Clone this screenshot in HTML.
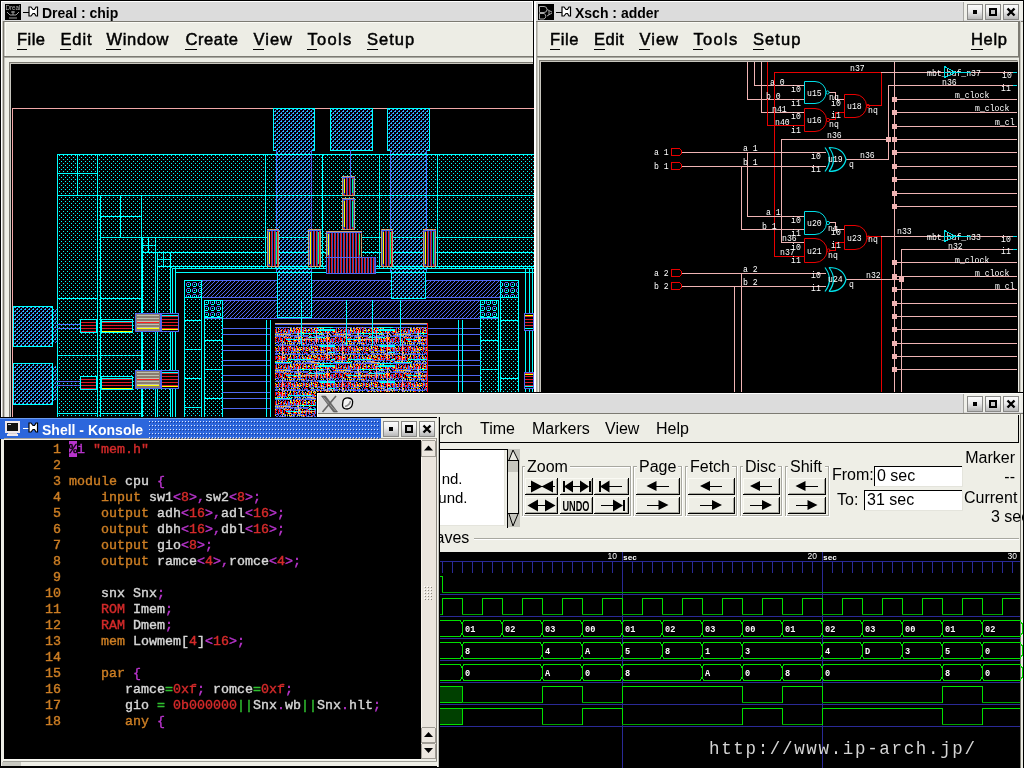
<!DOCTYPE html>
<html><head><meta charset="utf-8"><style>
html,body{margin:0;padding:0;background:#000;overflow:hidden;width:1024px;height:768px}
svg{display:block;will-change:transform}
text{white-space:pre}
</style></head><body>
<svg width="1024" height="768" viewBox="0 0 1024 768" shape-rendering="crispEdges">
<rect x="0" y="0" width="1024" height="768" fill="#000" />
<rect x="1" y="1" width="532" height="767" fill="#fff" />
<rect x="2" y="2" width="530" height="19" fill="#dcdcdc" />
<rect x="2" y="21" width="530" height="747" fill="#eeeee6" />
<rect x="2" y="21" width="1" height="747" fill="#c8c6be" />
<rect x="3" y="21" width="1" height="747" fill="#7c7a72" />
<rect x="4" y="22" width="1" height="746" fill="#c8c6be" />
<rect x="3" y="21" width="530" height="1" fill="#7c7a72" />
<rect x="5" y="22" width="528" height="34" fill="#edede5" />
<rect x="5" y="22" width="528" height="1" fill="#fbfbf5" />
<rect x="5" y="22" width="1" height="34" fill="#fbfbf5" />
<rect x="4" y="56" width="529" height="1" fill="#7c7a72" />
<rect x="4" y="57" width="529" height="1" fill="#a8a8a0" />
<rect x="9" y="62" width="524" height="1" fill="#7c7a72" />
<rect x="10" y="63" width="523" height="1" fill="#c8c6be" />
<rect x="9" y="62" width="1" height="706" fill="#7c7a72" />
<rect x="10" y="63" width="1" height="705" fill="#c8c6be" />
<rect x="11" y="64" width="522" height="704" fill="#000" />
<text x="42" y="18" font-family="Liberation Sans" font-size="14" font-weight="bold" fill="#000" >Dreal : chip</text>
<text x="17" y="45" font-family="Liberation Sans" font-size="16.5" font-weight="normal" fill="#000" stroke="#000" stroke-width="0.5" textLength="28.0" lengthAdjust="spacing">File</text>
<rect x="17" y="49" width="10" height="1" fill="#000" />
<text x="60.5" y="45" font-family="Liberation Sans" font-size="16.5" font-weight="normal" fill="#000" stroke="#000" stroke-width="0.5" textLength="31.0" lengthAdjust="spacing">Edit</text>
<rect x="60" y="49" width="11" height="1" fill="#000" />
<text x="106.5" y="45" font-family="Liberation Sans" font-size="16.5" font-weight="normal" fill="#000" stroke="#000" stroke-width="0.5" textLength="62.0" lengthAdjust="spacing">Window</text>
<rect x="106" y="49" width="15" height="1" fill="#000" />
<text x="185.5" y="45" font-family="Liberation Sans" font-size="16.5" font-weight="normal" fill="#000" stroke="#000" stroke-width="0.5" textLength="52.5" lengthAdjust="spacing">Create</text>
<rect x="185" y="49" width="12" height="1" fill="#000" />
<text x="253.5" y="45" font-family="Liberation Sans" font-size="16.5" font-weight="normal" fill="#000" stroke="#000" stroke-width="0.5" textLength="38.5" lengthAdjust="spacing">View</text>
<rect x="253" y="49" width="11" height="1" fill="#000" />
<text x="307.5" y="45" font-family="Liberation Sans" font-size="16.5" font-weight="normal" fill="#000" stroke="#000" stroke-width="0.5" textLength="43.7" lengthAdjust="spacing">Tools</text>
<rect x="307" y="49" width="10" height="1" fill="#000" />
<text x="367" y="45" font-family="Liberation Sans" font-size="16.5" font-weight="normal" fill="#000" stroke="#000" stroke-width="0.5" textLength="47.2" lengthAdjust="spacing">Setup</text>
<rect x="367" y="49" width="11" height="1" fill="#000" />
<rect x="534" y="1" width="490" height="767" fill="#fff" />
<rect x="536" y="2" width="488" height="19" fill="#dcdcdc" />
<rect x="536" y="21" width="488" height="747" fill="#eeeee6" />
<rect x="536" y="21" width="1" height="747" fill="#a8a8a0" />
<rect x="537" y="22" width="1" height="746" fill="#c8c6be" />
<rect x="536" y="21" width="488" height="1" fill="#7c7a72" />
<rect x="538" y="22" width="480" height="34" fill="#edede5" />
<rect x="538" y="22" width="481" height="1" fill="#fbfbf5" />
<rect x="1018" y="22" width="1" height="36" fill="#7c7a72" />
<rect x="1019" y="22" width="1" height="36" fill="#a8a8a0" />
<rect x="537" y="56" width="483" height="1" fill="#7c7a72" />
<rect x="537" y="57" width="483" height="1" fill="#a8a8a0" />
<rect x="539" y="60" width="480" height="1" fill="#7c7a72" />
<rect x="540" y="61" width="479" height="1" fill="#c8c6be" />
<rect x="539" y="60" width="1" height="708" fill="#7c7a72" />
<rect x="540" y="61" width="1" height="707" fill="#c8c6be" />
<rect x="541" y="62" width="476" height="706" fill="#000" />
<rect x="1017" y="60" width="1" height="708" fill="#a8a8a0" />
<rect x="1018" y="60" width="1" height="708" fill="#eeeee6" />
<rect x="1019" y="21" width="1" height="747" fill="#7c7a72" />
<rect x="1020" y="21" width="1" height="747" fill="#c8c6be" />
<rect x="1023" y="0" width="1" height="768" fill="#000" />
<text x="575" y="18" font-family="Liberation Sans" font-size="14" font-weight="bold" fill="#000" >Xsch : adder</text>
<text x="550" y="45" font-family="Liberation Sans" font-size="16.5" font-weight="normal" fill="#000" stroke="#000" stroke-width="0.5" textLength="28.5" lengthAdjust="spacing">File</text>
<rect x="550" y="49" width="10" height="1" fill="#000" />
<text x="594" y="45" font-family="Liberation Sans" font-size="16.5" font-weight="normal" fill="#000" stroke="#000" stroke-width="0.5" textLength="29.9" lengthAdjust="spacing">Edit</text>
<rect x="594" y="49" width="11" height="1" fill="#000" />
<text x="639.5" y="45" font-family="Liberation Sans" font-size="16.5" font-weight="normal" fill="#000" stroke="#000" stroke-width="0.5" textLength="38.5" lengthAdjust="spacing">View</text>
<rect x="639" y="49" width="11" height="1" fill="#000" />
<text x="693.5" y="45" font-family="Liberation Sans" font-size="16.5" font-weight="normal" fill="#000" stroke="#000" stroke-width="0.5" textLength="43.7" lengthAdjust="spacing">Tools</text>
<rect x="693" y="49" width="10" height="1" fill="#000" />
<text x="753" y="45" font-family="Liberation Sans" font-size="16.5" font-weight="normal" fill="#000" stroke="#000" stroke-width="0.5" textLength="47.5" lengthAdjust="spacing">Setup</text>
<rect x="753" y="49" width="11" height="1" fill="#000" />
<text x="971" y="45" font-family="Liberation Sans" font-size="16.5" font-weight="normal" fill="#000" stroke="#000" stroke-width="0.5" textLength="36.0" lengthAdjust="spacing">Help</text>
<rect x="971" y="49" width="12" height="1" fill="#000" />
<defs><pattern id="pDot" patternUnits="userSpaceOnUse" x="0" y="0" width="4" height="4"><rect x="1" y="1" width="1" height="1" fill="#00ffff"/><rect x="3" y="3" width="1" height="1" fill="#00ffff"/></pattern><pattern id="pHat" patternUnits="userSpaceOnUse" x="0" y="0" width="4" height="4"><rect x="0" y="0" width="4" height="4" fill="#000"/><rect x="1" y="0" width="1" height="1" fill="#5068f0"/><rect x="0" y="1" width="1" height="1" fill="#5068f0"/><rect x="3" y="2" width="1" height="1" fill="#5068f0"/><rect x="2" y="3" width="1" height="1" fill="#5068f0"/><rect x="1" y="1" width="1" height="1" fill="#00ffff"/><rect x="3" y="3" width="1" height="1" fill="#00ffff"/></pattern><pattern id="pBand" patternUnits="userSpaceOnUse" x="0" y="0" width="4" height="4"><rect x="3" y="0" width="1" height="1" fill="#5068f0"/><rect x="2" y="1" width="1" height="1" fill="#5068f0"/><rect x="1" y="2" width="1" height="1" fill="#5068f0"/><rect x="0" y="3" width="1" height="1" fill="#5068f0"/></pattern><pattern id="pRing" patternUnits="userSpaceOnUse" x="0" y="0" width="6" height="6"><rect x="0" y="0" width="6" height="6" fill="#000"/><rect x="1" y="0" width="3" height="1" fill="#5068f0"/><rect x="0" y="1" width="1" height="3" fill="#5068f0"/><rect x="4" y="1" width="1" height="3" fill="#00ffff"/><rect x="1" y="4" width="3" height="1" fill="#00ffff"/><rect x="2" y="2" width="1" height="1" fill="#00ffff"/></pattern><pattern id="pCore" patternUnits="userSpaceOnUse" x="275" y="327" width="60" height="36"><rect x="0" y="0" width="13" height="1" fill="#5068f0"/><rect x="13" y="0" width="1" height="1" fill="#d8b080"/><rect x="14" y="0" width="3" height="1" fill="#5068f0"/><rect x="18" y="0" width="2" height="1" fill="#5068f0"/><rect x="21" y="0" width="1" height="1" fill="#5068f0"/><rect x="22" y="0" width="1" height="1" fill="#d8b080"/><rect x="23" y="0" width="4" height="1" fill="#5068f0"/><rect x="27" y="0" width="1" height="1" fill="#d8b080"/><rect x="28" y="0" width="14" height="1" fill="#5068f0"/><rect x="42" y="0" width="16" height="1" fill="#00ffff"/><rect x="58" y="0" width="2" height="1" fill="#5068f0"/><rect x="1" y="1" width="1" height="1" fill="#5068f0"/><rect x="3" y="1" width="1" height="1" fill="#ffff00"/><rect x="5" y="1" width="1" height="1" fill="#5068f0"/><rect x="8" y="1" width="1" height="1" fill="#5068f0"/><rect x="10" y="1" width="1" height="1" fill="#ff0000"/><rect x="15" y="1" width="1" height="1" fill="#ffff00"/><rect x="16" y="1" width="1" height="1" fill="#5068f0"/><rect x="18" y="1" width="1" height="1" fill="#ffff00"/><rect x="19" y="1" width="1" height="1" fill="#5068f0"/><rect x="20" y="1" width="1" height="1" fill="#ff0000"/><rect x="21" y="1" width="1" height="1" fill="#ffff00"/><rect x="22" y="1" width="1" height="1" fill="#ff0000"/><rect x="24" y="1" width="1" height="1" fill="#ffff00"/><rect x="25" y="1" width="1" height="1" fill="#ff0000"/><rect x="26" y="1" width="1" height="1" fill="#5068f0"/><rect x="28" y="1" width="1" height="1" fill="#ff0000"/><rect x="29" y="1" width="1" height="1" fill="#5068f0"/><rect x="30" y="1" width="1" height="1" fill="#ffff00"/><rect x="34" y="1" width="1" height="1" fill="#ff0000"/><rect x="35" y="1" width="1" height="1" fill="#5068f0"/><rect x="36" y="1" width="1" height="1" fill="#ffff00"/><rect x="39" y="1" width="1" height="1" fill="#ffff00"/><rect x="40" y="1" width="2" height="1" fill="#ff0000"/><rect x="42" y="1" width="1" height="1" fill="#ffff00"/><rect x="43" y="1" width="1" height="1" fill="#5068f0"/><rect x="45" y="1" width="1" height="1" fill="#ffff00"/><rect x="46" y="1" width="1" height="1" fill="#ff0000"/><rect x="47" y="1" width="1" height="1" fill="#5068f0"/><rect x="48" y="1" width="1" height="1" fill="#ffff00"/><rect x="55" y="1" width="1" height="1" fill="#ff0000"/><rect x="0" y="2" width="1" height="1" fill="#ff0000"/><rect x="1" y="2" width="1" height="1" fill="#5068f0"/><rect x="3" y="2" width="1" height="1" fill="#ff0000"/><rect x="4" y="2" width="1" height="1" fill="#5068f0"/><rect x="6" y="2" width="1" height="1" fill="#ff0000"/><rect x="7" y="2" width="1" height="1" fill="#5068f0"/><rect x="9" y="2" width="1" height="1" fill="#ff0000"/><rect x="10" y="2" width="1" height="1" fill="#5068f0"/><rect x="12" y="2" width="1" height="1" fill="#ff0000"/><rect x="13" y="2" width="1" height="1" fill="#5068f0"/><rect x="15" y="2" width="1" height="1" fill="#ffff00"/><rect x="16" y="2" width="1" height="1" fill="#5068f0"/><rect x="18" y="2" width="1" height="1" fill="#ff0000"/><rect x="19" y="2" width="2" height="1" fill="#5068f0"/><rect x="21" y="2" width="1" height="1" fill="#ff0000"/><rect x="22" y="2" width="1" height="1" fill="#ffff00"/><rect x="23" y="2" width="2" height="1" fill="#ff0000"/><rect x="25" y="2" width="1" height="1" fill="#5068f0"/><rect x="27" y="2" width="1" height="1" fill="#ff0000"/><rect x="28" y="2" width="1" height="1" fill="#5068f0"/><rect x="30" y="2" width="1" height="1" fill="#ff0000"/><rect x="31" y="2" width="1" height="1" fill="#5068f0"/><rect x="33" y="2" width="1" height="1" fill="#ffff00"/><rect x="34" y="2" width="1" height="1" fill="#5068f0"/><rect x="36" y="2" width="1" height="1" fill="#ff0000"/><rect x="37" y="2" width="2" height="1" fill="#5068f0"/><rect x="39" y="2" width="1" height="1" fill="#ffff00"/><rect x="41" y="2" width="1" height="1" fill="#5068f0"/><rect x="42" y="2" width="1" height="1" fill="#ff0000"/><rect x="43" y="2" width="1" height="1" fill="#5068f0"/><rect x="44" y="2" width="16" height="1" fill="#00ffff"/><rect x="0" y="3" width="1" height="1" fill="#ff0000"/><rect x="1" y="3" width="1" height="1" fill="#5068f0"/><rect x="3" y="3" width="1" height="1" fill="#ff0000"/><rect x="5" y="3" width="1" height="1" fill="#5068f0"/><rect x="6" y="3" width="1" height="1" fill="#ffff00"/><rect x="8" y="3" width="2" height="1" fill="#ff0000"/><rect x="10" y="3" width="1" height="1" fill="#5068f0"/><rect x="12" y="3" width="1" height="1" fill="#ff0000"/><rect x="13" y="3" width="2" height="1" fill="#5068f0"/><rect x="15" y="3" width="2" height="1" fill="#ffff00"/><rect x="17" y="3" width="1" height="1" fill="#5068f0"/><rect x="18" y="3" width="1" height="1" fill="#ff0000"/><rect x="19" y="3" width="1" height="1" fill="#ffff00"/><rect x="21" y="3" width="1" height="1" fill="#ff0000"/><rect x="23" y="3" width="1" height="1" fill="#f0a0a0"/><rect x="24" y="3" width="1" height="1" fill="#ff0000"/><rect x="25" y="3" width="1" height="1" fill="#5068f0"/><rect x="27" y="3" width="1" height="1" fill="#ff0000"/><rect x="28" y="3" width="1" height="1" fill="#5068f0"/><rect x="29" y="3" width="2" height="1" fill="#ffff00"/><rect x="31" y="3" width="2" height="1" fill="#5068f0"/><rect x="33" y="3" width="2" height="1" fill="#ffff00"/><rect x="36" y="3" width="1" height="1" fill="#ff0000"/><rect x="37" y="3" width="1" height="1" fill="#5068f0"/><rect x="38" y="3" width="2" height="1" fill="#ff0000"/><rect x="40" y="3" width="1" height="1" fill="#00ffff"/><rect x="41" y="3" width="1" height="1" fill="#f0a0a0"/><rect x="42" y="3" width="18" height="1" fill="#00ffff"/><rect x="0" y="4" width="1" height="1" fill="#ff0000"/><rect x="1" y="4" width="1" height="1" fill="#5068f0"/><rect x="3" y="4" width="1" height="1" fill="#ffff00"/><rect x="4" y="4" width="2" height="1" fill="#5068f0"/><rect x="6" y="4" width="1" height="1" fill="#ff0000"/><rect x="8" y="4" width="1" height="1" fill="#5068f0"/><rect x="9" y="4" width="1" height="1" fill="#ffff00"/><rect x="10" y="4" width="2" height="1" fill="#5068f0"/><rect x="12" y="4" width="1" height="1" fill="#ff0000"/><rect x="13" y="4" width="2" height="1" fill="#5068f0"/><rect x="15" y="4" width="1" height="1" fill="#ff0000"/><rect x="16" y="4" width="1" height="1" fill="#5068f0"/><rect x="17" y="4" width="1" height="1" fill="#ffff00"/><rect x="18" y="4" width="1" height="1" fill="#ff0000"/><rect x="19" y="4" width="2" height="1" fill="#5068f0"/><rect x="21" y="4" width="1" height="1" fill="#ff0000"/><rect x="22" y="4" width="1" height="1" fill="#5068f0"/><rect x="23" y="4" width="1" height="1" fill="#f0a0a0"/><rect x="24" y="4" width="1" height="1" fill="#ff0000"/><rect x="25" y="4" width="1" height="1" fill="#ffff00"/><rect x="27" y="4" width="1" height="1" fill="#ff0000"/><rect x="28" y="4" width="1" height="1" fill="#5068f0"/><rect x="30" y="4" width="1" height="1" fill="#ff0000"/><rect x="31" y="4" width="2" height="1" fill="#5068f0"/><rect x="33" y="4" width="1" height="1" fill="#ff0000"/><rect x="35" y="4" width="1" height="1" fill="#5068f0"/><rect x="36" y="4" width="1" height="1" fill="#ff0000"/><rect x="37" y="4" width="2" height="1" fill="#5068f0"/><rect x="39" y="4" width="1" height="1" fill="#ff0000"/><rect x="40" y="4" width="1" height="1" fill="#5068f0"/><rect x="41" y="4" width="1" height="1" fill="#f0a0a0"/><rect x="42" y="4" width="1" height="1" fill="#ff0000"/><rect x="44" y="4" width="1" height="1" fill="#5068f0"/><rect x="45" y="4" width="1" height="1" fill="#ffff00"/><rect x="48" y="4" width="1" height="1" fill="#ff0000"/><rect x="50" y="4" width="1" height="1" fill="#ffff00"/><rect x="51" y="4" width="1" height="1" fill="#ff0000"/><rect x="52" y="4" width="2" height="1" fill="#5068f0"/><rect x="54" y="4" width="1" height="1" fill="#ff0000"/><rect x="55" y="4" width="1" height="1" fill="#5068f0"/><rect x="57" y="4" width="1" height="1" fill="#ff0000"/><rect x="58" y="4" width="2" height="1" fill="#ffff00"/><rect x="0" y="5" width="1" height="1" fill="#ff0000"/><rect x="1" y="5" width="1" height="1" fill="#ffff00"/><rect x="2" y="5" width="1" height="1" fill="#5068f0"/><rect x="3" y="5" width="1" height="1" fill="#ff0000"/><rect x="5" y="5" width="2" height="1" fill="#ff0000"/><rect x="8" y="5" width="1" height="1" fill="#5068f0"/><rect x="9" y="5" width="1" height="1" fill="#ff0000"/><rect x="11" y="5" width="1" height="1" fill="#ffff00"/><rect x="12" y="5" width="1" height="1" fill="#ff0000"/><rect x="13" y="5" width="2" height="1" fill="#5068f0"/><rect x="15" y="5" width="1" height="1" fill="#ff0000"/><rect x="16" y="5" width="1" height="1" fill="#5068f0"/><rect x="18" y="5" width="1" height="1" fill="#ff0000"/><rect x="19" y="5" width="2" height="1" fill="#5068f0"/><rect x="21" y="5" width="1" height="1" fill="#ff0000"/><rect x="22" y="5" width="1" height="1" fill="#5068f0"/><rect x="23" y="5" width="1" height="1" fill="#f0a0a0"/><rect x="24" y="5" width="1" height="1" fill="#ff0000"/><rect x="25" y="5" width="1" height="1" fill="#5068f0"/><rect x="27" y="5" width="2" height="1" fill="#ffff00"/><rect x="29" y="5" width="2" height="1" fill="#ff0000"/><rect x="31" y="5" width="1" height="1" fill="#5068f0"/><rect x="33" y="5" width="1" height="1" fill="#ff0000"/><rect x="34" y="5" width="1" height="1" fill="#5068f0"/><rect x="36" y="5" width="1" height="1" fill="#ff0000"/><rect x="38" y="5" width="1" height="1" fill="#ffff00"/><rect x="39" y="5" width="1" height="1" fill="#ff0000"/><rect x="40" y="5" width="1" height="1" fill="#5068f0"/><rect x="41" y="5" width="1" height="1" fill="#f0a0a0"/><rect x="42" y="5" width="1" height="1" fill="#ff0000"/><rect x="43" y="5" width="1" height="1" fill="#ffff00"/><rect x="45" y="5" width="1" height="1" fill="#ff0000"/><rect x="46" y="5" width="1" height="1" fill="#ffff00"/><rect x="47" y="5" width="1" height="1" fill="#5068f0"/><rect x="48" y="5" width="1" height="1" fill="#ff0000"/><rect x="50" y="5" width="1" height="1" fill="#5068f0"/><rect x="51" y="5" width="1" height="1" fill="#ff0000"/><rect x="52" y="5" width="1" height="1" fill="#f0a0a0"/><rect x="53" y="5" width="1" height="1" fill="#ffff00"/><rect x="54" y="5" width="1" height="1" fill="#ff0000"/><rect x="56" y="5" width="1" height="1" fill="#5068f0"/><rect x="57" y="5" width="1" height="1" fill="#ff0000"/><rect x="58" y="5" width="1" height="1" fill="#5068f0"/><rect x="59" y="5" width="1" height="1" fill="#ff0000"/><rect x="0" y="6" width="10" height="1" fill="#5068f0"/><rect x="10" y="6" width="1" height="1" fill="#80ff40"/><rect x="11" y="6" width="7" height="1" fill="#5068f0"/><rect x="18" y="6" width="1" height="1" fill="#80ff40"/><rect x="19" y="6" width="3" height="1" fill="#5068f0"/><rect x="22" y="6" width="1" height="1" fill="#00ffff"/><rect x="23" y="6" width="1" height="1" fill="#f0a0a0"/><rect x="24" y="6" width="17" height="1" fill="#00ffff"/><rect x="41" y="6" width="1" height="1" fill="#f0a0a0"/><rect x="42" y="6" width="6" height="1" fill="#00ffff"/><rect x="48" y="6" width="4" height="1" fill="#5068f0"/><rect x="52" y="6" width="1" height="1" fill="#f0a0a0"/><rect x="53" y="6" width="2" height="1" fill="#5068f0"/><rect x="57" y="6" width="2" height="1" fill="#5068f0"/><rect x="0" y="7" width="1" height="1" fill="#ffff00"/><rect x="1" y="7" width="1" height="1" fill="#5068f0"/><rect x="2" y="7" width="1" height="1" fill="#ffff00"/><rect x="3" y="7" width="1" height="1" fill="#5068f0"/><rect x="4" y="7" width="1" height="1" fill="#ffff00"/><rect x="5" y="7" width="1" height="1" fill="#ff0000"/><rect x="6" y="7" width="1" height="1" fill="#ffff00"/><rect x="7" y="7" width="1" height="1" fill="#ff0000"/><rect x="8" y="7" width="1" height="1" fill="#ffff00"/><rect x="9" y="7" width="7" height="1" fill="#d8b080"/><rect x="17" y="7" width="1" height="1" fill="#ff0000"/><rect x="22" y="7" width="1" height="1" fill="#ffff00"/><rect x="23" y="7" width="1" height="1" fill="#f0a0a0"/><rect x="25" y="7" width="1" height="1" fill="#5068f0"/><rect x="28" y="7" width="1" height="1" fill="#ffff00"/><rect x="34" y="7" width="1" height="1" fill="#ffff00"/><rect x="35" y="7" width="2" height="1" fill="#ff0000"/><rect x="41" y="7" width="1" height="1" fill="#f0a0a0"/><rect x="44" y="7" width="1" height="1" fill="#ffff00"/><rect x="45" y="7" width="1" height="1" fill="#5068f0"/><rect x="46" y="7" width="1" height="1" fill="#ffff00"/><rect x="47" y="7" width="1" height="1" fill="#5068f0"/><rect x="48" y="7" width="1" height="1" fill="#ffff00"/><rect x="52" y="7" width="1" height="1" fill="#f0a0a0"/><rect x="54" y="7" width="1" height="1" fill="#ffff00"/><rect x="55" y="7" width="1" height="1" fill="#5068f0"/><rect x="58" y="7" width="2" height="1" fill="#ff0000"/><rect x="0" y="8" width="2" height="1" fill="#5068f0"/><rect x="2" y="8" width="1" height="1" fill="#d8b080"/><rect x="3" y="8" width="3" height="1" fill="#5068f0"/><rect x="6" y="8" width="1" height="1" fill="#d8b080"/><rect x="7" y="8" width="1" height="1" fill="#5068f0"/><rect x="8" y="8" width="1" height="1" fill="#d8b080"/><rect x="10" y="8" width="4" height="1" fill="#5068f0"/><rect x="14" y="8" width="1" height="1" fill="#d8b080"/><rect x="15" y="8" width="5" height="1" fill="#5068f0"/><rect x="20" y="8" width="1" height="1" fill="#d8b080"/><rect x="21" y="8" width="2" height="1" fill="#5068f0"/><rect x="23" y="8" width="1" height="1" fill="#f0a0a0"/><rect x="24" y="8" width="10" height="1" fill="#5068f0"/><rect x="35" y="8" width="1" height="1" fill="#5068f0"/><rect x="38" y="8" width="2" height="1" fill="#5068f0"/><rect x="41" y="8" width="1" height="1" fill="#f0a0a0"/><rect x="42" y="8" width="3" height="1" fill="#5068f0"/><rect x="46" y="8" width="4" height="1" fill="#5068f0"/><rect x="51" y="8" width="1" height="1" fill="#5068f0"/><rect x="52" y="8" width="1" height="1" fill="#f0a0a0"/><rect x="53" y="8" width="1" height="1" fill="#5068f0"/><rect x="55" y="8" width="1" height="1" fill="#d8b080"/><rect x="56" y="8" width="1" height="1" fill="#5068f0"/><rect x="58" y="8" width="2" height="1" fill="#5068f0"/><rect x="0" y="9" width="7" height="1" fill="#5068f0"/><rect x="7" y="9" width="1" height="1" fill="#d8b080"/><rect x="8" y="9" width="2" height="1" fill="#5068f0"/><rect x="10" y="9" width="1" height="1" fill="#d8b080"/><rect x="11" y="9" width="1" height="1" fill="#5068f0"/><rect x="13" y="9" width="1" height="1" fill="#5068f0"/><rect x="15" y="9" width="3" height="1" fill="#5068f0"/><rect x="19" y="9" width="4" height="1" fill="#5068f0"/><rect x="23" y="9" width="1" height="1" fill="#f0a0a0"/><rect x="24" y="9" width="1" height="1" fill="#5068f0"/><rect x="25" y="9" width="1" height="1" fill="#d8b080"/><rect x="26" y="9" width="1" height="1" fill="#5068f0"/><rect x="28" y="9" width="5" height="1" fill="#5068f0"/><rect x="34" y="9" width="2" height="1" fill="#d8b080"/><rect x="36" y="9" width="1" height="1" fill="#5068f0"/><rect x="39" y="9" width="2" height="1" fill="#5068f0"/><rect x="41" y="9" width="1" height="1" fill="#f0a0a0"/><rect x="42" y="9" width="6" height="1" fill="#5068f0"/><rect x="49" y="9" width="3" height="1" fill="#5068f0"/><rect x="52" y="9" width="1" height="1" fill="#f0a0a0"/><rect x="53" y="9" width="1" height="1" fill="#5068f0"/><rect x="55" y="9" width="5" height="1" fill="#5068f0"/><rect x="0" y="10" width="1" height="1" fill="#ffff00"/><rect x="1" y="10" width="2" height="1" fill="#ff0000"/><rect x="4" y="10" width="1" height="1" fill="#5068f0"/><rect x="5" y="10" width="1" height="1" fill="#ff0000"/><rect x="8" y="10" width="1" height="1" fill="#5068f0"/><rect x="9" y="10" width="1" height="1" fill="#ffff00"/><rect x="10" y="10" width="2" height="1" fill="#ff0000"/><rect x="12" y="10" width="1" height="1" fill="#ffff00"/><rect x="13" y="10" width="2" height="1" fill="#ff0000"/><rect x="15" y="10" width="1" height="1" fill="#ffff00"/><rect x="19" y="10" width="2" height="1" fill="#5068f0"/><rect x="21" y="10" width="1" height="1" fill="#ffff00"/><rect x="22" y="10" width="1" height="1" fill="#5068f0"/><rect x="23" y="10" width="1" height="1" fill="#f0a0a0"/><rect x="24" y="10" width="1" height="1" fill="#ffff00"/><rect x="25" y="10" width="1" height="1" fill="#ff0000"/><rect x="27" y="10" width="1" height="1" fill="#ffff00"/><rect x="31" y="10" width="2" height="1" fill="#ff0000"/><rect x="33" y="10" width="8" height="1" fill="#00ffff"/><rect x="41" y="10" width="1" height="1" fill="#f0a0a0"/><rect x="42" y="10" width="8" height="1" fill="#00ffff"/><rect x="51" y="10" width="1" height="1" fill="#ffff00"/><rect x="52" y="10" width="1" height="1" fill="#f0a0a0"/><rect x="53" y="10" width="1" height="1" fill="#ff0000"/><rect x="54" y="10" width="1" height="1" fill="#ffff00"/><rect x="0" y="11" width="1" height="1" fill="#ff0000"/><rect x="1" y="11" width="1" height="1" fill="#5068f0"/><rect x="3" y="11" width="1" height="1" fill="#ff0000"/><rect x="4" y="11" width="1" height="1" fill="#5068f0"/><rect x="5" y="11" width="2" height="1" fill="#ff0000"/><rect x="7" y="11" width="1" height="1" fill="#5068f0"/><rect x="9" y="11" width="1" height="1" fill="#ff0000"/><rect x="10" y="11" width="2" height="1" fill="#5068f0"/><rect x="12" y="11" width="1" height="1" fill="#ff0000"/><rect x="13" y="11" width="2" height="1" fill="#5068f0"/><rect x="15" y="11" width="1" height="1" fill="#ff0000"/><rect x="16" y="11" width="1" height="1" fill="#5068f0"/><rect x="18" y="11" width="1" height="1" fill="#ff0000"/><rect x="19" y="11" width="1" height="1" fill="#5068f0"/><rect x="21" y="11" width="1" height="1" fill="#ff0000"/><rect x="23" y="11" width="1" height="1" fill="#f0a0a0"/><rect x="24" y="11" width="1" height="1" fill="#ffff00"/><rect x="25" y="11" width="1" height="1" fill="#5068f0"/><rect x="27" y="11" width="1" height="1" fill="#ff0000"/><rect x="29" y="11" width="1" height="1" fill="#5068f0"/><rect x="30" y="11" width="1" height="1" fill="#ff0000"/><rect x="31" y="11" width="2" height="1" fill="#5068f0"/><rect x="33" y="11" width="1" height="1" fill="#ff0000"/><rect x="34" y="11" width="1" height="1" fill="#5068f0"/><rect x="36" y="11" width="1" height="1" fill="#ff0000"/><rect x="39" y="11" width="1" height="1" fill="#ff0000"/><rect x="40" y="11" width="1" height="1" fill="#5068f0"/><rect x="41" y="11" width="1" height="1" fill="#f0a0a0"/><rect x="42" y="11" width="1" height="1" fill="#ff0000"/><rect x="43" y="11" width="1" height="1" fill="#5068f0"/><rect x="44" y="11" width="1" height="1" fill="#ffff00"/><rect x="45" y="11" width="1" height="1" fill="#ff0000"/><rect x="46" y="11" width="1" height="1" fill="#5068f0"/><rect x="48" y="11" width="1" height="1" fill="#ffff00"/><rect x="49" y="11" width="1" height="1" fill="#5068f0"/><rect x="50" y="11" width="1" height="1" fill="#ffff00"/><rect x="51" y="11" width="1" height="1" fill="#ff0000"/><rect x="52" y="11" width="1" height="1" fill="#f0a0a0"/><rect x="53" y="11" width="1" height="1" fill="#ffff00"/><rect x="54" y="11" width="1" height="1" fill="#ff0000"/><rect x="56" y="11" width="1" height="1" fill="#5068f0"/><rect x="57" y="11" width="1" height="1" fill="#ff0000"/><rect x="58" y="11" width="2" height="1" fill="#5068f0"/><rect x="0" y="12" width="1" height="1" fill="#ff0000"/><rect x="3" y="12" width="1" height="1" fill="#ff0000"/><rect x="4" y="12" width="1" height="1" fill="#5068f0"/><rect x="5" y="12" width="2" height="1" fill="#ff0000"/><rect x="7" y="12" width="1" height="1" fill="#5068f0"/><rect x="9" y="12" width="1" height="1" fill="#ff0000"/><rect x="11" y="12" width="12" height="1" fill="#00ffff"/><rect x="23" y="12" width="1" height="1" fill="#f0a0a0"/><rect x="24" y="12" width="2" height="1" fill="#00ffff"/><rect x="26" y="12" width="14" height="1" fill="#d8b080"/><rect x="40" y="12" width="1" height="1" fill="#5068f0"/><rect x="41" y="12" width="1" height="1" fill="#f0a0a0"/><rect x="42" y="12" width="1" height="1" fill="#ffff00"/><rect x="43" y="12" width="2" height="1" fill="#5068f0"/><rect x="45" y="12" width="1" height="1" fill="#ff0000"/><rect x="46" y="12" width="1" height="1" fill="#ffff00"/><rect x="48" y="12" width="1" height="1" fill="#ff0000"/><rect x="49" y="12" width="1" height="1" fill="#5068f0"/><rect x="50" y="12" width="2" height="1" fill="#ff0000"/><rect x="52" y="12" width="1" height="1" fill="#f0a0a0"/><rect x="53" y="12" width="1" height="1" fill="#ffff00"/><rect x="54" y="12" width="1" height="1" fill="#ff0000"/><rect x="55" y="12" width="1" height="1" fill="#5068f0"/><rect x="56" y="12" width="2" height="1" fill="#ff0000"/><rect x="58" y="12" width="2" height="1" fill="#5068f0"/><rect x="0" y="13" width="1" height="1" fill="#ff0000"/><rect x="1" y="13" width="1" height="1" fill="#5068f0"/><rect x="3" y="13" width="1" height="1" fill="#ff0000"/><rect x="5" y="13" width="1" height="1" fill="#5068f0"/><rect x="6" y="13" width="1" height="1" fill="#ffff00"/><rect x="7" y="13" width="1" height="1" fill="#5068f0"/><rect x="9" y="13" width="1" height="1" fill="#ff0000"/><rect x="11" y="13" width="2" height="1" fill="#ff0000"/><rect x="13" y="13" width="2" height="1" fill="#5068f0"/><rect x="15" y="13" width="1" height="1" fill="#ff0000"/><rect x="18" y="13" width="1" height="1" fill="#ff0000"/><rect x="19" y="13" width="2" height="1" fill="#ffff00"/><rect x="21" y="13" width="1" height="1" fill="#ff0000"/><rect x="22" y="13" width="1" height="1" fill="#5068f0"/><rect x="23" y="13" width="1" height="1" fill="#f0a0a0"/><rect x="24" y="13" width="1" height="1" fill="#ff0000"/><rect x="25" y="13" width="1" height="1" fill="#5068f0"/><rect x="26" y="13" width="1" height="1" fill="#ffff00"/><rect x="27" y="13" width="1" height="1" fill="#ff0000"/><rect x="28" y="13" width="1" height="1" fill="#5068f0"/><rect x="29" y="13" width="1" height="1" fill="#ffff00"/><rect x="30" y="13" width="1" height="1" fill="#ff0000"/><rect x="31" y="13" width="1" height="1" fill="#5068f0"/><rect x="33" y="13" width="1" height="1" fill="#ff0000"/><rect x="34" y="13" width="1" height="1" fill="#5068f0"/><rect x="35" y="13" width="1" height="1" fill="#ff0000"/><rect x="36" y="13" width="1" height="1" fill="#ffff00"/><rect x="39" y="13" width="1" height="1" fill="#ff0000"/><rect x="40" y="13" width="1" height="1" fill="#5068f0"/><rect x="41" y="13" width="1" height="1" fill="#f0a0a0"/><rect x="42" y="13" width="1" height="1" fill="#ff0000"/><rect x="43" y="13" width="1" height="1" fill="#5068f0"/><rect x="45" y="13" width="1" height="1" fill="#ff0000"/><rect x="46" y="13" width="2" height="1" fill="#5068f0"/><rect x="48" y="13" width="1" height="1" fill="#ff0000"/><rect x="49" y="13" width="1" height="1" fill="#ffff00"/><rect x="50" y="13" width="1" height="1" fill="#5068f0"/><rect x="51" y="13" width="1" height="1" fill="#ff0000"/><rect x="52" y="13" width="1" height="1" fill="#f0a0a0"/><rect x="54" y="13" width="1" height="1" fill="#ff0000"/><rect x="55" y="13" width="2" height="1" fill="#5068f0"/><rect x="57" y="13" width="1" height="1" fill="#ff0000"/><rect x="58" y="13" width="1" height="1" fill="#5068f0"/><rect x="0" y="14" width="1" height="1" fill="#ff0000"/><rect x="2" y="14" width="1" height="1" fill="#5068f0"/><rect x="3" y="14" width="1" height="1" fill="#ff0000"/><rect x="4" y="14" width="1" height="1" fill="#5068f0"/><rect x="5" y="14" width="2" height="1" fill="#ff0000"/><rect x="7" y="14" width="1" height="1" fill="#5068f0"/><rect x="8" y="14" width="1" height="1" fill="#ffff00"/><rect x="9" y="14" width="1" height="1" fill="#ff0000"/><rect x="12" y="14" width="1" height="1" fill="#ff0000"/><rect x="13" y="14" width="3" height="1" fill="#ffff00"/><rect x="16" y="14" width="1" height="1" fill="#5068f0"/><rect x="18" y="14" width="1" height="1" fill="#ff0000"/><rect x="19" y="14" width="1" height="1" fill="#5068f0"/><rect x="20" y="14" width="2" height="1" fill="#ff0000"/><rect x="23" y="14" width="1" height="1" fill="#f0a0a0"/><rect x="24" y="14" width="1" height="1" fill="#ffff00"/><rect x="25" y="14" width="1" height="1" fill="#5068f0"/><rect x="27" y="14" width="1" height="1" fill="#ff0000"/><rect x="30" y="14" width="1" height="1" fill="#ff0000"/><rect x="31" y="14" width="1" height="1" fill="#5068f0"/><rect x="33" y="14" width="1" height="1" fill="#ff0000"/><rect x="34" y="14" width="1" height="1" fill="#5068f0"/><rect x="36" y="14" width="1" height="1" fill="#ff0000"/><rect x="37" y="14" width="2" height="1" fill="#5068f0"/><rect x="39" y="14" width="1" height="1" fill="#ff0000"/><rect x="40" y="14" width="1" height="1" fill="#5068f0"/><rect x="41" y="14" width="1" height="1" fill="#f0a0a0"/><rect x="42" y="14" width="1" height="1" fill="#ff0000"/><rect x="43" y="14" width="1" height="1" fill="#5068f0"/><rect x="45" y="14" width="1" height="1" fill="#ff0000"/><rect x="46" y="14" width="1" height="1" fill="#ffff00"/><rect x="47" y="14" width="1" height="1" fill="#5068f0"/><rect x="48" y="14" width="1" height="1" fill="#ff0000"/><rect x="49" y="14" width="2" height="1" fill="#5068f0"/><rect x="51" y="14" width="1" height="1" fill="#ff0000"/><rect x="52" y="14" width="1" height="1" fill="#f0a0a0"/><rect x="54" y="14" width="1" height="1" fill="#ff0000"/><rect x="55" y="14" width="1" height="1" fill="#ffff00"/><rect x="56" y="14" width="1" height="1" fill="#5068f0"/><rect x="57" y="14" width="1" height="1" fill="#ff0000"/><rect x="58" y="14" width="1" height="1" fill="#5068f0"/><rect x="59" y="14" width="1" height="1" fill="#ff0000"/><rect x="0" y="15" width="4" height="1" fill="#5068f0"/><rect x="6" y="15" width="2" height="1" fill="#5068f0"/><rect x="8" y="15" width="1" height="1" fill="#80ff40"/><rect x="9" y="15" width="2" height="1" fill="#5068f0"/><rect x="12" y="15" width="1" height="1" fill="#5068f0"/><rect x="14" y="15" width="1" height="1" fill="#5068f0"/><rect x="16" y="15" width="5" height="1" fill="#5068f0"/><rect x="22" y="15" width="7" height="1" fill="#5068f0"/><rect x="30" y="15" width="2" height="1" fill="#5068f0"/><rect x="34" y="15" width="2" height="1" fill="#5068f0"/><rect x="38" y="15" width="2" height="1" fill="#5068f0"/><rect x="41" y="15" width="1" height="1" fill="#f0a0a0"/><rect x="43" y="15" width="1" height="1" fill="#5068f0"/><rect x="45" y="15" width="1" height="1" fill="#5068f0"/><rect x="47" y="15" width="2" height="1" fill="#5068f0"/><rect x="51" y="15" width="1" height="1" fill="#5068f0"/><rect x="52" y="15" width="1" height="1" fill="#f0a0a0"/><rect x="53" y="15" width="5" height="1" fill="#5068f0"/><rect x="58" y="15" width="1" height="1" fill="#80ff40"/><rect x="0" y="16" width="1" height="1" fill="#ffff00"/><rect x="3" y="16" width="1" height="1" fill="#5068f0"/><rect x="5" y="16" width="1" height="1" fill="#5068f0"/><rect x="7" y="16" width="1" height="1" fill="#f0a0a0"/><rect x="9" y="16" width="1" height="1" fill="#5068f0"/><rect x="10" y="16" width="1" height="1" fill="#ffff00"/><rect x="12" y="16" width="1" height="1" fill="#ffff00"/><rect x="14" y="16" width="1" height="1" fill="#ffff00"/><rect x="15" y="16" width="1" height="1" fill="#ff0000"/><rect x="16" y="16" width="1" height="1" fill="#ffff00"/><rect x="18" y="16" width="1" height="1" fill="#ffff00"/><rect x="19" y="16" width="1" height="1" fill="#5068f0"/><rect x="22" y="16" width="1" height="1" fill="#ffff00"/><rect x="23" y="16" width="1" height="1" fill="#5068f0"/><rect x="24" y="16" width="1" height="1" fill="#ffff00"/><rect x="25" y="16" width="1" height="1" fill="#5068f0"/><rect x="26" y="16" width="1" height="1" fill="#ffff00"/><rect x="27" y="16" width="1" height="1" fill="#ff0000"/><rect x="28" y="16" width="1" height="1" fill="#ffff00"/><rect x="29" y="16" width="2" height="1" fill="#ff0000"/><rect x="31" y="16" width="1" height="1" fill="#5068f0"/><rect x="33" y="16" width="1" height="1" fill="#5068f0"/><rect x="36" y="16" width="1" height="1" fill="#ff0000"/><rect x="37" y="16" width="1" height="1" fill="#5068f0"/><rect x="38" y="16" width="1" height="1" fill="#ff0000"/><rect x="39" y="16" width="1" height="1" fill="#5068f0"/><rect x="41" y="16" width="1" height="1" fill="#f0a0a0"/><rect x="46" y="16" width="1" height="1" fill="#ffff00"/><rect x="48" y="16" width="1" height="1" fill="#ffff00"/><rect x="51" y="16" width="1" height="1" fill="#5068f0"/><rect x="52" y="16" width="1" height="1" fill="#f0a0a0"/><rect x="54" y="16" width="1" height="1" fill="#ffff00"/><rect x="55" y="16" width="1" height="1" fill="#5068f0"/><rect x="57" y="16" width="1" height="1" fill="#5068f0"/><rect x="59" y="16" width="1" height="1" fill="#5068f0"/><rect x="1" y="17" width="2" height="1" fill="#5068f0"/><rect x="4" y="17" width="3" height="1" fill="#5068f0"/><rect x="7" y="17" width="1" height="1" fill="#f0a0a0"/><rect x="8" y="17" width="3" height="1" fill="#5068f0"/><rect x="12" y="17" width="1" height="1" fill="#5068f0"/><rect x="14" y="17" width="1" height="1" fill="#5068f0"/><rect x="15" y="17" width="1" height="1" fill="#d8b080"/><rect x="16" y="17" width="4" height="1" fill="#5068f0"/><rect x="21" y="17" width="2" height="1" fill="#5068f0"/><rect x="24" y="17" width="1" height="1" fill="#5068f0"/><rect x="26" y="17" width="2" height="1" fill="#5068f0"/><rect x="28" y="17" width="1" height="1" fill="#d8b080"/><rect x="29" y="17" width="1" height="1" fill="#5068f0"/><rect x="31" y="17" width="2" height="1" fill="#5068f0"/><rect x="33" y="17" width="1" height="1" fill="#d8b080"/><rect x="34" y="17" width="2" height="1" fill="#5068f0"/><rect x="36" y="17" width="1" height="1" fill="#d8b080"/><rect x="37" y="17" width="1" height="1" fill="#5068f0"/><rect x="39" y="17" width="2" height="1" fill="#5068f0"/><rect x="42" y="17" width="9" height="1" fill="#5068f0"/><rect x="52" y="17" width="1" height="1" fill="#f0a0a0"/><rect x="53" y="17" width="7" height="1" fill="#5068f0"/><rect x="0" y="18" width="7" height="1" fill="#5068f0"/><rect x="7" y="18" width="1" height="1" fill="#f0a0a0"/><rect x="8" y="18" width="4" height="1" fill="#5068f0"/><rect x="12" y="18" width="1" height="1" fill="#d8b080"/><rect x="13" y="18" width="9" height="1" fill="#5068f0"/><rect x="23" y="18" width="2" height="1" fill="#5068f0"/><rect x="26" y="18" width="8" height="1" fill="#5068f0"/><rect x="35" y="18" width="5" height="1" fill="#5068f0"/><rect x="40" y="18" width="1" height="1" fill="#d8b080"/><rect x="41" y="18" width="3" height="1" fill="#5068f0"/><rect x="44" y="18" width="8" height="1" fill="#00ffff"/><rect x="52" y="18" width="1" height="1" fill="#f0a0a0"/><rect x="53" y="18" width="7" height="1" fill="#00ffff"/><rect x="3" y="19" width="1" height="1" fill="#ffff00"/><rect x="5" y="19" width="1" height="1" fill="#5068f0"/><rect x="7" y="19" width="1" height="1" fill="#f0a0a0"/><rect x="8" y="19" width="1" height="1" fill="#ff0000"/><rect x="11" y="19" width="1" height="1" fill="#ff0000"/><rect x="13" y="19" width="2" height="1" fill="#ff0000"/><rect x="15" y="19" width="1" height="1" fill="#ffff00"/><rect x="19" y="19" width="1" height="1" fill="#5068f0"/><rect x="21" y="19" width="1" height="1" fill="#ffff00"/><rect x="22" y="19" width="1" height="1" fill="#ff0000"/><rect x="28" y="19" width="1" height="1" fill="#5068f0"/><rect x="32" y="19" width="1" height="1" fill="#5068f0"/><rect x="35" y="19" width="1" height="1" fill="#5068f0"/><rect x="36" y="19" width="1" height="1" fill="#ffff00"/><rect x="38" y="19" width="1" height="1" fill="#ff0000"/><rect x="40" y="19" width="2" height="1" fill="#ff0000"/><rect x="42" y="19" width="1" height="1" fill="#ffff00"/><rect x="44" y="19" width="1" height="1" fill="#5068f0"/><rect x="45" y="19" width="7" height="1" fill="#00ffff"/><rect x="52" y="19" width="1" height="1" fill="#f0a0a0"/><rect x="53" y="19" width="7" height="1" fill="#00ffff"/><rect x="0" y="20" width="1" height="1" fill="#ffff00"/><rect x="3" y="20" width="1" height="1" fill="#ff0000"/><rect x="4" y="20" width="1" height="1" fill="#5068f0"/><rect x="6" y="20" width="1" height="1" fill="#ff0000"/><rect x="7" y="20" width="1" height="1" fill="#f0a0a0"/><rect x="8" y="20" width="1" height="1" fill="#5068f0"/><rect x="9" y="20" width="1" height="1" fill="#ff0000"/><rect x="10" y="20" width="1" height="1" fill="#5068f0"/><rect x="12" y="20" width="1" height="1" fill="#ff0000"/><rect x="13" y="20" width="1" height="1" fill="#5068f0"/><rect x="14" y="20" width="1" height="1" fill="#ffff00"/><rect x="15" y="20" width="1" height="1" fill="#ff0000"/><rect x="16" y="20" width="2" height="1" fill="#5068f0"/><rect x="18" y="20" width="1" height="1" fill="#ff0000"/><rect x="19" y="20" width="1" height="1" fill="#5068f0"/><rect x="21" y="20" width="1" height="1" fill="#ff0000"/><rect x="22" y="20" width="1" height="1" fill="#5068f0"/><rect x="24" y="20" width="1" height="1" fill="#ffff00"/><rect x="25" y="20" width="1" height="1" fill="#5068f0"/><rect x="26" y="20" width="1" height="1" fill="#ffff00"/><rect x="27" y="20" width="1" height="1" fill="#ff0000"/><rect x="28" y="20" width="2" height="1" fill="#5068f0"/><rect x="30" y="20" width="1" height="1" fill="#ff0000"/><rect x="31" y="20" width="1" height="1" fill="#ffff00"/><rect x="33" y="20" width="1" height="1" fill="#ff0000"/><rect x="34" y="20" width="1" height="1" fill="#5068f0"/><rect x="36" y="20" width="1" height="1" fill="#ffff00"/><rect x="37" y="20" width="1" height="1" fill="#5068f0"/><rect x="38" y="20" width="1" height="1" fill="#ffff00"/><rect x="39" y="20" width="1" height="1" fill="#ff0000"/><rect x="40" y="20" width="1" height="1" fill="#5068f0"/><rect x="42" y="20" width="1" height="1" fill="#ff0000"/><rect x="45" y="20" width="1" height="1" fill="#ff0000"/><rect x="46" y="20" width="1" height="1" fill="#5068f0"/><rect x="47" y="20" width="1" height="1" fill="#ffff00"/><rect x="48" y="20" width="1" height="1" fill="#ff0000"/><rect x="49" y="20" width="1" height="1" fill="#5068f0"/><rect x="51" y="20" width="1" height="1" fill="#ff0000"/><rect x="52" y="20" width="1" height="1" fill="#f0a0a0"/><rect x="53" y="20" width="2" height="1" fill="#ff0000"/><rect x="55" y="20" width="2" height="1" fill="#5068f0"/><rect x="57" y="20" width="1" height="1" fill="#ff0000"/><rect x="58" y="20" width="2" height="1" fill="#5068f0"/><rect x="0" y="21" width="1" height="1" fill="#ff0000"/><rect x="1" y="21" width="1" height="1" fill="#ffff00"/><rect x="2" y="21" width="1" height="1" fill="#5068f0"/><rect x="3" y="21" width="1" height="1" fill="#ff0000"/><rect x="4" y="21" width="2" height="1" fill="#5068f0"/><rect x="6" y="21" width="1" height="1" fill="#ff0000"/><rect x="7" y="21" width="1" height="1" fill="#f0a0a0"/><rect x="8" y="21" width="1" height="1" fill="#ffff00"/><rect x="9" y="21" width="1" height="1" fill="#ff0000"/><rect x="12" y="21" width="1" height="1" fill="#ff0000"/><rect x="13" y="21" width="1" height="1" fill="#5068f0"/><rect x="14" y="21" width="2" height="1" fill="#ff0000"/><rect x="16" y="21" width="1" height="1" fill="#5068f0"/><rect x="17" y="21" width="1" height="1" fill="#ffff00"/><rect x="18" y="21" width="1" height="1" fill="#ff0000"/><rect x="19" y="21" width="2" height="1" fill="#5068f0"/><rect x="21" y="21" width="1" height="1" fill="#ff0000"/><rect x="22" y="21" width="1" height="1" fill="#ffff00"/><rect x="23" y="21" width="1" height="1" fill="#5068f0"/><rect x="24" y="21" width="1" height="1" fill="#ff0000"/><rect x="25" y="21" width="1" height="1" fill="#5068f0"/><rect x="27" y="21" width="1" height="1" fill="#ff0000"/><rect x="28" y="21" width="1" height="1" fill="#ffff00"/><rect x="29" y="21" width="1" height="1" fill="#5068f0"/><rect x="30" y="21" width="1" height="1" fill="#ff0000"/><rect x="31" y="21" width="1" height="1" fill="#5068f0"/><rect x="32" y="21" width="1" height="1" fill="#ffff00"/><rect x="33" y="21" width="1" height="1" fill="#ff0000"/><rect x="34" y="21" width="2" height="1" fill="#5068f0"/><rect x="36" y="21" width="1" height="1" fill="#ffff00"/><rect x="37" y="21" width="1" height="1" fill="#5068f0"/><rect x="39" y="21" width="1" height="1" fill="#ff0000"/><rect x="40" y="21" width="2" height="1" fill="#ffff00"/><rect x="42" y="21" width="1" height="1" fill="#ff0000"/><rect x="43" y="21" width="1" height="1" fill="#5068f0"/><rect x="45" y="21" width="1" height="1" fill="#ff0000"/><rect x="46" y="21" width="1" height="1" fill="#5068f0"/><rect x="48" y="21" width="1" height="1" fill="#ff0000"/><rect x="49" y="21" width="1" height="1" fill="#5068f0"/><rect x="50" y="21" width="2" height="1" fill="#ff0000"/><rect x="52" y="21" width="1" height="1" fill="#f0a0a0"/><rect x="53" y="21" width="2" height="1" fill="#ff0000"/><rect x="55" y="21" width="1" height="1" fill="#5068f0"/><rect x="56" y="21" width="2" height="1" fill="#ff0000"/><rect x="58" y="21" width="1" height="1" fill="#ffff00"/><rect x="59" y="21" width="1" height="1" fill="#5068f0"/><rect x="0" y="22" width="1" height="1" fill="#ff0000"/><rect x="1" y="22" width="1" height="1" fill="#5068f0"/><rect x="3" y="22" width="1" height="1" fill="#ff0000"/><rect x="4" y="22" width="1" height="1" fill="#5068f0"/><rect x="6" y="22" width="1" height="1" fill="#ff0000"/><rect x="7" y="22" width="1" height="1" fill="#f0a0a0"/><rect x="8" y="22" width="1" height="1" fill="#5068f0"/><rect x="9" y="22" width="1" height="1" fill="#ff0000"/><rect x="10" y="22" width="2" height="1" fill="#5068f0"/><rect x="12" y="22" width="1" height="1" fill="#ff0000"/><rect x="13" y="22" width="2" height="1" fill="#5068f0"/><rect x="15" y="22" width="1" height="1" fill="#ff0000"/><rect x="17" y="22" width="1" height="1" fill="#5068f0"/><rect x="18" y="22" width="1" height="1" fill="#ff0000"/><rect x="19" y="22" width="1" height="1" fill="#ffff00"/><rect x="20" y="22" width="1" height="1" fill="#5068f0"/><rect x="21" y="22" width="1" height="1" fill="#ff0000"/><rect x="22" y="22" width="2" height="1" fill="#ffff00"/><rect x="24" y="22" width="1" height="1" fill="#ff0000"/><rect x="25" y="22" width="2" height="1" fill="#ffff00"/><rect x="27" y="22" width="1" height="1" fill="#ff0000"/><rect x="28" y="22" width="2" height="1" fill="#5068f0"/><rect x="30" y="22" width="1" height="1" fill="#ff0000"/><rect x="31" y="22" width="1" height="1" fill="#5068f0"/><rect x="33" y="22" width="1" height="1" fill="#ff0000"/><rect x="34" y="22" width="1" height="1" fill="#ffff00"/><rect x="35" y="22" width="1" height="1" fill="#5068f0"/><rect x="36" y="22" width="1" height="1" fill="#ff0000"/><rect x="37" y="22" width="2" height="1" fill="#5068f0"/><rect x="39" y="22" width="1" height="1" fill="#ff0000"/><rect x="40" y="22" width="2" height="1" fill="#5068f0"/><rect x="42" y="22" width="1" height="1" fill="#ff0000"/><rect x="45" y="22" width="1" height="1" fill="#ff0000"/><rect x="46" y="22" width="1" height="1" fill="#ffff00"/><rect x="47" y="22" width="1" height="1" fill="#5068f0"/><rect x="48" y="22" width="1" height="1" fill="#ff0000"/><rect x="51" y="22" width="1" height="1" fill="#ff0000"/><rect x="52" y="22" width="1" height="1" fill="#f0a0a0"/><rect x="53" y="22" width="2" height="1" fill="#ffff00"/><rect x="55" y="22" width="1" height="1" fill="#5068f0"/><rect x="57" y="22" width="1" height="1" fill="#ff0000"/><rect x="58" y="22" width="2" height="1" fill="#5068f0"/><rect x="0" y="23" width="1" height="1" fill="#ff0000"/><rect x="1" y="23" width="1" height="1" fill="#5068f0"/><rect x="2" y="23" width="1" height="1" fill="#ffff00"/><rect x="3" y="23" width="1" height="1" fill="#ff0000"/><rect x="4" y="23" width="1" height="1" fill="#5068f0"/><rect x="5" y="23" width="2" height="1" fill="#ff0000"/><rect x="7" y="23" width="1" height="1" fill="#f0a0a0"/><rect x="8" y="23" width="1" height="1" fill="#5068f0"/><rect x="9" y="23" width="1" height="1" fill="#ff0000"/><rect x="10" y="23" width="1" height="1" fill="#5068f0"/><rect x="11" y="23" width="2" height="1" fill="#ff0000"/><rect x="13" y="23" width="1" height="1" fill="#5068f0"/><rect x="15" y="23" width="1" height="1" fill="#ff0000"/><rect x="16" y="23" width="2" height="1" fill="#5068f0"/><rect x="18" y="23" width="1" height="1" fill="#ff0000"/><rect x="19" y="23" width="1" height="1" fill="#ffff00"/><rect x="20" y="23" width="1" height="1" fill="#5068f0"/><rect x="21" y="23" width="1" height="1" fill="#ff0000"/><rect x="22" y="23" width="2" height="1" fill="#5068f0"/><rect x="24" y="23" width="1" height="1" fill="#ffff00"/><rect x="25" y="23" width="1" height="1" fill="#5068f0"/><rect x="27" y="23" width="1" height="1" fill="#ff0000"/><rect x="28" y="23" width="1" height="1" fill="#5068f0"/><rect x="30" y="23" width="1" height="1" fill="#ff0000"/><rect x="31" y="23" width="2" height="1" fill="#ffff00"/><rect x="33" y="23" width="1" height="1" fill="#ff0000"/><rect x="34" y="23" width="2" height="1" fill="#5068f0"/><rect x="36" y="23" width="1" height="1" fill="#ff0000"/><rect x="38" y="23" width="1" height="1" fill="#5068f0"/><rect x="39" y="23" width="1" height="1" fill="#ff0000"/><rect x="40" y="23" width="2" height="1" fill="#ffff00"/><rect x="42" y="23" width="1" height="1" fill="#ff0000"/><rect x="43" y="23" width="2" height="1" fill="#5068f0"/><rect x="45" y="23" width="1" height="1" fill="#ff0000"/><rect x="46" y="23" width="1" height="1" fill="#ffff00"/><rect x="47" y="23" width="1" height="1" fill="#5068f0"/><rect x="48" y="23" width="1" height="1" fill="#ffff00"/><rect x="49" y="23" width="2" height="1" fill="#5068f0"/><rect x="51" y="23" width="1" height="1" fill="#ff0000"/><rect x="52" y="23" width="1" height="1" fill="#f0a0a0"/><rect x="54" y="23" width="1" height="1" fill="#ff0000"/><rect x="55" y="23" width="1" height="1" fill="#ffff00"/><rect x="57" y="23" width="1" height="1" fill="#ff0000"/><rect x="58" y="23" width="2" height="1" fill="#5068f0"/><rect x="0" y="24" width="4" height="1" fill="#5068f0"/><rect x="6" y="24" width="1" height="1" fill="#5068f0"/><rect x="7" y="24" width="1" height="1" fill="#f0a0a0"/><rect x="10" y="24" width="1" height="1" fill="#5068f0"/><rect x="12" y="24" width="3" height="1" fill="#5068f0"/><rect x="16" y="24" width="5" height="1" fill="#5068f0"/><rect x="21" y="24" width="1" height="1" fill="#80ff40"/><rect x="22" y="24" width="2" height="1" fill="#5068f0"/><rect x="26" y="24" width="1" height="1" fill="#5068f0"/><rect x="28" y="24" width="1" height="1" fill="#5068f0"/><rect x="30" y="24" width="1" height="1" fill="#5068f0"/><rect x="34" y="24" width="3" height="1" fill="#5068f0"/><rect x="37" y="24" width="1" height="1" fill="#80ff40"/><rect x="38" y="24" width="1" height="1" fill="#5068f0"/><rect x="40" y="24" width="11" height="1" fill="#5068f0"/><rect x="52" y="24" width="1" height="1" fill="#f0a0a0"/><rect x="54" y="24" width="3" height="1" fill="#5068f0"/><rect x="58" y="24" width="2" height="1" fill="#5068f0"/><rect x="1" y="25" width="1" height="1" fill="#5068f0"/><rect x="4" y="25" width="1" height="1" fill="#ffff00"/><rect x="7" y="25" width="1" height="1" fill="#f0a0a0"/><rect x="8" y="25" width="1" height="1" fill="#ffff00"/><rect x="10" y="25" width="2" height="1" fill="#ff0000"/><rect x="13" y="25" width="1" height="1" fill="#5068f0"/><rect x="16" y="25" width="1" height="1" fill="#ffff00"/><rect x="18" y="25" width="1" height="1" fill="#ffff00"/><rect x="19" y="25" width="2" height="1" fill="#ff0000"/><rect x="22" y="25" width="1" height="1" fill="#ffff00"/><rect x="23" y="25" width="1" height="1" fill="#ff0000"/><rect x="24" y="25" width="1" height="1" fill="#ffff00"/><rect x="27" y="25" width="1" height="1" fill="#5068f0"/><rect x="29" y="25" width="2" height="1" fill="#ff0000"/><rect x="31" y="25" width="1" height="1" fill="#5068f0"/><rect x="32" y="25" width="1" height="1" fill="#ff0000"/><rect x="36" y="25" width="1" height="1" fill="#ffff00"/><rect x="37" y="25" width="1" height="1" fill="#5068f0"/><rect x="38" y="25" width="1" height="1" fill="#ffff00"/><rect x="42" y="25" width="1" height="1" fill="#ffff00"/><rect x="45" y="25" width="1" height="1" fill="#ff0000"/><rect x="46" y="25" width="1" height="1" fill="#ffff00"/><rect x="47" y="25" width="1" height="1" fill="#5068f0"/><rect x="48" y="25" width="1" height="1" fill="#ffff00"/><rect x="49" y="25" width="1" height="1" fill="#5068f0"/><rect x="52" y="25" width="1" height="1" fill="#f0a0a0"/><rect x="53" y="25" width="7" height="1" fill="#00ffff"/><rect x="0" y="26" width="4" height="1" fill="#5068f0"/><rect x="4" y="26" width="1" height="1" fill="#d8b080"/><rect x="5" y="26" width="2" height="1" fill="#5068f0"/><rect x="7" y="26" width="1" height="1" fill="#f0a0a0"/><rect x="8" y="26" width="1" height="1" fill="#d8b080"/><rect x="10" y="26" width="2" height="1" fill="#5068f0"/><rect x="13" y="26" width="1" height="1" fill="#d8b080"/><rect x="14" y="26" width="7" height="1" fill="#5068f0"/><rect x="22" y="26" width="4" height="1" fill="#5068f0"/><rect x="27" y="26" width="1" height="1" fill="#5068f0"/><rect x="29" y="26" width="4" height="1" fill="#5068f0"/><rect x="35" y="26" width="10" height="1" fill="#5068f0"/><rect x="46" y="26" width="1" height="1" fill="#5068f0"/><rect x="48" y="26" width="2" height="1" fill="#5068f0"/><rect x="50" y="26" width="1" height="1" fill="#d8b080"/><rect x="51" y="26" width="1" height="1" fill="#5068f0"/><rect x="52" y="26" width="1" height="1" fill="#f0a0a0"/><rect x="53" y="26" width="2" height="1" fill="#5068f0"/><rect x="55" y="26" width="2" height="1" fill="#d8b080"/><rect x="58" y="26" width="1" height="1" fill="#d8b080"/><rect x="59" y="26" width="1" height="1" fill="#5068f0"/><rect x="0" y="27" width="3" height="1" fill="#5068f0"/><rect x="4" y="27" width="1" height="1" fill="#5068f0"/><rect x="6" y="27" width="1" height="1" fill="#5068f0"/><rect x="7" y="27" width="1" height="1" fill="#f0a0a0"/><rect x="8" y="27" width="2" height="1" fill="#5068f0"/><rect x="10" y="27" width="1" height="1" fill="#d8b080"/><rect x="11" y="27" width="4" height="1" fill="#5068f0"/><rect x="15" y="27" width="1" height="1" fill="#d8b080"/><rect x="16" y="27" width="14" height="1" fill="#5068f0"/><rect x="31" y="27" width="4" height="1" fill="#5068f0"/><rect x="36" y="27" width="1" height="1" fill="#5068f0"/><rect x="37" y="27" width="1" height="1" fill="#d8b080"/><rect x="38" y="27" width="2" height="1" fill="#5068f0"/><rect x="41" y="27" width="1" height="1" fill="#d8b080"/><rect x="42" y="27" width="3" height="1" fill="#5068f0"/><rect x="45" y="27" width="1" height="1" fill="#d8b080"/><rect x="46" y="27" width="3" height="1" fill="#5068f0"/><rect x="49" y="27" width="2" height="1" fill="#d8b080"/><rect x="51" y="27" width="1" height="1" fill="#5068f0"/><rect x="52" y="27" width="1" height="1" fill="#f0a0a0"/><rect x="53" y="27" width="3" height="1" fill="#5068f0"/><rect x="56" y="27" width="2" height="1" fill="#d8b080"/><rect x="58" y="27" width="1" height="1" fill="#5068f0"/><rect x="59" y="27" width="1" height="1" fill="#d8b080"/><rect x="3" y="28" width="1" height="1" fill="#ffff00"/><rect x="7" y="28" width="1" height="1" fill="#f0a0a0"/><rect x="8" y="28" width="1" height="1" fill="#5068f0"/><rect x="9" y="28" width="1" height="1" fill="#ffff00"/><rect x="12" y="28" width="1" height="1" fill="#ffff00"/><rect x="15" y="28" width="1" height="1" fill="#ffff00"/><rect x="18" y="28" width="1" height="1" fill="#ffff00"/><rect x="19" y="28" width="2" height="1" fill="#ff0000"/><rect x="23" y="28" width="1" height="1" fill="#5068f0"/><rect x="24" y="28" width="1" height="1" fill="#ffff00"/><rect x="27" y="28" width="1" height="1" fill="#ffff00"/><rect x="32" y="28" width="1" height="1" fill="#5068f0"/><rect x="33" y="28" width="1" height="1" fill="#ffff00"/><rect x="34" y="28" width="2" height="1" fill="#ff0000"/><rect x="36" y="28" width="1" height="1" fill="#ffff00"/><rect x="38" y="28" width="1" height="1" fill="#5068f0"/><rect x="39" y="28" width="1" height="1" fill="#ffff00"/><rect x="40" y="28" width="1" height="1" fill="#5068f0"/><rect x="42" y="28" width="1" height="1" fill="#ffff00"/><rect x="43" y="28" width="1" height="1" fill="#ff0000"/><rect x="45" y="28" width="1" height="1" fill="#ffff00"/><rect x="46" y="28" width="1" height="1" fill="#ff0000"/><rect x="49" y="28" width="1" height="1" fill="#ff0000"/><rect x="51" y="28" width="1" height="1" fill="#ffff00"/><rect x="52" y="28" width="1" height="1" fill="#f0a0a0"/><rect x="53" y="28" width="1" height="1" fill="#ff0000"/><rect x="54" y="28" width="1" height="1" fill="#ffff00"/><rect x="57" y="28" width="1" height="1" fill="#ffff00"/><rect x="59" y="28" width="1" height="1" fill="#ff0000"/><rect x="0" y="29" width="1" height="1" fill="#ff0000"/><rect x="1" y="29" width="1" height="1" fill="#5068f0"/><rect x="2" y="29" width="2" height="1" fill="#ff0000"/><rect x="4" y="29" width="1" height="1" fill="#ffff00"/><rect x="5" y="29" width="2" height="1" fill="#ff0000"/><rect x="7" y="29" width="1" height="1" fill="#f0a0a0"/><rect x="9" y="29" width="1" height="1" fill="#ff0000"/><rect x="10" y="29" width="1" height="1" fill="#5068f0"/><rect x="12" y="29" width="1" height="1" fill="#ff0000"/><rect x="14" y="29" width="1" height="1" fill="#5068f0"/><rect x="15" y="29" width="1" height="1" fill="#ffff00"/><rect x="18" y="29" width="1" height="1" fill="#ff0000"/><rect x="19" y="29" width="1" height="1" fill="#5068f0"/><rect x="21" y="29" width="1" height="1" fill="#ffff00"/><rect x="22" y="29" width="2" height="1" fill="#5068f0"/><rect x="24" y="29" width="1" height="1" fill="#ff0000"/><rect x="26" y="29" width="1" height="1" fill="#5068f0"/><rect x="27" y="29" width="1" height="1" fill="#ff0000"/><rect x="28" y="29" width="1" height="1" fill="#5068f0"/><rect x="30" y="29" width="1" height="1" fill="#ffff00"/><rect x="33" y="29" width="1" height="1" fill="#ff0000"/><rect x="34" y="29" width="2" height="1" fill="#5068f0"/><rect x="36" y="29" width="1" height="1" fill="#ffff00"/><rect x="38" y="29" width="1" height="1" fill="#ffff00"/><rect x="39" y="29" width="1" height="1" fill="#ff0000"/><rect x="40" y="29" width="1" height="1" fill="#ffff00"/><rect x="41" y="29" width="1" height="1" fill="#5068f0"/><rect x="42" y="29" width="1" height="1" fill="#ff0000"/><rect x="45" y="29" width="1" height="1" fill="#ff0000"/><rect x="46" y="29" width="1" height="1" fill="#ffff00"/><rect x="47" y="29" width="2" height="1" fill="#ff0000"/><rect x="49" y="29" width="2" height="1" fill="#5068f0"/><rect x="51" y="29" width="1" height="1" fill="#ff0000"/><rect x="52" y="29" width="1" height="1" fill="#f0a0a0"/><rect x="54" y="29" width="1" height="1" fill="#ff0000"/><rect x="55" y="29" width="2" height="1" fill="#5068f0"/><rect x="57" y="29" width="1" height="1" fill="#ff0000"/><rect x="58" y="29" width="1" height="1" fill="#5068f0"/><rect x="0" y="30" width="1" height="1" fill="#ff0000"/><rect x="1" y="30" width="2" height="1" fill="#5068f0"/><rect x="3" y="30" width="1" height="1" fill="#ff0000"/><rect x="4" y="30" width="1" height="1" fill="#5068f0"/><rect x="5" y="30" width="2" height="1" fill="#ff0000"/><rect x="7" y="30" width="1" height="1" fill="#f0a0a0"/><rect x="8" y="30" width="2" height="1" fill="#ffff00"/><rect x="10" y="30" width="2" height="1" fill="#5068f0"/><rect x="12" y="30" width="1" height="1" fill="#ff0000"/><rect x="14" y="30" width="1" height="1" fill="#ffff00"/><rect x="15" y="30" width="1" height="1" fill="#ff0000"/><rect x="16" y="30" width="1" height="1" fill="#5068f0"/><rect x="18" y="30" width="1" height="1" fill="#ff0000"/><rect x="19" y="30" width="2" height="1" fill="#5068f0"/><rect x="21" y="30" width="1" height="1" fill="#ff0000"/><rect x="22" y="30" width="1" height="1" fill="#5068f0"/><rect x="24" y="30" width="1" height="1" fill="#ff0000"/><rect x="25" y="30" width="1" height="1" fill="#5068f0"/><rect x="27" y="30" width="1" height="1" fill="#ffff00"/><rect x="28" y="30" width="2" height="1" fill="#5068f0"/><rect x="30" y="30" width="1" height="1" fill="#ff0000"/><rect x="31" y="30" width="1" height="1" fill="#5068f0"/><rect x="32" y="30" width="1" height="1" fill="#ffff00"/><rect x="33" y="30" width="1" height="1" fill="#ff0000"/><rect x="34" y="30" width="2" height="1" fill="#5068f0"/><rect x="36" y="30" width="1" height="1" fill="#ff0000"/><rect x="39" y="30" width="1" height="1" fill="#ffff00"/><rect x="40" y="30" width="1" height="1" fill="#5068f0"/><rect x="41" y="30" width="1" height="1" fill="#ffff00"/><rect x="42" y="30" width="1" height="1" fill="#ff0000"/><rect x="43" y="30" width="2" height="1" fill="#5068f0"/><rect x="45" y="30" width="1" height="1" fill="#ff0000"/><rect x="46" y="30" width="1" height="1" fill="#5068f0"/><rect x="48" y="30" width="1" height="1" fill="#ff0000"/><rect x="50" y="30" width="1" height="1" fill="#ff0000"/><rect x="51" y="30" width="1" height="1" fill="#ffff00"/><rect x="52" y="30" width="1" height="1" fill="#f0a0a0"/><rect x="54" y="30" width="1" height="1" fill="#ffff00"/><rect x="55" y="30" width="2" height="1" fill="#5068f0"/><rect x="57" y="30" width="1" height="1" fill="#ff0000"/><rect x="0" y="31" width="1" height="1" fill="#ff0000"/><rect x="1" y="31" width="1" height="1" fill="#5068f0"/><rect x="3" y="31" width="1" height="1" fill="#ff0000"/><rect x="4" y="31" width="1" height="1" fill="#ffff00"/><rect x="5" y="31" width="1" height="1" fill="#5068f0"/><rect x="6" y="31" width="1" height="1" fill="#ff0000"/><rect x="7" y="31" width="1" height="1" fill="#f0a0a0"/><rect x="8" y="31" width="2" height="1" fill="#ff0000"/><rect x="10" y="31" width="1" height="1" fill="#5068f0"/><rect x="12" y="31" width="1" height="1" fill="#ff0000"/><rect x="13" y="31" width="1" height="1" fill="#ffff00"/><rect x="14" y="31" width="1" height="1" fill="#5068f0"/><rect x="15" y="31" width="1" height="1" fill="#ff0000"/><rect x="16" y="31" width="1" height="1" fill="#5068f0"/><rect x="18" y="31" width="1" height="1" fill="#ff0000"/><rect x="19" y="31" width="1" height="1" fill="#5068f0"/><rect x="21" y="31" width="1" height="1" fill="#ff0000"/><rect x="22" y="31" width="2" height="1" fill="#5068f0"/><rect x="24" y="31" width="1" height="1" fill="#ff0000"/><rect x="25" y="31" width="1" height="1" fill="#5068f0"/><rect x="27" y="31" width="1" height="1" fill="#ff0000"/><rect x="28" y="31" width="1" height="1" fill="#ffff00"/><rect x="29" y="31" width="1" height="1" fill="#5068f0"/><rect x="30" y="31" width="1" height="1" fill="#ff0000"/><rect x="31" y="31" width="1" height="1" fill="#5068f0"/><rect x="32" y="31" width="1" height="1" fill="#ffff00"/><rect x="33" y="31" width="1" height="1" fill="#ff0000"/><rect x="34" y="31" width="2" height="1" fill="#ffff00"/><rect x="36" y="31" width="1" height="1" fill="#ff0000"/><rect x="37" y="31" width="1" height="1" fill="#5068f0"/><rect x="38" y="31" width="2" height="1" fill="#ff0000"/><rect x="42" y="31" width="1" height="1" fill="#ff0000"/><rect x="43" y="31" width="1" height="1" fill="#ffff00"/><rect x="44" y="31" width="1" height="1" fill="#5068f0"/><rect x="45" y="31" width="1" height="1" fill="#ff0000"/><rect x="46" y="31" width="2" height="1" fill="#5068f0"/><rect x="48" y="31" width="1" height="1" fill="#ff0000"/><rect x="49" y="31" width="2" height="1" fill="#5068f0"/><rect x="51" y="31" width="1" height="1" fill="#ff0000"/><rect x="52" y="31" width="1" height="1" fill="#f0a0a0"/><rect x="53" y="31" width="1" height="1" fill="#5068f0"/><rect x="54" y="31" width="1" height="1" fill="#ff0000"/><rect x="57" y="31" width="1" height="1" fill="#ff0000"/><rect x="58" y="31" width="1" height="1" fill="#5068f0"/><rect x="59" y="31" width="1" height="1" fill="#ffff00"/><rect x="0" y="32" width="1" height="1" fill="#ff0000"/><rect x="2" y="32" width="2" height="1" fill="#ff0000"/><rect x="4" y="32" width="2" height="1" fill="#5068f0"/><rect x="6" y="32" width="1" height="1" fill="#ff0000"/><rect x="7" y="32" width="1" height="1" fill="#f0a0a0"/><rect x="8" y="32" width="2" height="1" fill="#ff0000"/><rect x="10" y="32" width="1" height="1" fill="#5068f0"/><rect x="12" y="32" width="1" height="1" fill="#ff0000"/><rect x="13" y="32" width="24" height="1" fill="#00ffff"/><rect x="37" y="32" width="2" height="1" fill="#5068f0"/><rect x="39" y="32" width="1" height="1" fill="#ff0000"/><rect x="40" y="32" width="1" height="1" fill="#ffff00"/><rect x="41" y="32" width="2" height="1" fill="#ff0000"/><rect x="43" y="32" width="1" height="1" fill="#5068f0"/><rect x="44" y="32" width="1" height="1" fill="#ffff00"/><rect x="45" y="32" width="1" height="1" fill="#ff0000"/><rect x="46" y="32" width="1" height="1" fill="#5068f0"/><rect x="47" y="32" width="2" height="1" fill="#ff0000"/><rect x="49" y="32" width="1" height="1" fill="#5068f0"/><rect x="51" y="32" width="1" height="1" fill="#ff0000"/><rect x="52" y="32" width="1" height="1" fill="#f0a0a0"/><rect x="53" y="32" width="2" height="1" fill="#ff0000"/><rect x="56" y="32" width="4" height="1" fill="#00ffff"/><rect x="2" y="33" width="5" height="1" fill="#5068f0"/><rect x="7" y="33" width="1" height="1" fill="#f0a0a0"/><rect x="8" y="33" width="4" height="1" fill="#5068f0"/><rect x="13" y="33" width="1" height="1" fill="#80ff40"/><rect x="15" y="33" width="1" height="1" fill="#5068f0"/><rect x="19" y="33" width="6" height="1" fill="#5068f0"/><rect x="26" y="33" width="4" height="1" fill="#5068f0"/><rect x="31" y="33" width="5" height="1" fill="#5068f0"/><rect x="37" y="33" width="13" height="1" fill="#5068f0"/><rect x="51" y="33" width="4" height="1" fill="#5068f0"/><rect x="55" y="33" width="1" height="1" fill="#80ff40"/><rect x="56" y="33" width="4" height="1" fill="#5068f0"/><rect x="0" y="34" width="1" height="1" fill="#ffff00"/><rect x="1" y="34" width="1" height="1" fill="#5068f0"/><rect x="2" y="34" width="1" height="1" fill="#ffff00"/><rect x="3" y="34" width="1" height="1" fill="#ff0000"/><rect x="4" y="34" width="1" height="1" fill="#ffff00"/><rect x="6" y="34" width="1" height="1" fill="#ffff00"/><rect x="7" y="34" width="1" height="1" fill="#f0a0a0"/><rect x="9" y="34" width="1" height="1" fill="#5068f0"/><rect x="11" y="34" width="1" height="1" fill="#ff0000"/><rect x="12" y="34" width="1" height="1" fill="#ffff00"/><rect x="14" y="34" width="1" height="1" fill="#ffff00"/><rect x="16" y="34" width="1" height="1" fill="#ffff00"/><rect x="17" y="34" width="1" height="1" fill="#5068f0"/><rect x="19" y="34" width="1" height="1" fill="#ff0000"/><rect x="20" y="34" width="1" height="1" fill="#ffff00"/><rect x="21" y="34" width="1" height="1" fill="#5068f0"/><rect x="22" y="34" width="1" height="1" fill="#ffff00"/><rect x="24" y="34" width="1" height="1" fill="#ffff00"/><rect x="25" y="34" width="1" height="1" fill="#5068f0"/><rect x="28" y="34" width="1" height="1" fill="#ffff00"/><rect x="29" y="34" width="1" height="1" fill="#5068f0"/><rect x="30" y="34" width="1" height="1" fill="#ffff00"/><rect x="32" y="34" width="7" height="1" fill="#d8b080"/><rect x="39" y="34" width="1" height="1" fill="#ff0000"/><rect x="43" y="34" width="1" height="1" fill="#5068f0"/><rect x="45" y="34" width="1" height="1" fill="#5068f0"/><rect x="48" y="34" width="1" height="1" fill="#ffff00"/><rect x="51" y="34" width="1" height="1" fill="#ff0000"/><rect x="55" y="34" width="1" height="1" fill="#5068f0"/><rect x="56" y="34" width="1" height="1" fill="#ffff00"/><rect x="57" y="34" width="1" height="1" fill="#ff0000"/><rect x="59" y="34" width="1" height="1" fill="#5068f0"/><rect x="0" y="35" width="7" height="1" fill="#00ffff"/><rect x="7" y="35" width="1" height="1" fill="#f0a0a0"/><rect x="8" y="35" width="9" height="1" fill="#00ffff"/><rect x="19" y="35" width="2" height="1" fill="#5068f0"/><rect x="22" y="35" width="4" height="1" fill="#5068f0"/><rect x="27" y="35" width="1" height="1" fill="#d8b080"/><rect x="28" y="35" width="1" height="1" fill="#5068f0"/><rect x="30" y="35" width="6" height="1" fill="#5068f0"/><rect x="36" y="35" width="9" height="1" fill="#d8b080"/><rect x="47" y="35" width="3" height="1" fill="#5068f0"/><rect x="51" y="35" width="2" height="1" fill="#5068f0"/><rect x="54" y="35" width="2" height="1" fill="#5068f0"/><rect x="58" y="35" width="2" height="1" fill="#5068f0"/></pattern><pattern id="pComp" patternUnits="userSpaceOnUse" x="0" y="0" width="3" height="2"><rect x="0" y="0" width="3" height="2" fill="#000"/><rect x="1" y="0" width="1" height="1" fill="#ff1010"/><rect x="1" y="1" width="1" height="1" fill="#c02040"/><rect x="2" y="0" width="1" height="2" fill="#3850c0"/></pattern><pattern id="pCompH" patternUnits="userSpaceOnUse" x="0" y="0" width="2" height="3"><rect x="0" y="0" width="2" height="3" fill="#000"/><rect x="0" y="1" width="1" height="1" fill="#ff1010"/><rect x="1" y="1" width="1" height="1" fill="#c02040"/></pattern></defs>
<rect x="12" y="108" width="522" height="1" fill="#f0a8a8" />
<rect x="12" y="108" width="1" height="310" fill="#f0a8a8" />
<rect x="57" y="154" width="477" height="115" fill="url(#pDot)" />
<rect x="57" y="154" width="114" height="264" fill="url(#pDot)" />
<rect x="175" y="273" width="305" height="145" fill="#000" />
<rect x="519" y="273" width="15" height="145" fill="#000" />
<rect x="57" y="154" width="477" height="1" fill="#00ffff" />
<rect x="57" y="154" width="1" height="264" fill="#00ffff" />
<rect x="77" y="154" width="1" height="42" fill="#00ffff" />
<rect x="57" y="173" width="41" height="1" fill="#00ffff" />
<rect x="97" y="154" width="1" height="264" fill="#00ffff" />
<rect x="57" y="195" width="477" height="1" fill="#00ffff" />
<rect x="57" y="298" width="41" height="1" fill="#00ffff" />
<rect x="57" y="355" width="41" height="1" fill="#00ffff" />
<rect x="57" y="413" width="41" height="1" fill="#00ffff" />
<rect x="100" y="196" width="1" height="222" fill="#00ffff" />
<rect x="120" y="196" width="1" height="42" fill="#00ffff" />
<rect x="100" y="216" width="41" height="1" fill="#00ffff" />
<rect x="141" y="196" width="1" height="222" fill="#00ffff" />
<rect x="100" y="237" width="434" height="1" fill="#00ffff" />
<rect x="100" y="298" width="42" height="1" fill="#00ffff" />
<rect x="100" y="355" width="42" height="1" fill="#00ffff" />
<rect x="100" y="413" width="42" height="1" fill="#00ffff" />
<rect x="142" y="238" width="1" height="180" fill="#00ffff" />
<rect x="148" y="238" width="1" height="15" fill="#00ffff" />
<rect x="142" y="245" width="14" height="1" fill="#00ffff" />
<rect x="155" y="238" width="1" height="180" fill="#00ffff" />
<rect x="142" y="252" width="392" height="1" fill="#00ffff" />
<rect x="157" y="252" width="1" height="166" fill="#00ffff" />
<rect x="163" y="252" width="1" height="15" fill="#00ffff" />
<rect x="157" y="259" width="14" height="1" fill="#00ffff" />
<rect x="170" y="252" width="1" height="166" fill="#00ffff" />
<rect x="157" y="266" width="377" height="1" fill="#00ffff" />
<rect x="172" y="268" width="1" height="150" fill="#00ffff" />
<rect x="175" y="268" width="1" height="150" fill="#00ffff" />
<rect x="172" y="268" width="362" height="1" fill="#00ffff" />
<rect x="175" y="272" width="359" height="1" fill="#00ffff" />
<rect x="265" y="154" width="1" height="113" fill="#00ffff" />
<rect x="322" y="154" width="1" height="113" fill="#00ffff" />
<rect x="379" y="154" width="1" height="113" fill="#00ffff" />
<rect x="437" y="154" width="1" height="113" fill="#00ffff" />
<rect x="525" y="268" width="1" height="150" fill="#00ffff" />
<rect x="529" y="268" width="1" height="150" fill="#00ffff" />
<rect x="532" y="268" width="1" height="150" fill="#00ffff" />
<rect x="273" y="108" width="42" height="43" fill="url(#pHat)" />
<rect x="273" y="108" width="42" height="1" fill="#00ffff" />
<rect x="273" y="150" width="42" height="1" fill="#00ffff" />
<rect x="273" y="108" width="1" height="43" fill="#00ffff" />
<rect x="314" y="108" width="1" height="43" fill="#00ffff" />
<rect x="276" y="150" width="35" height="122" fill="url(#pHat)" />
<rect x="276" y="150" width="1" height="123" fill="#5068f0" />
<rect x="311" y="150" width="1" height="123" fill="#5068f0" />
<rect x="330" y="108" width="43" height="43" fill="url(#pHat)" />
<rect x="330" y="108" width="43" height="1" fill="#00ffff" />
<rect x="330" y="150" width="43" height="1" fill="#00ffff" />
<rect x="330" y="108" width="1" height="43" fill="#00ffff" />
<rect x="372" y="108" width="1" height="43" fill="#00ffff" />
<rect x="387" y="108" width="43" height="43" fill="url(#pHat)" />
<rect x="387" y="108" width="43" height="1" fill="#00ffff" />
<rect x="387" y="150" width="43" height="1" fill="#00ffff" />
<rect x="387" y="108" width="1" height="43" fill="#00ffff" />
<rect x="429" y="108" width="1" height="43" fill="#00ffff" />
<rect x="390" y="150" width="36" height="122" fill="url(#pHat)" />
<rect x="390" y="150" width="1" height="123" fill="#5068f0" />
<rect x="426" y="150" width="1" height="123" fill="#5068f0" />
<rect x="350" y="150" width="1" height="27" fill="#5068f0" />
<rect x="57" y="154" width="477" height="1" fill="#00ffff" />
<rect x="57" y="195" width="477" height="1" fill="#00ffff" />
<rect x="100" y="237" width="434" height="1" fill="#00ffff" />
<rect x="142" y="252" width="392" height="1" fill="#00ffff" />
<rect x="157" y="266" width="377" height="1" fill="#00ffff" />
<rect x="172" y="268" width="362" height="1" fill="#00ffff" />
<rect x="175" y="272" width="359" height="1" fill="#00ffff" />
<rect x="13" y="306" width="40" height="41" fill="url(#pHat)" />
<rect x="13" y="306" width="40" height="1" fill="#00ffff" />
<rect x="13" y="346" width="40" height="1" fill="#00ffff" />
<rect x="13" y="306" width="1" height="41" fill="#00ffff" />
<rect x="52" y="306" width="1" height="41" fill="#00ffff" />
<rect x="53" y="309" width="4" height="34" fill="url(#pHat)" />
<rect x="57" y="324" width="24" height="1" fill="#5068f0" />
<rect x="57" y="328" width="24" height="1" fill="#5068f0" />
<rect x="80" y="319" width="17" height="14" fill="url(#pCompH)" />
<rect x="80" y="319" width="17" height="1" fill="#00ffff" />
<rect x="80" y="332" width="17" height="1" fill="#00ffff" />
<rect x="80" y="319" width="1" height="14" fill="#00ffff" />
<rect x="96" y="319" width="1" height="14" fill="#00ffff" />
<rect x="101" y="319" width="32" height="14" fill="url(#pCompH)" />
<rect x="101" y="319" width="32" height="1" fill="#00ffff" />
<rect x="101" y="332" width="32" height="1" fill="#00ffff" />
<rect x="101" y="319" width="1" height="14" fill="#00ffff" />
<rect x="132" y="319" width="1" height="14" fill="#00ffff" />
<rect x="102" y="321" width="30" height="1" fill="#00ffff" />
<rect x="102" y="331" width="30" height="1" fill="#ffff00" />
<rect x="135" y="313" width="26" height="19" fill="#8a7c70" />
<rect x="135" y="313" width="26" height="1" fill="#5068f0" />
<rect x="135" y="331" width="26" height="1" fill="#5068f0" />
<rect x="135" y="313" width="1" height="19" fill="#5068f0" />
<rect x="160" y="313" width="1" height="19" fill="#5068f0" />
<rect x="137" y="315" width="22" height="1" fill="#c0c0b0" />
<rect x="137" y="318" width="22" height="1" fill="#c0c0b0" />
<rect x="137" y="321" width="22" height="1" fill="#c0c0b0" />
<rect x="137" y="324" width="22" height="1" fill="#c0c0b0" />
<rect x="137" y="327" width="22" height="1" fill="#c0c0b0" />
<rect x="137" y="322" width="22" height="1" fill="#ff2020" />
<rect x="137" y="328" width="22" height="1" fill="#ffff00" />
<rect x="161" y="313" width="18" height="19" fill="url(#pCompH)" />
<rect x="161" y="313" width="18" height="1" fill="#5068f0" />
<rect x="161" y="331" width="18" height="1" fill="#5068f0" />
<rect x="161" y="313" width="1" height="19" fill="#5068f0" />
<rect x="178" y="313" width="1" height="19" fill="#5068f0" />
<rect x="162" y="315" width="16" height="1" fill="#00ffff" />
<rect x="162" y="329" width="16" height="1" fill="#ffff00" />
<rect x="13" y="363" width="40" height="42" fill="url(#pHat)" />
<rect x="13" y="363" width="40" height="1" fill="#00ffff" />
<rect x="13" y="404" width="40" height="1" fill="#00ffff" />
<rect x="13" y="363" width="1" height="42" fill="#00ffff" />
<rect x="52" y="363" width="1" height="42" fill="#00ffff" />
<rect x="53" y="366" width="4" height="35" fill="url(#pHat)" />
<rect x="57" y="381" width="24" height="1" fill="#5068f0" />
<rect x="57" y="385" width="24" height="1" fill="#5068f0" />
<rect x="80" y="376" width="17" height="14" fill="url(#pCompH)" />
<rect x="80" y="376" width="17" height="1" fill="#00ffff" />
<rect x="80" y="389" width="17" height="1" fill="#00ffff" />
<rect x="80" y="376" width="1" height="14" fill="#00ffff" />
<rect x="96" y="376" width="1" height="14" fill="#00ffff" />
<rect x="101" y="376" width="32" height="14" fill="url(#pCompH)" />
<rect x="101" y="376" width="32" height="1" fill="#00ffff" />
<rect x="101" y="389" width="32" height="1" fill="#00ffff" />
<rect x="101" y="376" width="1" height="14" fill="#00ffff" />
<rect x="132" y="376" width="1" height="14" fill="#00ffff" />
<rect x="102" y="378" width="30" height="1" fill="#00ffff" />
<rect x="102" y="388" width="30" height="1" fill="#ffff00" />
<rect x="135" y="370" width="26" height="19" fill="#8a7c70" />
<rect x="135" y="370" width="26" height="1" fill="#5068f0" />
<rect x="135" y="388" width="26" height="1" fill="#5068f0" />
<rect x="135" y="370" width="1" height="19" fill="#5068f0" />
<rect x="160" y="370" width="1" height="19" fill="#5068f0" />
<rect x="137" y="372" width="22" height="1" fill="#c0c0b0" />
<rect x="137" y="375" width="22" height="1" fill="#c0c0b0" />
<rect x="137" y="378" width="22" height="1" fill="#c0c0b0" />
<rect x="137" y="381" width="22" height="1" fill="#c0c0b0" />
<rect x="137" y="384" width="22" height="1" fill="#c0c0b0" />
<rect x="137" y="379" width="22" height="1" fill="#ff2020" />
<rect x="137" y="385" width="22" height="1" fill="#ffff00" />
<rect x="161" y="370" width="18" height="19" fill="url(#pCompH)" />
<rect x="161" y="370" width="18" height="1" fill="#5068f0" />
<rect x="161" y="388" width="18" height="1" fill="#5068f0" />
<rect x="161" y="370" width="1" height="19" fill="#5068f0" />
<rect x="178" y="370" width="1" height="19" fill="#5068f0" />
<rect x="162" y="372" width="16" height="1" fill="#00ffff" />
<rect x="162" y="386" width="16" height="1" fill="#ffff00" />
<rect x="267" y="229" width="12" height="38" fill="url(#pComp)" />
<rect x="267" y="229" width="12" height="1" fill="#c8a070" />
<rect x="267" y="266" width="12" height="1" fill="#c8a070" />
<rect x="267" y="229" width="1" height="38" fill="#c8a070" />
<rect x="278" y="229" width="1" height="38" fill="#c8a070" />
<rect x="268" y="231" width="1" height="34" fill="#3850c0" />
<rect x="269" y="232" width="1" height="32" fill="#ffff00" />
<rect x="276" y="232" width="1" height="32" fill="#00ff80" />
<rect x="267" y="230" width="12" height="1" fill="#5068f0" />
<rect x="308" y="229" width="13" height="38" fill="url(#pComp)" />
<rect x="308" y="229" width="13" height="1" fill="#c8a070" />
<rect x="308" y="266" width="13" height="1" fill="#c8a070" />
<rect x="308" y="229" width="1" height="38" fill="#c8a070" />
<rect x="320" y="229" width="1" height="38" fill="#c8a070" />
<rect x="309" y="231" width="1" height="34" fill="#3850c0" />
<rect x="310" y="232" width="1" height="32" fill="#ffff00" />
<rect x="318" y="232" width="1" height="32" fill="#00ff80" />
<rect x="308" y="230" width="13" height="1" fill="#5068f0" />
<rect x="381" y="229" width="12" height="38" fill="url(#pComp)" />
<rect x="381" y="229" width="12" height="1" fill="#c8a070" />
<rect x="381" y="266" width="12" height="1" fill="#c8a070" />
<rect x="381" y="229" width="1" height="38" fill="#c8a070" />
<rect x="392" y="229" width="1" height="38" fill="#c8a070" />
<rect x="382" y="231" width="1" height="34" fill="#3850c0" />
<rect x="383" y="232" width="1" height="32" fill="#ffff00" />
<rect x="390" y="232" width="1" height="32" fill="#00ff80" />
<rect x="381" y="230" width="12" height="1" fill="#5068f0" />
<rect x="423" y="229" width="13" height="38" fill="url(#pComp)" />
<rect x="423" y="229" width="13" height="1" fill="#c8a070" />
<rect x="423" y="266" width="13" height="1" fill="#c8a070" />
<rect x="423" y="229" width="1" height="38" fill="#c8a070" />
<rect x="435" y="229" width="1" height="38" fill="#c8a070" />
<rect x="424" y="231" width="1" height="34" fill="#3850c0" />
<rect x="425" y="232" width="1" height="32" fill="#ffff00" />
<rect x="433" y="232" width="1" height="32" fill="#00ff80" />
<rect x="423" y="230" width="13" height="1" fill="#5068f0" />
<rect x="342" y="176" width="13" height="20" fill="url(#pComp)" />
<rect x="342" y="176" width="13" height="1" fill="#c8a070" />
<rect x="342" y="195" width="13" height="1" fill="#c8a070" />
<rect x="342" y="176" width="1" height="20" fill="#c8a070" />
<rect x="354" y="176" width="1" height="20" fill="#c8a070" />
<rect x="343" y="178" width="1" height="16" fill="#3850c0" />
<rect x="344" y="179" width="1" height="14" fill="#ffff00" />
<rect x="352" y="179" width="1" height="14" fill="#00ff80" />
<rect x="342" y="177" width="13" height="1" fill="#5068f0" />
<rect x="342" y="198" width="13" height="32" fill="url(#pComp)" />
<rect x="342" y="198" width="13" height="1" fill="#c8a070" />
<rect x="342" y="229" width="13" height="1" fill="#c8a070" />
<rect x="342" y="198" width="1" height="32" fill="#c8a070" />
<rect x="354" y="198" width="1" height="32" fill="#c8a070" />
<rect x="343" y="200" width="1" height="28" fill="#3850c0" />
<rect x="344" y="201" width="1" height="26" fill="#ffff00" />
<rect x="352" y="201" width="1" height="26" fill="#00ff80" />
<rect x="342" y="199" width="13" height="1" fill="#5068f0" />
<rect x="326" y="231" width="36" height="27" fill="url(#pComp)" />
<rect x="326" y="231" width="36" height="1" fill="#c8a070" />
<rect x="326" y="257" width="36" height="1" fill="#c8a070" />
<rect x="326" y="231" width="1" height="27" fill="#c8a070" />
<rect x="361" y="231" width="1" height="27" fill="#c8a070" />
<rect x="327" y="233" width="1" height="23" fill="#3850c0" />
<rect x="328" y="234" width="1" height="21" fill="#ffff00" />
<rect x="359" y="234" width="1" height="21" fill="#00ff80" />
<rect x="326" y="232" width="36" height="1" fill="#5068f0" />
<rect x="326" y="257" width="50" height="16" fill="url(#pComp)" />
<rect x="326" y="257" width="50" height="1" fill="#5068f0" />
<rect x="326" y="273" width="50" height="1" fill="#5068f0" />
<rect x="326" y="257" width="1" height="17" fill="#5068f0" />
<rect x="375" y="257" width="1" height="17" fill="#5068f0" />
<rect x="350" y="150" width="1" height="27" fill="#5068f0" />
<rect x="201" y="280" width="299" height="18" fill="url(#pBand)" />
<rect x="184" y="280" width="335" height="1" fill="#5068f0" />
<rect x="184" y="297" width="335" height="1" fill="#5068f0" />
<rect x="222" y="300" width="258" height="18" fill="url(#pBand)" />
<rect x="204" y="300" width="295" height="1" fill="#5068f0" />
<rect x="204" y="318" width="295" height="1" fill="#5068f0" />
<rect x="184" y="280" width="18" height="138" fill="url(#pDot)" />
<rect x="184" y="280" width="18" height="1" fill="#00ffff" />
<rect x="184" y="417" width="18" height="1" fill="#00ffff" />
<rect x="184" y="280" width="1" height="138" fill="#00ffff" />
<rect x="201" y="280" width="1" height="138" fill="#00ffff" />
<rect x="184" y="280" width="18" height="18" fill="url(#pRing)" />
<rect x="184" y="280" width="18" height="1" fill="#00ffff" />
<rect x="184" y="297" width="18" height="1" fill="#00ffff" />
<rect x="184" y="280" width="1" height="18" fill="#00ffff" />
<rect x="201" y="280" width="1" height="18" fill="#00ffff" />
<rect x="184" y="320" width="18" height="1" fill="#00ffff" />
<rect x="184" y="349" width="18" height="1" fill="#00ffff" />
<rect x="184" y="378" width="18" height="1" fill="#00ffff" />
<rect x="184" y="407" width="18" height="1" fill="#00ffff" />
<rect x="204" y="300" width="19" height="118" fill="url(#pDot)" />
<rect x="204" y="300" width="19" height="1" fill="#00ffff" />
<rect x="204" y="417" width="19" height="1" fill="#00ffff" />
<rect x="204" y="300" width="1" height="118" fill="#00ffff" />
<rect x="222" y="300" width="1" height="118" fill="#00ffff" />
<rect x="204" y="300" width="19" height="18" fill="url(#pRing)" />
<rect x="204" y="300" width="19" height="1" fill="#00ffff" />
<rect x="204" y="317" width="19" height="1" fill="#00ffff" />
<rect x="204" y="300" width="1" height="18" fill="#00ffff" />
<rect x="222" y="300" width="1" height="18" fill="#00ffff" />
<rect x="204" y="340" width="19" height="1" fill="#00ffff" />
<rect x="204" y="369" width="19" height="1" fill="#00ffff" />
<rect x="204" y="398" width="19" height="1" fill="#00ffff" />
<rect x="480" y="300" width="19" height="118" fill="url(#pDot)" />
<rect x="480" y="300" width="19" height="1" fill="#00ffff" />
<rect x="480" y="417" width="19" height="1" fill="#00ffff" />
<rect x="480" y="300" width="1" height="118" fill="#00ffff" />
<rect x="498" y="300" width="1" height="118" fill="#00ffff" />
<rect x="480" y="300" width="19" height="18" fill="url(#pRing)" />
<rect x="480" y="300" width="19" height="1" fill="#00ffff" />
<rect x="480" y="317" width="19" height="1" fill="#00ffff" />
<rect x="480" y="300" width="1" height="18" fill="#00ffff" />
<rect x="498" y="300" width="1" height="18" fill="#00ffff" />
<rect x="480" y="340" width="19" height="1" fill="#00ffff" />
<rect x="480" y="369" width="19" height="1" fill="#00ffff" />
<rect x="480" y="398" width="19" height="1" fill="#00ffff" />
<rect x="500" y="280" width="19" height="138" fill="url(#pDot)" />
<rect x="500" y="280" width="19" height="1" fill="#00ffff" />
<rect x="500" y="417" width="19" height="1" fill="#00ffff" />
<rect x="500" y="280" width="1" height="138" fill="#00ffff" />
<rect x="518" y="280" width="1" height="138" fill="#00ffff" />
<rect x="500" y="280" width="19" height="18" fill="url(#pRing)" />
<rect x="500" y="280" width="19" height="1" fill="#00ffff" />
<rect x="500" y="297" width="19" height="1" fill="#00ffff" />
<rect x="500" y="280" width="1" height="18" fill="#00ffff" />
<rect x="518" y="280" width="1" height="18" fill="#00ffff" />
<rect x="500" y="320" width="19" height="1" fill="#00ffff" />
<rect x="500" y="349" width="19" height="1" fill="#00ffff" />
<rect x="500" y="378" width="19" height="1" fill="#00ffff" />
<rect x="500" y="407" width="19" height="1" fill="#00ffff" />
<rect x="277" y="272" width="35" height="46" fill="url(#pHat)" />
<rect x="277" y="272" width="35" height="1" fill="#00ffff" />
<rect x="277" y="317" width="35" height="1" fill="#00ffff" />
<rect x="277" y="272" width="1" height="46" fill="#00ffff" />
<rect x="311" y="272" width="1" height="46" fill="#00ffff" />
<rect x="391" y="272" width="35" height="27" fill="url(#pHat)" />
<rect x="391" y="272" width="35" height="1" fill="#00ffff" />
<rect x="391" y="298" width="35" height="1" fill="#00ffff" />
<rect x="391" y="272" width="1" height="27" fill="#00ffff" />
<rect x="425" y="272" width="1" height="27" fill="#00ffff" />
<rect x="222" y="328" width="49" height="1" fill="#5068f0" />
<rect x="427" y="328" width="54" height="1" fill="#5068f0" />
<rect x="222" y="334" width="49" height="1" fill="#5068f0" />
<rect x="427" y="334" width="54" height="1" fill="#5068f0" />
<rect x="222" y="345" width="49" height="1" fill="#5068f0" />
<rect x="427" y="345" width="54" height="1" fill="#5068f0" />
<rect x="222" y="350" width="49" height="1" fill="#5068f0" />
<rect x="427" y="350" width="54" height="1" fill="#5068f0" />
<rect x="222" y="360" width="49" height="1" fill="#5068f0" />
<rect x="427" y="360" width="54" height="1" fill="#5068f0" />
<rect x="222" y="365" width="49" height="1" fill="#5068f0" />
<rect x="427" y="365" width="54" height="1" fill="#5068f0" />
<rect x="222" y="375" width="49" height="1" fill="#5068f0" />
<rect x="427" y="375" width="54" height="1" fill="#5068f0" />
<rect x="222" y="381" width="49" height="1" fill="#5068f0" />
<rect x="427" y="381" width="54" height="1" fill="#5068f0" />
<rect x="222" y="392" width="49" height="1" fill="#5068f0" />
<rect x="427" y="392" width="54" height="1" fill="#5068f0" />
<rect x="222" y="398" width="49" height="1" fill="#5068f0" />
<rect x="427" y="398" width="54" height="1" fill="#5068f0" />
<rect x="222" y="408" width="49" height="1" fill="#5068f0" />
<rect x="427" y="408" width="54" height="1" fill="#5068f0" />
<rect x="270" y="320" width="1" height="98" fill="#00ffff" />
<rect x="266" y="320" width="1" height="98" fill="#00ffff" />
<rect x="458" y="320" width="1" height="98" fill="#00ffff" />
<rect x="462" y="320" width="1" height="98" fill="#00ffff" />
<rect x="275" y="327" width="152" height="91" fill="url(#pCore)" />
<rect x="275" y="323" width="153" height="1" fill="#d8b080" />
<rect x="275" y="324" width="153" height="1" fill="#5068f0" />
<rect x="427" y="323" width="1" height="95" fill="#ff0000" />
<rect x="301" y="300" width="1" height="46" fill="#00ffff" />
<rect x="346" y="300" width="1" height="46" fill="#00ffff" />
<rect x="372" y="300" width="1" height="46" fill="#00ffff" />
<rect x="400" y="300" width="1" height="46" fill="#00ffff" />
<rect x="524" y="313" width="10" height="18" fill="url(#pCompH)" />
<rect x="524" y="313" width="10" height="1" fill="#5068f0" />
<rect x="524" y="330" width="10" height="1" fill="#5068f0" />
<rect x="524" y="313" width="1" height="18" fill="#5068f0" />
<rect x="533" y="313" width="1" height="18" fill="#5068f0" />
<rect x="525" y="315" width="8" height="1" fill="#ffff00" />
<rect x="525" y="328" width="8" height="1" fill="#00ffff" />
<rect x="524" y="372" width="10" height="17" fill="url(#pCompH)" />
<rect x="524" y="372" width="10" height="1" fill="#5068f0" />
<rect x="524" y="388" width="10" height="1" fill="#5068f0" />
<rect x="524" y="372" width="1" height="17" fill="#5068f0" />
<rect x="533" y="372" width="1" height="17" fill="#5068f0" />
<rect x="525" y="374" width="8" height="1" fill="#ffff00" />
<rect x="525" y="386" width="8" height="1" fill="#00ffff" />
<defs><linearGradient id="gBtn" x1="0" y1="0" x2="0" y2="1"><stop offset="0" stop-color="#fbfbfb"/><stop offset="0.45" stop-color="#ececec"/><stop offset="1" stop-color="#b8b8b8"/></linearGradient></defs>
<rect x="964" y="2" width="59" height="18" fill="#efefe9" />
<rect x="963" y="2" width="1" height="19" fill="#a8a8a4" />
<rect x="964" y="1" width="58" height="1" fill="#fbfbf8" />
<rect x="967" y="4" width="16" height="16" fill="#8a8a88" />
<rect x="968" y="5" width="14" height="14" fill="url(#gBtn)" />
<rect x="973.0" y="10.0" width="4" height="4" fill="#000" />
<rect x="985" y="4" width="16" height="16" fill="#8a8a88" />
<rect x="986" y="5" width="14" height="14" fill="url(#gBtn)" />
<rect x="989.0" y="8.0" width="8" height="8" fill="#000" />
<rect x="991.0" y="10.0" width="4" height="4" fill="#c8c8c8" />
<rect x="1003" y="4" width="16" height="16" fill="#8a8a88" />
<rect x="1004" y="5" width="14" height="14" fill="url(#gBtn)" />
<path d="M1007.5 8.5L1014.5 15.5M1014.5 8.5L1007.5 15.5" stroke="#000" fill="none" stroke-width="2.4" shape-rendering="auto"/>
<rect x="316" y="392" width="708" height="376" fill="#000" />
<rect x="317" y="393" width="707" height="375" fill="#fff" />
<rect x="318" y="394" width="706" height="19" fill="#dcdcdc" />
<rect x="318" y="413" width="706" height="355" fill="#eeeee6" />
<rect x="318" y="413" width="706" height="1" fill="#7c7a72" />
<rect x="964" y="394" width="59" height="18" fill="#efefe9" />
<rect x="963" y="394" width="1" height="19" fill="#a8a8a4" />
<rect x="964" y="393" width="58" height="1" fill="#fbfbf8" />
<rect x="967" y="396" width="16" height="16" fill="#8a8a88" />
<rect x="968" y="397" width="14" height="14" fill="url(#gBtn)" />
<rect x="973.0" y="402.0" width="4" height="4" fill="#000" />
<rect x="985" y="396" width="16" height="16" fill="#8a8a88" />
<rect x="986" y="397" width="14" height="14" fill="url(#gBtn)" />
<rect x="989.0" y="400.0" width="8" height="8" fill="#000" />
<rect x="991.0" y="402.0" width="4" height="4" fill="#c8c8c8" />
<rect x="1003" y="396" width="16" height="16" fill="#8a8a88" />
<rect x="1004" y="397" width="14" height="14" fill="url(#gBtn)" />
<path d="M1007.5 400.5L1014.5 407.5M1014.5 400.5L1007.5 407.5" stroke="#000" fill="none" stroke-width="2.4" shape-rendering="auto"/>
<rect x="439" y="415" width="580" height="27" fill="#edede5" />
<rect x="439" y="442" width="580" height="1" fill="#000" />
<rect x="1018" y="415" width="1" height="28" fill="#000" />
<text x="412" y="434" font-family="Liberation Sans" font-size="16" font-weight="normal" fill="#000" >Search</text>
<text x="480" y="434" font-family="Liberation Sans" font-size="16" font-weight="normal" fill="#000" >Time</text>
<text x="532" y="434" font-family="Liberation Sans" font-size="16" font-weight="normal" fill="#000" >Markers</text>
<text x="605" y="434" font-family="Liberation Sans" font-size="16" font-weight="normal" fill="#000" >View</text>
<text x="656" y="434" font-family="Liberation Sans" font-size="16" font-weight="normal" fill="#000" >Help</text>
<rect x="1020" y="413" width="1" height="355" fill="#7c7a72" />
<rect x="1023" y="392" width="1" height="376" fill="#000" />
<rect x="440" y="552" width="580" height="216" fill="#000" />
<g>
<rect x="747" y="62" width="1" height="38" fill="#f0b4b4" />
<rect x="747" y="99" width="58" height="1" fill="#f0b4b4" />
<rect x="754" y="62" width="1" height="24" fill="#f0b4b4" />
<rect x="754" y="85" width="51" height="1" fill="#f0b4b4" />
<rect x="761" y="62" width="1" height="51" fill="#f0b4b4" />
<rect x="761" y="112" width="44" height="1" fill="#f0b4b4" />
<rect x="767" y="62" width="1" height="64" fill="#e80000" />
<rect x="767" y="125" width="38" height="1" fill="#e80000" />
<rect x="774" y="72" width="1" height="185" fill="#e80000" />
<rect x="774" y="72" width="108" height="1" fill="#e80000" />
<rect x="881" y="72" width="1" height="34" fill="#e80000" />
<rect x="866" y="105" width="16" height="1" fill="#e80000" />
<rect x="774" y="256" width="31" height="1" fill="#e80000" />
<rect x="881" y="72" width="136" height="1" fill="#f0b4b4" />
<rect x="888" y="85" width="1" height="75" fill="#f0b4b4" />
<rect x="888" y="85" width="129" height="1" fill="#f0b4b4" />
<rect x="894" y="62" width="1" height="330" fill="#f0b4b4" />
<rect x="894" y="99" width="123" height="1" fill="#f0b4b4" />
<rect x="892" y="97" width="5" height="5" fill="#f0b4b4" />
<rect x="894" y="112" width="123" height="1" fill="#f0b4b4" />
<rect x="892" y="110" width="5" height="5" fill="#f0b4b4" />
<rect x="894" y="126" width="123" height="1" fill="#f0b4b4" />
<rect x="892" y="124" width="5" height="5" fill="#f0b4b4" />
<rect x="894" y="139" width="123" height="1" fill="#f0b4b4" />
<rect x="892" y="137" width="5" height="5" fill="#f0b4b4" />
<rect x="894" y="152" width="123" height="1" fill="#f0b4b4" />
<rect x="892" y="150" width="5" height="5" fill="#f0b4b4" />
<rect x="894" y="166" width="123" height="1" fill="#f0b4b4" />
<rect x="892" y="164" width="5" height="5" fill="#f0b4b4" />
<rect x="894" y="179" width="123" height="1" fill="#f0b4b4" />
<rect x="892" y="177" width="5" height="5" fill="#f0b4b4" />
<rect x="894" y="193" width="123" height="1" fill="#f0b4b4" />
<rect x="892" y="191" width="5" height="5" fill="#f0b4b4" />
<rect x="894" y="206" width="123" height="1" fill="#f0b4b4" />
<rect x="892" y="204" width="5" height="5" fill="#f0b4b4" />
<rect x="781" y="139" width="108" height="1" fill="#f0b4b4" />
<rect x="886" y="137" width="5" height="5" fill="#f0b4b4" />
<rect x="781" y="139" width="1" height="104" fill="#f0b4b4" />
<rect x="781" y="242" width="24" height="1" fill="#f0b4b4" />
<path d="M671.5 148.5L679.5 148.5L681.5 150.5L681.5 153.5L679.5 155.5L671.5 155.5Z" stroke="#e80000" fill="none" stroke-width="1" />
<rect x="682" y="152" width="144" height="1" fill="#f0b4b4" />
<text x="654" y="155" font-family="Liberation Mono" font-size="8.6" fill="#ffffff" textLength="14.700000000000001" lengthAdjust="spacingAndGlyphs">a 1</text>
<path d="M671.5 162.5L679.5 162.5L681.5 164.5L681.5 167.5L679.5 169.5L671.5 169.5Z" stroke="#e80000" fill="none" stroke-width="1" />
<rect x="682" y="166" width="144" height="1" fill="#f0b4b4" />
<text x="654" y="169" font-family="Liberation Mono" font-size="8.6" fill="#ffffff" textLength="14.700000000000001" lengthAdjust="spacingAndGlyphs">b 1</text>
<path d="M671.5 269.5L679.5 269.5L681.5 271.5L681.5 274.5L679.5 276.5L671.5 276.5Z" stroke="#e80000" fill="none" stroke-width="1" />
<rect x="682" y="273" width="144" height="1" fill="#f0b4b4" />
<text x="654" y="276" font-family="Liberation Mono" font-size="8.6" fill="#ffffff" textLength="14.700000000000001" lengthAdjust="spacingAndGlyphs">a 2</text>
<path d="M671.5 282.5L679.5 282.5L681.5 284.5L681.5 287.5L679.5 289.5L671.5 289.5Z" stroke="#e80000" fill="none" stroke-width="1" />
<rect x="682" y="286" width="144" height="1" fill="#f0b4b4" />
<text x="654" y="289" font-family="Liberation Mono" font-size="8.6" fill="#ffffff" textLength="14.700000000000001" lengthAdjust="spacingAndGlyphs">b 2</text>
<rect x="747" y="152" width="1" height="65" fill="#f0b4b4" />
<rect x="747" y="216" width="58" height="1" fill="#f0b4b4" />
<rect x="741" y="166" width="1" height="64" fill="#f0b4b4" />
<rect x="741" y="229" width="64" height="1" fill="#f0b4b4" />
<rect x="846" y="159" width="43" height="1" fill="#f0b4b4" />
<path d="M829 92.5H835.5V99.5H844" stroke="#f0b4b4" fill="none" stroke-width="1" />
<path d="M829 119.5H835.5V112.5H844" stroke="#e80000" fill="none" stroke-width="1" />
<path d="M829 222.5H835.5V229.5H844" stroke="#f0b4b4" fill="none" stroke-width="1" />
<path d="M829 250.5H835.5V242.5H844" stroke="#e80000" fill="none" stroke-width="1" />
<rect x="866" y="236" width="16" height="1" fill="#e80000" />
<rect x="881" y="236" width="1" height="156" fill="#e80000" />
<rect x="881" y="236" width="136" height="1" fill="#f0b4b4" />
<rect x="901" y="249" width="1" height="143" fill="#f0b4b4" />
<rect x="901" y="249" width="116" height="1" fill="#f0b4b4" />
<rect x="846" y="279" width="56" height="1" fill="#f0b4b4" />
<rect x="899" y="277" width="5" height="5" fill="#f0b4b4" />
<rect x="894" y="262" width="123" height="1" fill="#f0b4b4" />
<rect x="892" y="260" width="5" height="5" fill="#f0b4b4" />
<rect x="894" y="276" width="123" height="1" fill="#f0b4b4" />
<rect x="892" y="274" width="5" height="5" fill="#f0b4b4" />
<rect x="894" y="289" width="123" height="1" fill="#f0b4b4" />
<rect x="892" y="287" width="5" height="5" fill="#f0b4b4" />
<rect x="894" y="303" width="123" height="1" fill="#f0b4b4" />
<rect x="892" y="301" width="5" height="5" fill="#f0b4b4" />
<rect x="894" y="316" width="123" height="1" fill="#f0b4b4" />
<rect x="892" y="314" width="5" height="5" fill="#f0b4b4" />
<rect x="894" y="329" width="123" height="1" fill="#f0b4b4" />
<rect x="892" y="327" width="5" height="5" fill="#f0b4b4" />
<rect x="894" y="343" width="123" height="1" fill="#f0b4b4" />
<rect x="892" y="341" width="5" height="5" fill="#f0b4b4" />
<rect x="894" y="356" width="123" height="1" fill="#f0b4b4" />
<rect x="892" y="354" width="5" height="5" fill="#f0b4b4" />
<rect x="894" y="369" width="123" height="1" fill="#f0b4b4" />
<rect x="892" y="367" width="5" height="5" fill="#f0b4b4" />
<rect x="741" y="273" width="1" height="119" fill="#f0b4b4" />
<rect x="734" y="286" width="1" height="106" fill="#f0b4b4" />
<path d="M804.5 81.5H815A11.0 11.0 0 0 1 815 103.5H804.5Z" stroke="#00e0e8" fill="none" stroke-width="1" shape-rendering="auto"/>
<circle cx="827.5" cy="92.5" r="1.6" stroke="#00e0e8" fill="none" stroke-width="1" shape-rendering="auto"/>
<text x="807" y="95.5" font-family="Liberation Mono" font-size="8.6" fill="#ffffff" textLength="14.700000000000001" lengthAdjust="spacingAndGlyphs">u15</text>
<path d="M804.5 108.5H815A11.5 11.5 0 0 1 815 131.5H804.5Z" stroke="#e80000" fill="none" stroke-width="1" shape-rendering="auto"/>
<circle cx="828.0" cy="120.0" r="1.6" stroke="#e80000" fill="none" stroke-width="1" shape-rendering="auto"/>
<text x="807" y="123.0" font-family="Liberation Mono" font-size="8.6" fill="#ffffff" textLength="14.700000000000001" lengthAdjust="spacingAndGlyphs">u16</text>
<path d="M844.5 94.5H855A11.5 11.5 0 0 1 855 117.5H844.5Z" stroke="#e80000" fill="none" stroke-width="1" shape-rendering="auto"/>
<circle cx="868.0" cy="106.0" r="1.6" stroke="#e80000" fill="none" stroke-width="1" shape-rendering="auto"/>
<text x="847" y="109.0" font-family="Liberation Mono" font-size="8.6" fill="#ffffff" textLength="14.700000000000001" lengthAdjust="spacingAndGlyphs">u18</text>
<path d="M804.5 211.5H815A11.5 11.5 0 0 1 815 234.5H804.5Z" stroke="#00e0e8" fill="none" stroke-width="1" shape-rendering="auto"/>
<circle cx="828.0" cy="223.0" r="1.6" stroke="#00e0e8" fill="none" stroke-width="1" shape-rendering="auto"/>
<text x="807" y="226.0" font-family="Liberation Mono" font-size="8.6" fill="#ffffff" textLength="14.700000000000001" lengthAdjust="spacingAndGlyphs">u20</text>
<path d="M804.5 238.5H815A12.0 12.0 0 0 1 815 262.5H804.5Z" stroke="#e80000" fill="none" stroke-width="1" shape-rendering="auto"/>
<circle cx="828.5" cy="250.5" r="1.6" stroke="#e80000" fill="none" stroke-width="1" shape-rendering="auto"/>
<text x="807" y="253.5" font-family="Liberation Mono" font-size="8.6" fill="#ffffff" textLength="14.700000000000001" lengthAdjust="spacingAndGlyphs">u21</text>
<path d="M844.5 225.5H855A12.0 12.0 0 0 1 855 249.5H844.5Z" stroke="#e80000" fill="none" stroke-width="1" shape-rendering="auto"/>
<circle cx="868.5" cy="237.5" r="1.6" stroke="#e80000" fill="none" stroke-width="1" shape-rendering="auto"/>
<text x="847" y="240.5" font-family="Liberation Mono" font-size="8.6" fill="#ffffff" textLength="14.700000000000001" lengthAdjust="spacingAndGlyphs">u23</text>
<path d="M825 147.5Q834 159.5 825 171.5 M829 147.5Q838 159.5 829 171.5 M829 147.5Q843 147.5 846 159.5 Q843 171.5 829 171.5" stroke="#00e0e8" fill="none" stroke-width="1.2" shape-rendering="auto"/>
<path d="M825 267.5Q834 279.5 825 291.5 M829 267.5Q838 279.5 829 291.5 M829 267.5Q843 267.5 846 279.5 Q843 291.5 829 291.5" stroke="#00e0e8" fill="none" stroke-width="1.2" shape-rendering="auto"/>
<text x="850" y="71" font-family="Liberation Mono" font-size="8.6" fill="#ffffff" textLength="14.700000000000001" lengthAdjust="spacingAndGlyphs">n37</text>
<text x="770" y="85" font-family="Liberation Mono" font-size="8.6" fill="#ffffff" textLength="14.700000000000001" lengthAdjust="spacingAndGlyphs">a 0</text>
<text x="766" y="99" font-family="Liberation Mono" font-size="8.6" fill="#ffffff" textLength="14.700000000000001" lengthAdjust="spacingAndGlyphs">b 0</text>
<text x="772" y="112" font-family="Liberation Mono" font-size="8.6" fill="#ffffff" textLength="14.700000000000001" lengthAdjust="spacingAndGlyphs">n41</text>
<text x="775" y="125" font-family="Liberation Mono" font-size="8.6" fill="#ffffff" textLength="14.700000000000001" lengthAdjust="spacingAndGlyphs">n40</text>
<text x="791" y="92" font-family="Liberation Mono" font-size="8.6" fill="#ffffff" textLength="9.8" lengthAdjust="spacingAndGlyphs">i0</text>
<text x="791" y="106" font-family="Liberation Mono" font-size="8.6" fill="#ffffff" textLength="9.8" lengthAdjust="spacingAndGlyphs">i1</text>
<text x="791" y="119" font-family="Liberation Mono" font-size="8.6" fill="#ffffff" textLength="9.8" lengthAdjust="spacingAndGlyphs">i0</text>
<text x="791" y="133" font-family="Liberation Mono" font-size="8.6" fill="#ffffff" textLength="9.8" lengthAdjust="spacingAndGlyphs">i1</text>
<text x="829" y="100" font-family="Liberation Mono" font-size="8.6" fill="#ffffff" textLength="9.8" lengthAdjust="spacingAndGlyphs">nq</text>
<text x="829" y="127" font-family="Liberation Mono" font-size="8.6" fill="#ffffff" textLength="9.8" lengthAdjust="spacingAndGlyphs">nq</text>
<text x="868" y="113" font-family="Liberation Mono" font-size="8.6" fill="#ffffff" textLength="9.8" lengthAdjust="spacingAndGlyphs">nq</text>
<text x="831" y="106" font-family="Liberation Mono" font-size="8.6" fill="#ffffff" textLength="9.8" lengthAdjust="spacingAndGlyphs">i0</text>
<text x="831" y="118" font-family="Liberation Mono" font-size="8.6" fill="#ffffff" textLength="9.8" lengthAdjust="spacingAndGlyphs">i1</text>
<text x="827" y="138" font-family="Liberation Mono" font-size="8.6" fill="#ffffff" textLength="14.700000000000001" lengthAdjust="spacingAndGlyphs">n36</text>
<text x="743" y="151" font-family="Liberation Mono" font-size="8.6" fill="#ffffff" textLength="14.700000000000001" lengthAdjust="spacingAndGlyphs">a 1</text>
<text x="743" y="165" font-family="Liberation Mono" font-size="8.6" fill="#ffffff" textLength="14.700000000000001" lengthAdjust="spacingAndGlyphs">b 1</text>
<text x="811" y="159" font-family="Liberation Mono" font-size="8.6" fill="#ffffff" textLength="9.8" lengthAdjust="spacingAndGlyphs">i0</text>
<text x="811" y="172" font-family="Liberation Mono" font-size="8.6" fill="#ffffff" textLength="9.8" lengthAdjust="spacingAndGlyphs">i1</text>
<text x="828" y="162" font-family="Liberation Mono" font-size="8.6" fill="#ffffff" textLength="14.700000000000001" lengthAdjust="spacingAndGlyphs">u19</text>
<text x="849" y="167" font-family="Liberation Mono" font-size="8.6" fill="#ffffff" textLength="4.9" lengthAdjust="spacingAndGlyphs">q</text>
<text x="860" y="158" font-family="Liberation Mono" font-size="8.6" fill="#ffffff" textLength="14.700000000000001" lengthAdjust="spacingAndGlyphs">n36</text>
<text x="766" y="215" font-family="Liberation Mono" font-size="8.6" fill="#ffffff" textLength="14.700000000000001" lengthAdjust="spacingAndGlyphs">a 1</text>
<text x="762" y="229" font-family="Liberation Mono" font-size="8.6" fill="#ffffff" textLength="14.700000000000001" lengthAdjust="spacingAndGlyphs">b 1</text>
<text x="791" y="223" font-family="Liberation Mono" font-size="8.6" fill="#ffffff" textLength="9.8" lengthAdjust="spacingAndGlyphs">i0</text>
<text x="791" y="236" font-family="Liberation Mono" font-size="8.6" fill="#ffffff" textLength="9.8" lengthAdjust="spacingAndGlyphs">i1</text>
<text x="828" y="231" font-family="Liberation Mono" font-size="8.6" fill="#ffffff" textLength="9.8" lengthAdjust="spacingAndGlyphs">nq</text>
<text x="831" y="235" font-family="Liberation Mono" font-size="8.6" fill="#ffffff" textLength="9.8" lengthAdjust="spacingAndGlyphs">i0</text>
<text x="831" y="248" font-family="Liberation Mono" font-size="8.6" fill="#ffffff" textLength="9.8" lengthAdjust="spacingAndGlyphs">i1</text>
<text x="782" y="241" font-family="Liberation Mono" font-size="8.6" fill="#ffffff" textLength="14.700000000000001" lengthAdjust="spacingAndGlyphs">n36</text>
<text x="791" y="250" font-family="Liberation Mono" font-size="8.6" fill="#ffffff" textLength="9.8" lengthAdjust="spacingAndGlyphs">i0</text>
<text x="780" y="255" font-family="Liberation Mono" font-size="8.6" fill="#ffffff" textLength="14.700000000000001" lengthAdjust="spacingAndGlyphs">n37</text>
<text x="791" y="263" font-family="Liberation Mono" font-size="8.6" fill="#ffffff" textLength="9.8" lengthAdjust="spacingAndGlyphs">i1</text>
<text x="828" y="258" font-family="Liberation Mono" font-size="8.6" fill="#ffffff" textLength="9.8" lengthAdjust="spacingAndGlyphs">nq</text>
<text x="868" y="242" font-family="Liberation Mono" font-size="8.6" fill="#ffffff" textLength="9.8" lengthAdjust="spacingAndGlyphs">nq</text>
<text x="897" y="234" font-family="Liberation Mono" font-size="8.6" fill="#ffffff" textLength="14.700000000000001" lengthAdjust="spacingAndGlyphs">n33</text>
<text x="942" y="85" font-family="Liberation Mono" font-size="8.6" fill="#ffffff" textLength="14.700000000000001" lengthAdjust="spacingAndGlyphs">n36</text>
<text x="955" y="98" font-family="Liberation Mono" font-size="8.6" fill="#ffffff" textLength="34.300000000000004" lengthAdjust="spacingAndGlyphs">m_clock</text>
<text x="975" y="111" font-family="Liberation Mono" font-size="8.6" fill="#ffffff" textLength="34.300000000000004" lengthAdjust="spacingAndGlyphs">m_clock</text>
<text x="995" y="125" font-family="Liberation Mono" font-size="8.6" fill="#ffffff" textLength="19.6" lengthAdjust="spacingAndGlyphs">m_cl</text>
<text x="1002" y="78" font-family="Liberation Mono" font-size="8.6" fill="#ffffff" textLength="9.8" lengthAdjust="spacingAndGlyphs">i0</text>
<text x="1001" y="91" font-family="Liberation Mono" font-size="8.6" fill="#ffffff" textLength="9.8" lengthAdjust="spacingAndGlyphs">i1</text>
<text x="927" y="76" font-family="Liberation Mono" font-size="8.6" fill="#ffffff" textLength="53.900000000000006" lengthAdjust="spacingAndGlyphs">mbt_buf_n37</text>
<text x="927" y="240" font-family="Liberation Mono" font-size="8.6" fill="#ffffff" textLength="53.900000000000006" lengthAdjust="spacingAndGlyphs">mbt_buf_n33</text>
<text x="948" y="249" font-family="Liberation Mono" font-size="8.6" fill="#ffffff" textLength="14.700000000000001" lengthAdjust="spacingAndGlyphs">n32</text>
<text x="955" y="263" font-family="Liberation Mono" font-size="8.6" fill="#ffffff" textLength="34.300000000000004" lengthAdjust="spacingAndGlyphs">m_clock</text>
<text x="975" y="276" font-family="Liberation Mono" font-size="8.6" fill="#ffffff" textLength="34.300000000000004" lengthAdjust="spacingAndGlyphs">m_clock</text>
<text x="995" y="289" font-family="Liberation Mono" font-size="8.6" fill="#ffffff" textLength="19.6" lengthAdjust="spacingAndGlyphs">m_cl</text>
<text x="1001" y="242" font-family="Liberation Mono" font-size="8.6" fill="#ffffff" textLength="9.8" lengthAdjust="spacingAndGlyphs">i0</text>
<text x="1001" y="254" font-family="Liberation Mono" font-size="8.6" fill="#ffffff" textLength="9.8" lengthAdjust="spacingAndGlyphs">i1</text>
<text x="743" y="272" font-family="Liberation Mono" font-size="8.6" fill="#ffffff" textLength="14.700000000000001" lengthAdjust="spacingAndGlyphs">a 2</text>
<text x="743" y="285" font-family="Liberation Mono" font-size="8.6" fill="#ffffff" textLength="14.700000000000001" lengthAdjust="spacingAndGlyphs">b 2</text>
<text x="811" y="278" font-family="Liberation Mono" font-size="8.6" fill="#ffffff" textLength="9.8" lengthAdjust="spacingAndGlyphs">i0</text>
<text x="811" y="291" font-family="Liberation Mono" font-size="8.6" fill="#ffffff" textLength="9.8" lengthAdjust="spacingAndGlyphs">i1</text>
<text x="828" y="282" font-family="Liberation Mono" font-size="8.6" fill="#ffffff" textLength="14.700000000000001" lengthAdjust="spacingAndGlyphs">u24</text>
<text x="849" y="287" font-family="Liberation Mono" font-size="8.6" fill="#ffffff" textLength="4.9" lengthAdjust="spacingAndGlyphs">q</text>
<text x="866" y="278" font-family="Liberation Mono" font-size="8.6" fill="#ffffff" textLength="14.700000000000001" lengthAdjust="spacingAndGlyphs">n32</text>
<path d="M944.5 66.5L955.5 72.5L944.5 77.5Z" stroke="#00e0e8" fill="none" stroke-width="1" />
<rect x="944" y="72" width="27" height="1" fill="#00e0e8" />
<rect x="1013" y="72" width="4" height="1" fill="#00e0e8" />
<rect x="1013" y="85" width="4" height="1" fill="#00e0e8" />
<path d="M944.5 230.5L955.5 236.5L944.5 241.5Z" stroke="#00e0e8" fill="none" stroke-width="1" />
<rect x="944" y="236" width="27" height="1" fill="#00e0e8" />
<rect x="1013" y="236" width="4" height="1" fill="#00e0e8" />
<rect x="1013" y="249" width="4" height="1" fill="#00e0e8" />
<rect x="1017" y="62" width="1" height="330" fill="#000" />
</g>
<rect x="5" y="4" width="16" height="16" fill="#000" />
<text x="5.5" y="9.6" font-family="Liberation Sans" font-size="6.5" fill="#b0b0b0" textLength="15" lengthAdjust="spacingAndGlyphs">Dreal</text>
<path d="M7 12L10 15H16L19 12M9 18H17M13 11V15M11 12H15" stroke="#a0a0a0" fill="none" stroke-width="1" shape-rendering="auto"/>
<rect x="23" y="12" width="6" height="1" fill="#000" />
<path d="M29 7H31L33 9.5H34.5L36 7H37.5V16H36L34.5 13.5H33L31 16H29Z" stroke="#000" fill="#fff" stroke-width="1.2" shape-rendering="auto"/>
<rect x="538" y="4" width="16" height="16" fill="#000" />
<path d="M539.5 6.5H544A3 3 0 0 1 544 12.5H539.5Z M539.5 13.5H544A3 3 0 0 1 544 19H539.5Z M547 9.5L552 12M547 16L552 13M549 11V15" stroke="#a8a8a8" fill="none" stroke-width="1" shape-rendering="auto"/>
<rect x="556" y="12" width="6" height="1" fill="#000" />
<path d="M562 7H564L566 9.5H567.5L569 7H570.5V16H569L567.5 13.5H566L564 16H562Z" stroke="#000" fill="#fff" stroke-width="1.2" shape-rendering="auto"/>
<path d="M321.5 396L325.5 396L337.5 412L333.5 412Z" stroke="#555" fill="#6a6a6a" stroke-width="0.6" shape-rendering="auto"/>
<path d="M323.5 397.5L335.5 411" stroke="#a8a8a8" fill="none" stroke-width="0.8" shape-rendering="auto"/>
<path d="M336 396L322.5 412" stroke="#666" fill="none" stroke-width="1.6" shape-rendering="auto"/>
<path d="M343 401Q344 397.5 348.5 398Q353.5 398.5 352.5 403.5Q352 408.5 347 409Q342.5 409 342.5 405Z" stroke="#000" fill="#f4f4f4" stroke-width="1.3" shape-rendering="auto"/>
<path d="M345 406.5Q349.5 405.5 350.5 401" stroke="#8a8a8a" fill="none" stroke-width="1.6" shape-rendering="auto"/>
<rect x="440" y="561" width="580" height="1" fill="#2a2a96" />
<rect x="442" y="562" width="1" height="11" fill="#2a2a96" />
<rect x="452" y="562" width="1" height="11" fill="#2a2a96" />
<rect x="462" y="562" width="1" height="11" fill="#2a2a96" />
<rect x="472" y="562" width="1" height="11" fill="#2a2a96" />
<rect x="482" y="562" width="1" height="11" fill="#2a2a96" />
<rect x="492" y="562" width="1" height="11" fill="#2a2a96" />
<rect x="502" y="562" width="1" height="11" fill="#2a2a96" />
<rect x="512" y="562" width="1" height="11" fill="#2a2a96" />
<rect x="522" y="562" width="1" height="11" fill="#2a2a96" />
<rect x="532" y="562" width="1" height="11" fill="#2a2a96" />
<rect x="542" y="562" width="1" height="11" fill="#2a2a96" />
<rect x="552" y="562" width="1" height="11" fill="#2a2a96" />
<rect x="562" y="562" width="1" height="11" fill="#2a2a96" />
<rect x="572" y="562" width="1" height="11" fill="#2a2a96" />
<rect x="582" y="562" width="1" height="11" fill="#2a2a96" />
<rect x="592" y="562" width="1" height="11" fill="#2a2a96" />
<rect x="602" y="562" width="1" height="11" fill="#2a2a96" />
<rect x="612" y="562" width="1" height="11" fill="#2a2a96" />
<rect x="622" y="562" width="1" height="11" fill="#2a2a96" />
<rect x="632" y="562" width="1" height="11" fill="#2a2a96" />
<rect x="642" y="562" width="1" height="11" fill="#2a2a96" />
<rect x="652" y="562" width="1" height="11" fill="#2a2a96" />
<rect x="662" y="562" width="1" height="11" fill="#2a2a96" />
<rect x="672" y="562" width="1" height="11" fill="#2a2a96" />
<rect x="682" y="562" width="1" height="11" fill="#2a2a96" />
<rect x="692" y="562" width="1" height="11" fill="#2a2a96" />
<rect x="702" y="562" width="1" height="11" fill="#2a2a96" />
<rect x="712" y="562" width="1" height="11" fill="#2a2a96" />
<rect x="722" y="562" width="1" height="11" fill="#2a2a96" />
<rect x="732" y="562" width="1" height="11" fill="#2a2a96" />
<rect x="742" y="562" width="1" height="11" fill="#2a2a96" />
<rect x="752" y="562" width="1" height="11" fill="#2a2a96" />
<rect x="762" y="562" width="1" height="11" fill="#2a2a96" />
<rect x="772" y="562" width="1" height="11" fill="#2a2a96" />
<rect x="782" y="562" width="1" height="11" fill="#2a2a96" />
<rect x="792" y="562" width="1" height="11" fill="#2a2a96" />
<rect x="802" y="562" width="1" height="11" fill="#2a2a96" />
<rect x="812" y="562" width="1" height="11" fill="#2a2a96" />
<rect x="822" y="562" width="1" height="11" fill="#2a2a96" />
<rect x="832" y="562" width="1" height="11" fill="#2a2a96" />
<rect x="842" y="562" width="1" height="11" fill="#2a2a96" />
<rect x="852" y="562" width="1" height="11" fill="#2a2a96" />
<rect x="862" y="562" width="1" height="11" fill="#2a2a96" />
<rect x="872" y="562" width="1" height="11" fill="#2a2a96" />
<rect x="882" y="562" width="1" height="11" fill="#2a2a96" />
<rect x="892" y="562" width="1" height="11" fill="#2a2a96" />
<rect x="902" y="562" width="1" height="11" fill="#2a2a96" />
<rect x="912" y="562" width="1" height="11" fill="#2a2a96" />
<rect x="922" y="562" width="1" height="11" fill="#2a2a96" />
<rect x="932" y="562" width="1" height="11" fill="#2a2a96" />
<rect x="942" y="562" width="1" height="11" fill="#2a2a96" />
<rect x="952" y="562" width="1" height="11" fill="#2a2a96" />
<rect x="962" y="562" width="1" height="11" fill="#2a2a96" />
<rect x="972" y="562" width="1" height="11" fill="#2a2a96" />
<rect x="982" y="562" width="1" height="11" fill="#2a2a96" />
<rect x="992" y="562" width="1" height="11" fill="#2a2a96" />
<rect x="1002" y="562" width="1" height="11" fill="#2a2a96" />
<rect x="1012" y="562" width="1" height="11" fill="#2a2a96" />
<text x="617" y="559" text-anchor="end" font-family="Liberation Sans" font-size="8.5" fill="#fff">10</text>
<text x="817" y="559" text-anchor="end" font-family="Liberation Sans" font-size="8.5" fill="#fff">20</text>
<text x="1017" y="559" text-anchor="end" font-family="Liberation Sans" font-size="8.5" fill="#fff">30</text>
<rect x="622" y="552" width="1" height="216" fill="#2a2a96" />
<text x="623" y="560" font-family="Liberation Mono" font-size="7" font-weight="bold" fill="#fff" textLength="14" lengthAdjust="spacingAndGlyphs">sec</text>
<rect x="822" y="552" width="1" height="216" fill="#2a2a96" />
<text x="823" y="560" font-family="Liberation Mono" font-size="7" font-weight="bold" fill="#fff" textLength="14" lengthAdjust="spacingAndGlyphs">sec</text>
<rect x="440" y="594" width="580" height="1" fill="#2a2a96" />
<rect x="440" y="616" width="580" height="1" fill="#2a2a96" />
<rect x="440" y="638" width="580" height="1" fill="#2a2a96" />
<rect x="440" y="660" width="580" height="1" fill="#2a2a96" />
<rect x="440" y="682" width="580" height="1" fill="#2a2a96" />
<rect x="440" y="704" width="580" height="1" fill="#2a2a96" />
<rect x="440" y="726" width="580" height="1" fill="#2a2a96" />
<rect x="440" y="576" width="1" height="1" fill="#00e000" />
<rect x="440" y="576" width="2" height="1" fill="#00e000" />
<rect x="442" y="576" width="1" height="17" fill="#00e000" />
<rect x="442" y="592" width="578" height="1" fill="#00a000" />
<rect x="440" y="614" width="2" height="1" fill="#00a000" />
<rect x="442" y="598" width="1" height="17" fill="#00e000" />
<rect x="442" y="598" width="21" height="1" fill="#00e000" />
<rect x="462" y="598" width="1" height="17" fill="#00e000" />
<rect x="462" y="614" width="21" height="1" fill="#00a000" />
<rect x="482" y="598" width="1" height="17" fill="#00e000" />
<rect x="482" y="598" width="21" height="1" fill="#00e000" />
<rect x="502" y="598" width="1" height="17" fill="#00e000" />
<rect x="502" y="614" width="21" height="1" fill="#00a000" />
<rect x="522" y="598" width="1" height="17" fill="#00e000" />
<rect x="522" y="598" width="21" height="1" fill="#00e000" />
<rect x="542" y="598" width="1" height="17" fill="#00e000" />
<rect x="542" y="614" width="21" height="1" fill="#00a000" />
<rect x="562" y="598" width="1" height="17" fill="#00e000" />
<rect x="562" y="598" width="21" height="1" fill="#00e000" />
<rect x="582" y="598" width="1" height="17" fill="#00e000" />
<rect x="582" y="614" width="21" height="1" fill="#00a000" />
<rect x="602" y="598" width="1" height="17" fill="#00e000" />
<rect x="602" y="598" width="21" height="1" fill="#00e000" />
<rect x="622" y="598" width="1" height="17" fill="#00e000" />
<rect x="622" y="614" width="21" height="1" fill="#00a000" />
<rect x="642" y="598" width="1" height="17" fill="#00e000" />
<rect x="642" y="598" width="21" height="1" fill="#00e000" />
<rect x="662" y="598" width="1" height="17" fill="#00e000" />
<rect x="662" y="614" width="21" height="1" fill="#00a000" />
<rect x="682" y="598" width="1" height="17" fill="#00e000" />
<rect x="682" y="598" width="21" height="1" fill="#00e000" />
<rect x="702" y="598" width="1" height="17" fill="#00e000" />
<rect x="702" y="614" width="21" height="1" fill="#00a000" />
<rect x="722" y="598" width="1" height="17" fill="#00e000" />
<rect x="722" y="598" width="21" height="1" fill="#00e000" />
<rect x="742" y="598" width="1" height="17" fill="#00e000" />
<rect x="742" y="614" width="21" height="1" fill="#00a000" />
<rect x="762" y="598" width="1" height="17" fill="#00e000" />
<rect x="762" y="598" width="21" height="1" fill="#00e000" />
<rect x="782" y="598" width="1" height="17" fill="#00e000" />
<rect x="782" y="614" width="21" height="1" fill="#00a000" />
<rect x="802" y="598" width="1" height="17" fill="#00e000" />
<rect x="802" y="598" width="21" height="1" fill="#00e000" />
<rect x="822" y="598" width="1" height="17" fill="#00e000" />
<rect x="822" y="614" width="21" height="1" fill="#00a000" />
<rect x="842" y="598" width="1" height="17" fill="#00e000" />
<rect x="842" y="598" width="21" height="1" fill="#00e000" />
<rect x="862" y="598" width="1" height="17" fill="#00e000" />
<rect x="862" y="614" width="21" height="1" fill="#00a000" />
<rect x="882" y="598" width="1" height="17" fill="#00e000" />
<rect x="882" y="598" width="21" height="1" fill="#00e000" />
<rect x="902" y="598" width="1" height="17" fill="#00e000" />
<rect x="902" y="614" width="21" height="1" fill="#00a000" />
<rect x="922" y="598" width="1" height="17" fill="#00e000" />
<rect x="922" y="598" width="21" height="1" fill="#00e000" />
<rect x="942" y="598" width="1" height="17" fill="#00e000" />
<rect x="942" y="614" width="21" height="1" fill="#00a000" />
<rect x="962" y="598" width="1" height="17" fill="#00e000" />
<rect x="962" y="598" width="21" height="1" fill="#00e000" />
<rect x="982" y="598" width="1" height="17" fill="#00e000" />
<rect x="982" y="614" width="21" height="1" fill="#00a000" />
<rect x="1002" y="598" width="1" height="17" fill="#00e000" />
<rect x="1002" y="598" width="18" height="1" fill="#00e000" />
<path d="M440 620.5L460 620.5L462 623.5L462 633.5L460 636.5L440 636.5" stroke="#00e000" fill="none" stroke-width="1" shape-rendering="crispEdges"/>
<path d="M464 620.5L500 620.5L502 623.5L502 633.5L500 636.5L464 636.5M464 620.5L462 623.5L462 633.5L464 636.5" stroke="#00e000" fill="none" stroke-width="1" shape-rendering="crispEdges"/>
<text x="465" y="631.5" font-family="Liberation Mono" font-size="8.6" font-weight="bold" fill="#fff">01</text>
<path d="M504 620.5L540 620.5L542 623.5L542 633.5L540 636.5L504 636.5M504 620.5L502 623.5L502 633.5L504 636.5" stroke="#00e000" fill="none" stroke-width="1" shape-rendering="crispEdges"/>
<text x="505" y="631.5" font-family="Liberation Mono" font-size="8.6" font-weight="bold" fill="#fff">02</text>
<path d="M544 620.5L580 620.5L582 623.5L582 633.5L580 636.5L544 636.5M544 620.5L542 623.5L542 633.5L544 636.5" stroke="#00e000" fill="none" stroke-width="1" shape-rendering="crispEdges"/>
<text x="545" y="631.5" font-family="Liberation Mono" font-size="8.6" font-weight="bold" fill="#fff">03</text>
<path d="M584 620.5L620 620.5L622 623.5L622 633.5L620 636.5L584 636.5M584 620.5L582 623.5L582 633.5L584 636.5" stroke="#00e000" fill="none" stroke-width="1" shape-rendering="crispEdges"/>
<text x="585" y="631.5" font-family="Liberation Mono" font-size="8.6" font-weight="bold" fill="#fff">00</text>
<path d="M624 620.5L660 620.5L662 623.5L662 633.5L660 636.5L624 636.5M624 620.5L622 623.5L622 633.5L624 636.5" stroke="#00e000" fill="none" stroke-width="1" shape-rendering="crispEdges"/>
<text x="625" y="631.5" font-family="Liberation Mono" font-size="8.6" font-weight="bold" fill="#fff">01</text>
<path d="M664 620.5L700 620.5L702 623.5L702 633.5L700 636.5L664 636.5M664 620.5L662 623.5L662 633.5L664 636.5" stroke="#00e000" fill="none" stroke-width="1" shape-rendering="crispEdges"/>
<text x="665" y="631.5" font-family="Liberation Mono" font-size="8.6" font-weight="bold" fill="#fff">02</text>
<path d="M704 620.5L740 620.5L742 623.5L742 633.5L740 636.5L704 636.5M704 620.5L702 623.5L702 633.5L704 636.5" stroke="#00e000" fill="none" stroke-width="1" shape-rendering="crispEdges"/>
<text x="705" y="631.5" font-family="Liberation Mono" font-size="8.6" font-weight="bold" fill="#fff">03</text>
<path d="M744 620.5L780 620.5L782 623.5L782 633.5L780 636.5L744 636.5M744 620.5L742 623.5L742 633.5L744 636.5" stroke="#00e000" fill="none" stroke-width="1" shape-rendering="crispEdges"/>
<text x="745" y="631.5" font-family="Liberation Mono" font-size="8.6" font-weight="bold" fill="#fff">00</text>
<path d="M784 620.5L820 620.5L822 623.5L822 633.5L820 636.5L784 636.5M784 620.5L782 623.5L782 633.5L784 636.5" stroke="#00e000" fill="none" stroke-width="1" shape-rendering="crispEdges"/>
<text x="785" y="631.5" font-family="Liberation Mono" font-size="8.6" font-weight="bold" fill="#fff">01</text>
<path d="M824 620.5L860 620.5L862 623.5L862 633.5L860 636.5L824 636.5M824 620.5L822 623.5L822 633.5L824 636.5" stroke="#00e000" fill="none" stroke-width="1" shape-rendering="crispEdges"/>
<text x="825" y="631.5" font-family="Liberation Mono" font-size="8.6" font-weight="bold" fill="#fff">02</text>
<path d="M864 620.5L900 620.5L902 623.5L902 633.5L900 636.5L864 636.5M864 620.5L862 623.5L862 633.5L864 636.5" stroke="#00e000" fill="none" stroke-width="1" shape-rendering="crispEdges"/>
<text x="865" y="631.5" font-family="Liberation Mono" font-size="8.6" font-weight="bold" fill="#fff">03</text>
<path d="M904 620.5L940 620.5L942 623.5L942 633.5L940 636.5L904 636.5M904 620.5L902 623.5L902 633.5L904 636.5" stroke="#00e000" fill="none" stroke-width="1" shape-rendering="crispEdges"/>
<text x="905" y="631.5" font-family="Liberation Mono" font-size="8.6" font-weight="bold" fill="#fff">00</text>
<path d="M944 620.5L980 620.5L982 623.5L982 633.5L980 636.5L944 636.5M944 620.5L942 623.5L942 633.5L944 636.5" stroke="#00e000" fill="none" stroke-width="1" shape-rendering="crispEdges"/>
<text x="945" y="631.5" font-family="Liberation Mono" font-size="8.6" font-weight="bold" fill="#fff">01</text>
<path d="M984 620.5L1020 620.5L1022 623.5L1022 633.5L1020 636.5L984 636.5M984 620.5L982 623.5L982 633.5L984 636.5" stroke="#00e000" fill="none" stroke-width="1" shape-rendering="crispEdges"/>
<text x="985" y="631.5" font-family="Liberation Mono" font-size="8.6" font-weight="bold" fill="#fff">02</text>
<path d="M440 642.5L460 642.5L462 645.5L462 655.5L460 658.5L440 658.5" stroke="#00e000" fill="none" stroke-width="1" shape-rendering="crispEdges"/>
<path d="M464 642.5L540 642.5L542 645.5L542 655.5L540 658.5L464 658.5M464 642.5L462 645.5L462 655.5L464 658.5" stroke="#00e000" fill="none" stroke-width="1" shape-rendering="crispEdges"/>
<text x="465" y="653.5" font-family="Liberation Mono" font-size="8.6" font-weight="bold" fill="#fff">8</text>
<path d="M544 642.5L580 642.5L582 645.5L582 655.5L580 658.5L544 658.5M544 642.5L542 645.5L542 655.5L544 658.5" stroke="#00e000" fill="none" stroke-width="1" shape-rendering="crispEdges"/>
<text x="545" y="653.5" font-family="Liberation Mono" font-size="8.6" font-weight="bold" fill="#fff">4</text>
<path d="M584 642.5L620 642.5L622 645.5L622 655.5L620 658.5L584 658.5M584 642.5L582 645.5L582 655.5L584 658.5" stroke="#00e000" fill="none" stroke-width="1" shape-rendering="crispEdges"/>
<text x="585" y="653.5" font-family="Liberation Mono" font-size="8.6" font-weight="bold" fill="#fff">A</text>
<path d="M624 642.5L660 642.5L662 645.5L662 655.5L660 658.5L624 658.5M624 642.5L622 645.5L622 655.5L624 658.5" stroke="#00e000" fill="none" stroke-width="1" shape-rendering="crispEdges"/>
<text x="625" y="653.5" font-family="Liberation Mono" font-size="8.6" font-weight="bold" fill="#fff">5</text>
<path d="M664 642.5L700 642.5L702 645.5L702 655.5L700 658.5L664 658.5M664 642.5L662 645.5L662 655.5L664 658.5" stroke="#00e000" fill="none" stroke-width="1" shape-rendering="crispEdges"/>
<text x="665" y="653.5" font-family="Liberation Mono" font-size="8.6" font-weight="bold" fill="#fff">8</text>
<path d="M704 642.5L740 642.5L742 645.5L742 655.5L740 658.5L704 658.5M704 642.5L702 645.5L702 655.5L704 658.5" stroke="#00e000" fill="none" stroke-width="1" shape-rendering="crispEdges"/>
<text x="705" y="653.5" font-family="Liberation Mono" font-size="8.6" font-weight="bold" fill="#fff">1</text>
<path d="M744 642.5L820 642.5L822 645.5L822 655.5L820 658.5L744 658.5M744 642.5L742 645.5L742 655.5L744 658.5" stroke="#00e000" fill="none" stroke-width="1" shape-rendering="crispEdges"/>
<text x="745" y="653.5" font-family="Liberation Mono" font-size="8.6" font-weight="bold" fill="#fff">3</text>
<path d="M824 642.5L860 642.5L862 645.5L862 655.5L860 658.5L824 658.5M824 642.5L822 645.5L822 655.5L824 658.5" stroke="#00e000" fill="none" stroke-width="1" shape-rendering="crispEdges"/>
<text x="825" y="653.5" font-family="Liberation Mono" font-size="8.6" font-weight="bold" fill="#fff">4</text>
<path d="M864 642.5L900 642.5L902 645.5L902 655.5L900 658.5L864 658.5M864 642.5L862 645.5L862 655.5L864 658.5" stroke="#00e000" fill="none" stroke-width="1" shape-rendering="crispEdges"/>
<text x="865" y="653.5" font-family="Liberation Mono" font-size="8.6" font-weight="bold" fill="#fff">D</text>
<path d="M904 642.5L940 642.5L942 645.5L942 655.5L940 658.5L904 658.5M904 642.5L902 645.5L902 655.5L904 658.5" stroke="#00e000" fill="none" stroke-width="1" shape-rendering="crispEdges"/>
<text x="905" y="653.5" font-family="Liberation Mono" font-size="8.6" font-weight="bold" fill="#fff">3</text>
<path d="M944 642.5L980 642.5L982 645.5L982 655.5L980 658.5L944 658.5M944 642.5L942 645.5L942 655.5L944 658.5" stroke="#00e000" fill="none" stroke-width="1" shape-rendering="crispEdges"/>
<text x="945" y="653.5" font-family="Liberation Mono" font-size="8.6" font-weight="bold" fill="#fff">5</text>
<path d="M984 642.5L1020 642.5L1022 645.5L1022 655.5L1020 658.5L984 658.5M984 642.5L982 645.5L982 655.5L984 658.5" stroke="#00e000" fill="none" stroke-width="1" shape-rendering="crispEdges"/>
<text x="985" y="653.5" font-family="Liberation Mono" font-size="8.6" font-weight="bold" fill="#fff">0</text>
<path d="M440 664.5L460 664.5L462 667.5L462 677.5L460 680.5L440 680.5" stroke="#00e000" fill="none" stroke-width="1" shape-rendering="crispEdges"/>
<path d="M464 664.5L540 664.5L542 667.5L542 677.5L540 680.5L464 680.5M464 664.5L462 667.5L462 677.5L464 680.5" stroke="#00e000" fill="none" stroke-width="1" shape-rendering="crispEdges"/>
<text x="465" y="675.5" font-family="Liberation Mono" font-size="8.6" font-weight="bold" fill="#fff">0</text>
<path d="M544 664.5L580 664.5L582 667.5L582 677.5L580 680.5L544 680.5M544 664.5L542 667.5L542 677.5L544 680.5" stroke="#00e000" fill="none" stroke-width="1" shape-rendering="crispEdges"/>
<text x="545" y="675.5" font-family="Liberation Mono" font-size="8.6" font-weight="bold" fill="#fff">A</text>
<path d="M584 664.5L620 664.5L622 667.5L622 677.5L620 680.5L584 680.5M584 664.5L582 667.5L582 677.5L584 680.5" stroke="#00e000" fill="none" stroke-width="1" shape-rendering="crispEdges"/>
<text x="585" y="675.5" font-family="Liberation Mono" font-size="8.6" font-weight="bold" fill="#fff">0</text>
<path d="M624 664.5L700 664.5L702 667.5L702 677.5L700 680.5L624 680.5M624 664.5L622 667.5L622 677.5L624 680.5" stroke="#00e000" fill="none" stroke-width="1" shape-rendering="crispEdges"/>
<text x="625" y="675.5" font-family="Liberation Mono" font-size="8.6" font-weight="bold" fill="#fff">8</text>
<path d="M704 664.5L740 664.5L742 667.5L742 677.5L740 680.5L704 680.5M704 664.5L702 667.5L702 677.5L704 680.5" stroke="#00e000" fill="none" stroke-width="1" shape-rendering="crispEdges"/>
<text x="705" y="675.5" font-family="Liberation Mono" font-size="8.6" font-weight="bold" fill="#fff">A</text>
<path d="M744 664.5L780 664.5L782 667.5L782 677.5L780 680.5L744 680.5M744 664.5L742 667.5L742 677.5L744 680.5" stroke="#00e000" fill="none" stroke-width="1" shape-rendering="crispEdges"/>
<text x="745" y="675.5" font-family="Liberation Mono" font-size="8.6" font-weight="bold" fill="#fff">0</text>
<path d="M784 664.5L820 664.5L822 667.5L822 677.5L820 680.5L784 680.5M784 664.5L782 667.5L782 677.5L784 680.5" stroke="#00e000" fill="none" stroke-width="1" shape-rendering="crispEdges"/>
<text x="785" y="675.5" font-family="Liberation Mono" font-size="8.6" font-weight="bold" fill="#fff">8</text>
<path d="M824 664.5L940 664.5L942 667.5L942 677.5L940 680.5L824 680.5M824 664.5L822 667.5L822 677.5L824 680.5" stroke="#00e000" fill="none" stroke-width="1" shape-rendering="crispEdges"/>
<text x="825" y="675.5" font-family="Liberation Mono" font-size="8.6" font-weight="bold" fill="#fff">0</text>
<path d="M944 664.5L980 664.5L982 667.5L982 677.5L980 680.5L944 680.5M944 664.5L942 667.5L942 677.5L944 680.5" stroke="#00e000" fill="none" stroke-width="1" shape-rendering="crispEdges"/>
<text x="945" y="675.5" font-family="Liberation Mono" font-size="8.6" font-weight="bold" fill="#fff">8</text>
<path d="M984 664.5L1020 664.5L1022 667.5L1022 677.5L1020 680.5L984 680.5M984 664.5L982 667.5L982 677.5L984 680.5" stroke="#00e000" fill="none" stroke-width="1" shape-rendering="crispEdges"/>
<text x="985" y="675.5" font-family="Liberation Mono" font-size="8.6" font-weight="bold" fill="#fff">0</text>
<rect x="440" y="686" width="22" height="16" fill="#004000" />
<rect x="440" y="686" width="23" height="1" fill="#00e000" />
<rect x="440" y="702" width="23" height="1" fill="#00e000" />
<rect x="462" y="686" width="1" height="17" fill="#00e000" />
<rect x="462" y="702" width="81" height="1" fill="#00a000" />
<rect x="542" y="686" width="1" height="17" fill="#00e000" />
<rect x="542" y="686" width="41" height="1" fill="#00e000" />
<rect x="582" y="686" width="1" height="17" fill="#00e000" />
<rect x="582" y="702" width="41" height="1" fill="#00a000" />
<rect x="622" y="686" width="1" height="17" fill="#00e000" />
<rect x="622" y="686" width="121" height="1" fill="#00e000" />
<rect x="742" y="686" width="1" height="17" fill="#00e000" />
<rect x="742" y="702" width="41" height="1" fill="#00a000" />
<rect x="782" y="686" width="1" height="17" fill="#00e000" />
<rect x="782" y="686" width="41" height="1" fill="#00e000" />
<rect x="822" y="686" width="1" height="17" fill="#00e000" />
<rect x="822" y="702" width="121" height="1" fill="#00a000" />
<rect x="942" y="686" width="1" height="17" fill="#00e000" />
<rect x="942" y="686" width="41" height="1" fill="#00e000" />
<rect x="982" y="686" width="1" height="17" fill="#00e000" />
<rect x="982" y="702" width="38" height="1" fill="#00a000" />
<rect x="440" y="708" width="22" height="16" fill="#004000" />
<rect x="440" y="708" width="23" height="1" fill="#00e000" />
<rect x="440" y="724" width="23" height="1" fill="#00e000" />
<rect x="462" y="708" width="1" height="17" fill="#00e000" />
<rect x="462" y="708" width="81" height="1" fill="#00e000" />
<rect x="542" y="708" width="1" height="17" fill="#00e000" />
<rect x="542" y="724" width="41" height="1" fill="#00a000" />
<rect x="582" y="708" width="1" height="17" fill="#00e000" />
<rect x="582" y="708" width="41" height="1" fill="#00e000" />
<rect x="622" y="708" width="1" height="17" fill="#00e000" />
<rect x="622" y="724" width="121" height="1" fill="#00a000" />
<rect x="742" y="708" width="1" height="17" fill="#00e000" />
<rect x="742" y="708" width="41" height="1" fill="#00e000" />
<rect x="782" y="708" width="1" height="17" fill="#00e000" />
<rect x="782" y="724" width="41" height="1" fill="#00a000" />
<rect x="822" y="708" width="1" height="17" fill="#00e000" />
<rect x="822" y="708" width="121" height="1" fill="#00e000" />
<rect x="942" y="708" width="1" height="17" fill="#00e000" />
<rect x="942" y="724" width="41" height="1" fill="#00a000" />
<rect x="982" y="708" width="1" height="17" fill="#00e000" />
<rect x="982" y="708" width="38" height="1" fill="#00e000" />
<text x="709" y="754" font-family="Liberation Mono" font-size="17.5" fill="#d4d4d4" textLength="266" lengthAdjust="spacing">http://www.ip-arch.jp/</text>
<rect x="440" y="449" width="67" height="1" fill="#000" />
<rect x="440" y="450" width="66" height="75" fill="#fff" />
<rect x="504" y="450" width="1" height="76" fill="#e4e4dc" />
<rect x="505" y="450" width="1" height="76" fill="#eeeee6" />
<rect x="440" y="525" width="66" height="1" fill="#e4e4dc" />
<text x="462.5" y="484" font-family="Liberation Sans" font-size="15" font-weight="normal" fill="#000" text-anchor="end">nd.</text>
<text x="467.5" y="503" font-family="Liberation Sans" font-size="15" font-weight="normal" fill="#000" text-anchor="end">und.</text>
<rect x="507" y="449" width="13" height="78" fill="#c6c6be" />
<rect x="507" y="449" width="1" height="79" fill="#000" />
<rect x="508" y="472" width="10" height="41" fill="#eaeae2" />
<rect x="518" y="461" width="1" height="53" fill="#000" />
<rect x="508" y="513" width="11" height="1" fill="#000" />
<rect x="508" y="460" width="11" height="1" fill="#000" />
<path d="M509 460L513 450L518 460" stroke="#000" fill="#eaeae2" stroke-width="1" shape-rendering="auto"/>
<path d="M509 514L513 526L518 514" stroke="#000" fill="#c6c6be" stroke-width="1" shape-rendering="auto"/>
<rect x="522" y="466" width="109" height="1" fill="#a8a8a0" />
<rect x="523" y="467" width="108" height="1" fill="#fff" />
<rect x="522" y="515" width="109" height="1" fill="#a8a8a0" />
<rect x="522" y="516" width="110" height="1" fill="#fff" />
<rect x="522" y="466" width="1" height="50" fill="#a8a8a0" />
<rect x="523" y="467" width="1" height="49" fill="#fff" />
<rect x="630" y="466" width="1" height="50" fill="#a8a8a0" />
<rect x="631" y="466" width="1" height="51" fill="#fff" />
<rect x="525" y="465" width="45" height="3" fill="#eeeee6" />
<text x="527" y="472" font-family="Liberation Sans" font-size="16" font-weight="normal" fill="#000" >Zoom</text>
<rect x="633" y="466" width="49" height="1" fill="#a8a8a0" />
<rect x="634" y="467" width="48" height="1" fill="#fff" />
<rect x="633" y="515" width="49" height="1" fill="#a8a8a0" />
<rect x="633" y="516" width="50" height="1" fill="#fff" />
<rect x="633" y="466" width="1" height="50" fill="#a8a8a0" />
<rect x="634" y="467" width="1" height="49" fill="#fff" />
<rect x="681" y="466" width="1" height="50" fill="#a8a8a0" />
<rect x="682" y="466" width="1" height="51" fill="#fff" />
<rect x="637" y="465" width="41" height="3" fill="#eeeee6" />
<text x="639" y="472" font-family="Liberation Sans" font-size="16" font-weight="normal" fill="#000" >Page</text>
<rect x="685" y="466" width="52" height="1" fill="#a8a8a0" />
<rect x="686" y="467" width="51" height="1" fill="#fff" />
<rect x="685" y="515" width="52" height="1" fill="#a8a8a0" />
<rect x="685" y="516" width="53" height="1" fill="#fff" />
<rect x="685" y="466" width="1" height="50" fill="#a8a8a0" />
<rect x="686" y="467" width="1" height="49" fill="#fff" />
<rect x="736" y="466" width="1" height="50" fill="#a8a8a0" />
<rect x="737" y="466" width="1" height="51" fill="#fff" />
<rect x="688" y="465" width="44" height="3" fill="#eeeee6" />
<text x="690" y="472" font-family="Liberation Sans" font-size="16" font-weight="normal" fill="#000" >Fetch</text>
<rect x="740" y="466" width="42" height="1" fill="#a8a8a0" />
<rect x="741" y="467" width="41" height="1" fill="#fff" />
<rect x="740" y="515" width="42" height="1" fill="#a8a8a0" />
<rect x="740" y="516" width="43" height="1" fill="#fff" />
<rect x="740" y="466" width="1" height="50" fill="#a8a8a0" />
<rect x="741" y="467" width="1" height="49" fill="#fff" />
<rect x="781" y="466" width="1" height="50" fill="#a8a8a0" />
<rect x="782" y="466" width="1" height="51" fill="#fff" />
<rect x="743" y="465" width="35" height="3" fill="#eeeee6" />
<text x="745" y="472" font-family="Liberation Sans" font-size="16" font-weight="normal" fill="#000" >Disc</text>
<rect x="785" y="466" width="44" height="1" fill="#a8a8a0" />
<rect x="786" y="467" width="43" height="1" fill="#fff" />
<rect x="785" y="515" width="44" height="1" fill="#a8a8a0" />
<rect x="785" y="516" width="45" height="1" fill="#fff" />
<rect x="785" y="466" width="1" height="50" fill="#a8a8a0" />
<rect x="786" y="467" width="1" height="49" fill="#fff" />
<rect x="828" y="466" width="1" height="50" fill="#a8a8a0" />
<rect x="829" y="466" width="1" height="51" fill="#fff" />
<rect x="788" y="465" width="37" height="3" fill="#eeeee6" />
<text x="790" y="472" font-family="Liberation Sans" font-size="16" font-weight="normal" fill="#000" >Shift</text>
<rect x="525" y="478" width="33" height="17" fill="#eeeee6" />
<rect x="525" y="478" width="33" height="1" fill="#fafaf4" />
<rect x="525" y="478" width="1" height="17" fill="#fafaf4" />
<rect x="525" y="494" width="33" height="1" fill="#000" />
<rect x="557" y="478" width="1" height="17" fill="#000" />
<rect x="526" y="493" width="31" height="1" fill="#a8a8a0" />
<rect x="556" y="479" width="1" height="15" fill="#a8a8a0" />
<rect x="525" y="497" width="33" height="17" fill="#eeeee6" />
<rect x="525" y="497" width="33" height="1" fill="#fafaf4" />
<rect x="525" y="497" width="1" height="17" fill="#fafaf4" />
<rect x="525" y="513" width="33" height="1" fill="#000" />
<rect x="557" y="497" width="1" height="17" fill="#000" />
<rect x="526" y="512" width="31" height="1" fill="#a8a8a0" />
<rect x="556" y="498" width="1" height="15" fill="#a8a8a0" />
<rect x="560" y="478" width="33" height="17" fill="#eeeee6" />
<rect x="560" y="478" width="33" height="1" fill="#fafaf4" />
<rect x="560" y="478" width="1" height="17" fill="#fafaf4" />
<rect x="560" y="494" width="33" height="1" fill="#000" />
<rect x="592" y="478" width="1" height="17" fill="#000" />
<rect x="561" y="493" width="31" height="1" fill="#a8a8a0" />
<rect x="591" y="479" width="1" height="15" fill="#a8a8a0" />
<rect x="560" y="497" width="33" height="17" fill="#eeeee6" />
<rect x="560" y="497" width="33" height="1" fill="#fafaf4" />
<rect x="560" y="497" width="1" height="17" fill="#fafaf4" />
<rect x="560" y="513" width="33" height="1" fill="#000" />
<rect x="592" y="497" width="1" height="17" fill="#000" />
<rect x="561" y="512" width="31" height="1" fill="#a8a8a0" />
<rect x="591" y="498" width="1" height="15" fill="#a8a8a0" />
<rect x="594" y="478" width="35" height="17" fill="#eeeee6" />
<rect x="594" y="478" width="35" height="1" fill="#fafaf4" />
<rect x="594" y="478" width="1" height="17" fill="#fafaf4" />
<rect x="594" y="494" width="35" height="1" fill="#000" />
<rect x="628" y="478" width="1" height="17" fill="#000" />
<rect x="595" y="493" width="33" height="1" fill="#a8a8a0" />
<rect x="627" y="479" width="1" height="15" fill="#a8a8a0" />
<rect x="594" y="497" width="35" height="17" fill="#eeeee6" />
<rect x="594" y="497" width="35" height="1" fill="#fafaf4" />
<rect x="594" y="497" width="1" height="17" fill="#fafaf4" />
<rect x="594" y="513" width="35" height="1" fill="#000" />
<rect x="628" y="497" width="1" height="17" fill="#000" />
<rect x="595" y="512" width="33" height="1" fill="#a8a8a0" />
<rect x="627" y="498" width="1" height="15" fill="#a8a8a0" />
<path d="M531 480.5L542.5 486.5L531 492.5Z M553 480.5L541.5 486.5L553 492.5Z" stroke="none" fill="#000" stroke-width="1" shape-rendering="auto"/>
<rect x="528" y="486" width="27" height="1" fill="#000" />
<rect x="563" y="481" width="1.5" height="11" fill="#000" />
<rect x="589" y="481" width="1.5" height="11" fill="#000" />
<path d="M564 486.5L573 480.5L573 492.5Z M589 486.5L580 480.5L580 492.5Z" stroke="none" fill="#000" stroke-width="1" shape-rendering="auto"/>
<rect x="566" y="486" width="20" height="1" fill="#000" />
<rect x="599" y="481" width="1.5" height="11" fill="#000" />
<path d="M600 486.5L609.5 480.5L609.5 492.5Z" stroke="none" fill="#000" stroke-width="1" shape-rendering="auto"/>
<rect x="605" y="486" width="17" height="1" fill="#000" />
<path d="M527.5 505.5L538 499.5L538 511.5Z M555.5 505.5L545 499.5L545 511.5Z" stroke="none" fill="#000" stroke-width="1" shape-rendering="auto"/>
<rect x="535" y="505" width="13" height="1" fill="#000" />
<text x="562.5" y="511" font-family="Liberation Sans" font-size="14.5" font-weight="bold" fill="#000" textLength="27" lengthAdjust="spacingAndGlyphs" transform="translate(562.5 511) scale(1 1.05) translate(-562.5 -511)">UNDO</text>
<path d="M623 505.5L613 499.5L613 511.5Z" stroke="none" fill="#000" stroke-width="1" shape-rendering="auto"/>
<rect x="623" y="500" width="1.5" height="11" fill="#000" />
<rect x="601" y="505" width="14" height="1" fill="#000" />
<rect x="636" y="478" width="44" height="17" fill="#eeeee6" />
<rect x="636" y="478" width="44" height="1" fill="#fafaf4" />
<rect x="636" y="478" width="1" height="17" fill="#fafaf4" />
<rect x="636" y="494" width="44" height="1" fill="#000" />
<rect x="679" y="478" width="1" height="17" fill="#000" />
<rect x="637" y="493" width="42" height="1" fill="#a8a8a0" />
<rect x="678" y="479" width="1" height="15" fill="#a8a8a0" />
<rect x="636" y="497" width="44" height="17" fill="#eeeee6" />
<rect x="636" y="497" width="44" height="1" fill="#fafaf4" />
<rect x="636" y="497" width="1" height="17" fill="#fafaf4" />
<rect x="636" y="513" width="44" height="1" fill="#000" />
<rect x="679" y="497" width="1" height="17" fill="#000" />
<rect x="637" y="512" width="42" height="1" fill="#a8a8a0" />
<rect x="678" y="498" width="1" height="15" fill="#a8a8a0" />
<path d="M646.5 486L656.5 481L656.5 491Z" stroke="none" fill="#000" stroke-width="1" shape-rendering="auto"/>
<rect x="655.5" y="485.5" width="13" height="1" fill="#000" />
<path d="M668.5 505L658.5 500L658.5 510Z" stroke="none" fill="#000" stroke-width="1" shape-rendering="auto"/>
<rect x="646.5" y="504.5" width="13" height="1" fill="#000" />
<rect x="688" y="478" width="47" height="17" fill="#eeeee6" />
<rect x="688" y="478" width="47" height="1" fill="#fafaf4" />
<rect x="688" y="478" width="1" height="17" fill="#fafaf4" />
<rect x="688" y="494" width="47" height="1" fill="#000" />
<rect x="734" y="478" width="1" height="17" fill="#000" />
<rect x="689" y="493" width="45" height="1" fill="#a8a8a0" />
<rect x="733" y="479" width="1" height="15" fill="#a8a8a0" />
<rect x="688" y="497" width="47" height="17" fill="#eeeee6" />
<rect x="688" y="497" width="47" height="1" fill="#fafaf4" />
<rect x="688" y="497" width="1" height="17" fill="#fafaf4" />
<rect x="688" y="513" width="47" height="1" fill="#000" />
<rect x="734" y="497" width="1" height="17" fill="#000" />
<rect x="689" y="512" width="45" height="1" fill="#a8a8a0" />
<rect x="733" y="498" width="1" height="15" fill="#a8a8a0" />
<path d="M700.0 486L710.0 481L710.0 491Z" stroke="none" fill="#000" stroke-width="1" shape-rendering="auto"/>
<rect x="709.0" y="485.5" width="13" height="1" fill="#000" />
<path d="M722.0 505L712.0 500L712.0 510Z" stroke="none" fill="#000" stroke-width="1" shape-rendering="auto"/>
<rect x="700.0" y="504.5" width="13" height="1" fill="#000" />
<rect x="743" y="478" width="37" height="17" fill="#eeeee6" />
<rect x="743" y="478" width="37" height="1" fill="#fafaf4" />
<rect x="743" y="478" width="1" height="17" fill="#fafaf4" />
<rect x="743" y="494" width="37" height="1" fill="#000" />
<rect x="779" y="478" width="1" height="17" fill="#000" />
<rect x="744" y="493" width="35" height="1" fill="#a8a8a0" />
<rect x="778" y="479" width="1" height="15" fill="#a8a8a0" />
<rect x="743" y="497" width="37" height="17" fill="#eeeee6" />
<rect x="743" y="497" width="37" height="1" fill="#fafaf4" />
<rect x="743" y="497" width="1" height="17" fill="#fafaf4" />
<rect x="743" y="513" width="37" height="1" fill="#000" />
<rect x="779" y="497" width="1" height="17" fill="#000" />
<rect x="744" y="512" width="35" height="1" fill="#a8a8a0" />
<rect x="778" y="498" width="1" height="15" fill="#a8a8a0" />
<path d="M750.0 486L760.0 481L760.0 491Z" stroke="none" fill="#000" stroke-width="1" shape-rendering="auto"/>
<rect x="759.0" y="485.5" width="13" height="1" fill="#000" />
<path d="M772.0 505L762.0 500L762.0 510Z" stroke="none" fill="#000" stroke-width="1" shape-rendering="auto"/>
<rect x="750.0" y="504.5" width="13" height="1" fill="#000" />
<rect x="788" y="478" width="38" height="17" fill="#eeeee6" />
<rect x="788" y="478" width="38" height="1" fill="#fafaf4" />
<rect x="788" y="478" width="1" height="17" fill="#fafaf4" />
<rect x="788" y="494" width="38" height="1" fill="#000" />
<rect x="825" y="478" width="1" height="17" fill="#000" />
<rect x="789" y="493" width="36" height="1" fill="#a8a8a0" />
<rect x="824" y="479" width="1" height="15" fill="#a8a8a0" />
<rect x="788" y="497" width="38" height="17" fill="#eeeee6" />
<rect x="788" y="497" width="38" height="1" fill="#fafaf4" />
<rect x="788" y="497" width="1" height="17" fill="#fafaf4" />
<rect x="788" y="513" width="38" height="1" fill="#000" />
<rect x="825" y="497" width="1" height="17" fill="#000" />
<rect x="789" y="512" width="36" height="1" fill="#a8a8a0" />
<rect x="824" y="498" width="1" height="15" fill="#a8a8a0" />
<path d="M795.5 486L805.5 481L805.5 491Z" stroke="none" fill="#000" stroke-width="1" shape-rendering="auto"/>
<rect x="804.5" y="485.5" width="13" height="1" fill="#000" />
<path d="M817.5 505L807.5 500L807.5 510Z" stroke="none" fill="#000" stroke-width="1" shape-rendering="auto"/>
<rect x="795.5" y="504.5" width="13" height="1" fill="#000" />
<text x="832" y="480" font-family="Liberation Sans" font-size="16" font-weight="normal" fill="#000" >From:</text>
<text x="837" y="504.5" font-family="Liberation Sans" font-size="16" font-weight="normal" fill="#000" >To:</text>
<rect x="874" y="466" width="89" height="21" fill="#fff" />
<rect x="874" y="466" width="89" height="1" fill="#000" />
<rect x="874" y="466" width="1" height="21" fill="#000" />
<rect x="874" y="486" width="89" height="1" fill="#e4e4dc" />
<rect x="962" y="466" width="1" height="21" fill="#e4e4dc" />
<text x="877" y="481" font-family="Liberation Sans" font-size="16" font-weight="normal" fill="#000" >0 sec</text>
<rect x="864" y="490" width="99" height="21" fill="#fff" />
<rect x="864" y="490" width="99" height="1" fill="#000" />
<rect x="864" y="490" width="1" height="21" fill="#000" />
<rect x="864" y="510" width="99" height="1" fill="#e4e4dc" />
<rect x="962" y="490" width="1" height="21" fill="#e4e4dc" />
<text x="867" y="505" font-family="Liberation Sans" font-size="16" font-weight="normal" fill="#000" >31 sec</text>
<text x="1015" y="462.5" font-family="Liberation Sans" font-size="16" font-weight="normal" fill="#000" text-anchor="end">Marker</text>
<text x="1015" y="482" font-family="Liberation Sans" font-size="16" font-weight="normal" fill="#000" text-anchor="end">--</text>
<text x="964" y="502.5" font-family="Liberation Sans" font-size="16" font-weight="normal" fill="#000" >Current</text>
<text x="991" y="522" font-family="Liberation Sans" font-size="16" font-weight="normal" fill="#000" >3 sec</text>
<rect x="474" y="538" width="545" height="1" fill="#a8a8a0" />
<rect x="474" y="539" width="545" height="1" fill="#fff" />
<text x="421" y="543" font-family="Liberation Sans" font-size="16" font-weight="normal" fill="#000" >Waves</text>
<rect x="0" y="417" width="440" height="351" fill="#000" />
<rect x="1" y="418" width="438" height="349" fill="#eeeee6" />
<rect x="0" y="418" width="381" height="21" fill="#2c66dc" />
<rect x="0" y="418" width="381" height="1" fill="#6d9cf0" />
<rect x="1" y="439" width="438" height="1" fill="#e8e4d8" />
<rect x="4" y="440" width="417" height="319" fill="#000" />
<rect x="3" y="759" width="418" height="1" fill="#fafaf5" />
<rect x="3" y="761" width="436" height="1" fill="#a0a098" />
<rect x="2" y="762" width="19" height="4" fill="#c8c8c0" />
<rect x="22" y="762" width="415" height="4" fill="#eeeee6" />
<rect x="0" y="766" width="440" height="1" fill="#000" />
<rect x="0" y="767" width="440" height="1" fill="#000" />
<rect x="439" y="417" width="1" height="351" fill="#000" />
<rect x="383" y="421" width="16" height="16" fill="#8a8a88" />
<rect x="384" y="422" width="14" height="14" fill="url(#gBtn)" />
<rect x="389.0" y="427.0" width="4" height="4" fill="#000" />
<rect x="401" y="421" width="16" height="16" fill="#8a8a88" />
<rect x="402" y="422" width="14" height="14" fill="url(#gBtn)" />
<rect x="405.0" y="425.0" width="8" height="8" fill="#000" />
<rect x="407.0" y="427.0" width="4" height="4" fill="#c8c8c8" />
<rect x="419" y="421" width="16" height="16" fill="#8a8a88" />
<rect x="420" y="422" width="14" height="14" fill="url(#gBtn)" />
<path d="M423.5 425.5L430.5 432.5M430.5 425.5L423.5 432.5" stroke="#000" fill="none" stroke-width="2.4" shape-rendering="auto"/>
<text x="42" y="435" font-family="Liberation Sans" font-size="14" font-weight="bold" fill="#fff" >Shell - Konsole</text>
<rect x="4" y="438" width="434" height="1" fill="#a8a49c" />
<rect x="4" y="439" width="434" height="1" fill="#f4f0e8" />
<rect x="421" y="440" width="15" height="319" fill="#ebe6de" />
<rect x="421" y="440" width="1" height="319" fill="#faf6ee" />
<rect x="436" y="438" width="1" height="323" fill="#8c8880" />
<rect x="437" y="417" width="1" height="350" fill="#f4f4ee" />
<rect x="438" y="417" width="1" height="350" fill="#c0c0b8" />
<rect x="421" y="440" width="15" height="17" fill="#ede8e0" />
<rect x="422" y="440" width="13" height="1" fill="#a09c94" />
<rect x="421" y="441" width="1" height="16" fill="#a09c94" />
<rect x="435" y="441" width="1" height="16" fill="#a09c94" />
<rect x="422" y="456" width="13" height="1" fill="#a09c94" />
<path d="M424 450.5L428.5 445.5L433 450.5Z" stroke="none" fill="#000" stroke-width="1" shape-rendering="auto"/>
<rect x="421" y="727" width="15" height="16" fill="#ede8e0" />
<rect x="422" y="727" width="13" height="1" fill="#a09c94" />
<rect x="421" y="728" width="1" height="15" fill="#a09c94" />
<rect x="435" y="728" width="1" height="15" fill="#a09c94" />
<rect x="422" y="742" width="13" height="1" fill="#a09c94" />
<path d="M424 737.0L428.5 732.0L433 737.0Z" stroke="none" fill="#000" stroke-width="1" shape-rendering="auto"/>
<rect x="421" y="743" width="15" height="16" fill="#ede8e0" />
<rect x="422" y="743" width="13" height="1" fill="#a09c94" />
<rect x="421" y="744" width="1" height="15" fill="#a09c94" />
<rect x="435" y="744" width="1" height="15" fill="#a09c94" />
<rect x="422" y="758" width="13" height="1" fill="#a09c94" />
<path d="M424 748.0L428.5 753.0L433 748.0Z" stroke="none" fill="#000" stroke-width="1" shape-rendering="auto"/>
<rect x="424" y="586" width="1" height="1" fill="#ffffff" />
<rect x="425" y="587" width="1" height="1" fill="#8c8880" />
<rect x="427" y="586" width="1" height="1" fill="#ffffff" />
<rect x="428" y="587" width="1" height="1" fill="#8c8880" />
<rect x="430" y="586" width="1" height="1" fill="#ffffff" />
<rect x="431" y="587" width="1" height="1" fill="#8c8880" />
<rect x="424" y="589" width="1" height="1" fill="#ffffff" />
<rect x="425" y="590" width="1" height="1" fill="#8c8880" />
<rect x="427" y="589" width="1" height="1" fill="#ffffff" />
<rect x="428" y="590" width="1" height="1" fill="#8c8880" />
<rect x="430" y="589" width="1" height="1" fill="#ffffff" />
<rect x="431" y="590" width="1" height="1" fill="#8c8880" />
<rect x="424" y="592" width="1" height="1" fill="#ffffff" />
<rect x="425" y="593" width="1" height="1" fill="#8c8880" />
<rect x="427" y="592" width="1" height="1" fill="#ffffff" />
<rect x="428" y="593" width="1" height="1" fill="#8c8880" />
<rect x="430" y="592" width="1" height="1" fill="#ffffff" />
<rect x="431" y="593" width="1" height="1" fill="#8c8880" />
<rect x="424" y="595" width="1" height="1" fill="#ffffff" />
<rect x="425" y="596" width="1" height="1" fill="#8c8880" />
<rect x="427" y="595" width="1" height="1" fill="#ffffff" />
<rect x="428" y="596" width="1" height="1" fill="#8c8880" />
<rect x="430" y="595" width="1" height="1" fill="#ffffff" />
<rect x="431" y="596" width="1" height="1" fill="#8c8880" />
<rect x="424" y="598" width="1" height="1" fill="#ffffff" />
<rect x="425" y="599" width="1" height="1" fill="#8c8880" />
<rect x="427" y="598" width="1" height="1" fill="#ffffff" />
<rect x="428" y="599" width="1" height="1" fill="#8c8880" />
<rect x="430" y="598" width="1" height="1" fill="#ffffff" />
<rect x="431" y="599" width="1" height="1" fill="#8c8880" />
<rect x="149" y="421" width="1" height="1" fill="#e0e8ff" />
<rect x="150" y="422" width="1" height="1" fill="#1c3c98" />
<rect x="152" y="421" width="1" height="1" fill="#e0e8ff" />
<rect x="153" y="422" width="1" height="1" fill="#1c3c98" />
<rect x="155" y="421" width="1" height="1" fill="#e0e8ff" />
<rect x="156" y="422" width="1" height="1" fill="#1c3c98" />
<rect x="158" y="421" width="1" height="1" fill="#e0e8ff" />
<rect x="159" y="422" width="1" height="1" fill="#1c3c98" />
<rect x="161" y="421" width="1" height="1" fill="#e0e8ff" />
<rect x="162" y="422" width="1" height="1" fill="#1c3c98" />
<rect x="164" y="421" width="1" height="1" fill="#e0e8ff" />
<rect x="165" y="422" width="1" height="1" fill="#1c3c98" />
<rect x="167" y="421" width="1" height="1" fill="#e0e8ff" />
<rect x="168" y="422" width="1" height="1" fill="#1c3c98" />
<rect x="170" y="421" width="1" height="1" fill="#e0e8ff" />
<rect x="171" y="422" width="1" height="1" fill="#1c3c98" />
<rect x="173" y="421" width="1" height="1" fill="#e0e8ff" />
<rect x="174" y="422" width="1" height="1" fill="#1c3c98" />
<rect x="176" y="421" width="1" height="1" fill="#e0e8ff" />
<rect x="177" y="422" width="1" height="1" fill="#1c3c98" />
<rect x="179" y="421" width="1" height="1" fill="#e0e8ff" />
<rect x="180" y="422" width="1" height="1" fill="#1c3c98" />
<rect x="182" y="421" width="1" height="1" fill="#e0e8ff" />
<rect x="183" y="422" width="1" height="1" fill="#1c3c98" />
<rect x="185" y="421" width="1" height="1" fill="#e0e8ff" />
<rect x="186" y="422" width="1" height="1" fill="#1c3c98" />
<rect x="188" y="421" width="1" height="1" fill="#e0e8ff" />
<rect x="189" y="422" width="1" height="1" fill="#1c3c98" />
<rect x="191" y="421" width="1" height="1" fill="#e0e8ff" />
<rect x="192" y="422" width="1" height="1" fill="#1c3c98" />
<rect x="194" y="421" width="1" height="1" fill="#e0e8ff" />
<rect x="195" y="422" width="1" height="1" fill="#1c3c98" />
<rect x="197" y="421" width="1" height="1" fill="#e0e8ff" />
<rect x="198" y="422" width="1" height="1" fill="#1c3c98" />
<rect x="200" y="421" width="1" height="1" fill="#e0e8ff" />
<rect x="201" y="422" width="1" height="1" fill="#1c3c98" />
<rect x="203" y="421" width="1" height="1" fill="#e0e8ff" />
<rect x="204" y="422" width="1" height="1" fill="#1c3c98" />
<rect x="206" y="421" width="1" height="1" fill="#e0e8ff" />
<rect x="207" y="422" width="1" height="1" fill="#1c3c98" />
<rect x="209" y="421" width="1" height="1" fill="#e0e8ff" />
<rect x="210" y="422" width="1" height="1" fill="#1c3c98" />
<rect x="212" y="421" width="1" height="1" fill="#e0e8ff" />
<rect x="213" y="422" width="1" height="1" fill="#1c3c98" />
<rect x="215" y="421" width="1" height="1" fill="#e0e8ff" />
<rect x="216" y="422" width="1" height="1" fill="#1c3c98" />
<rect x="218" y="421" width="1" height="1" fill="#e0e8ff" />
<rect x="219" y="422" width="1" height="1" fill="#1c3c98" />
<rect x="221" y="421" width="1" height="1" fill="#e0e8ff" />
<rect x="222" y="422" width="1" height="1" fill="#1c3c98" />
<rect x="224" y="421" width="1" height="1" fill="#e0e8ff" />
<rect x="225" y="422" width="1" height="1" fill="#1c3c98" />
<rect x="227" y="421" width="1" height="1" fill="#e0e8ff" />
<rect x="228" y="422" width="1" height="1" fill="#1c3c98" />
<rect x="230" y="421" width="1" height="1" fill="#e0e8ff" />
<rect x="231" y="422" width="1" height="1" fill="#1c3c98" />
<rect x="233" y="421" width="1" height="1" fill="#e0e8ff" />
<rect x="234" y="422" width="1" height="1" fill="#1c3c98" />
<rect x="236" y="421" width="1" height="1" fill="#e0e8ff" />
<rect x="237" y="422" width="1" height="1" fill="#1c3c98" />
<rect x="239" y="421" width="1" height="1" fill="#e0e8ff" />
<rect x="240" y="422" width="1" height="1" fill="#1c3c98" />
<rect x="242" y="421" width="1" height="1" fill="#e0e8ff" />
<rect x="243" y="422" width="1" height="1" fill="#1c3c98" />
<rect x="245" y="421" width="1" height="1" fill="#e0e8ff" />
<rect x="246" y="422" width="1" height="1" fill="#1c3c98" />
<rect x="248" y="421" width="1" height="1" fill="#e0e8ff" />
<rect x="249" y="422" width="1" height="1" fill="#1c3c98" />
<rect x="251" y="421" width="1" height="1" fill="#e0e8ff" />
<rect x="252" y="422" width="1" height="1" fill="#1c3c98" />
<rect x="254" y="421" width="1" height="1" fill="#e0e8ff" />
<rect x="255" y="422" width="1" height="1" fill="#1c3c98" />
<rect x="257" y="421" width="1" height="1" fill="#e0e8ff" />
<rect x="258" y="422" width="1" height="1" fill="#1c3c98" />
<rect x="260" y="421" width="1" height="1" fill="#e0e8ff" />
<rect x="261" y="422" width="1" height="1" fill="#1c3c98" />
<rect x="263" y="421" width="1" height="1" fill="#e0e8ff" />
<rect x="264" y="422" width="1" height="1" fill="#1c3c98" />
<rect x="266" y="421" width="1" height="1" fill="#e0e8ff" />
<rect x="267" y="422" width="1" height="1" fill="#1c3c98" />
<rect x="269" y="421" width="1" height="1" fill="#e0e8ff" />
<rect x="270" y="422" width="1" height="1" fill="#1c3c98" />
<rect x="272" y="421" width="1" height="1" fill="#e0e8ff" />
<rect x="273" y="422" width="1" height="1" fill="#1c3c98" />
<rect x="275" y="421" width="1" height="1" fill="#e0e8ff" />
<rect x="276" y="422" width="1" height="1" fill="#1c3c98" />
<rect x="278" y="421" width="1" height="1" fill="#e0e8ff" />
<rect x="279" y="422" width="1" height="1" fill="#1c3c98" />
<rect x="281" y="421" width="1" height="1" fill="#e0e8ff" />
<rect x="282" y="422" width="1" height="1" fill="#1c3c98" />
<rect x="284" y="421" width="1" height="1" fill="#e0e8ff" />
<rect x="285" y="422" width="1" height="1" fill="#1c3c98" />
<rect x="287" y="421" width="1" height="1" fill="#e0e8ff" />
<rect x="288" y="422" width="1" height="1" fill="#1c3c98" />
<rect x="290" y="421" width="1" height="1" fill="#e0e8ff" />
<rect x="291" y="422" width="1" height="1" fill="#1c3c98" />
<rect x="293" y="421" width="1" height="1" fill="#e0e8ff" />
<rect x="294" y="422" width="1" height="1" fill="#1c3c98" />
<rect x="296" y="421" width="1" height="1" fill="#e0e8ff" />
<rect x="297" y="422" width="1" height="1" fill="#1c3c98" />
<rect x="299" y="421" width="1" height="1" fill="#e0e8ff" />
<rect x="300" y="422" width="1" height="1" fill="#1c3c98" />
<rect x="302" y="421" width="1" height="1" fill="#e0e8ff" />
<rect x="303" y="422" width="1" height="1" fill="#1c3c98" />
<rect x="305" y="421" width="1" height="1" fill="#e0e8ff" />
<rect x="306" y="422" width="1" height="1" fill="#1c3c98" />
<rect x="308" y="421" width="1" height="1" fill="#e0e8ff" />
<rect x="309" y="422" width="1" height="1" fill="#1c3c98" />
<rect x="311" y="421" width="1" height="1" fill="#e0e8ff" />
<rect x="312" y="422" width="1" height="1" fill="#1c3c98" />
<rect x="314" y="421" width="1" height="1" fill="#e0e8ff" />
<rect x="315" y="422" width="1" height="1" fill="#1c3c98" />
<rect x="317" y="421" width="1" height="1" fill="#e0e8ff" />
<rect x="318" y="422" width="1" height="1" fill="#1c3c98" />
<rect x="320" y="421" width="1" height="1" fill="#e0e8ff" />
<rect x="321" y="422" width="1" height="1" fill="#1c3c98" />
<rect x="323" y="421" width="1" height="1" fill="#e0e8ff" />
<rect x="324" y="422" width="1" height="1" fill="#1c3c98" />
<rect x="326" y="421" width="1" height="1" fill="#e0e8ff" />
<rect x="327" y="422" width="1" height="1" fill="#1c3c98" />
<rect x="329" y="421" width="1" height="1" fill="#e0e8ff" />
<rect x="330" y="422" width="1" height="1" fill="#1c3c98" />
<rect x="332" y="421" width="1" height="1" fill="#e0e8ff" />
<rect x="333" y="422" width="1" height="1" fill="#1c3c98" />
<rect x="335" y="421" width="1" height="1" fill="#e0e8ff" />
<rect x="336" y="422" width="1" height="1" fill="#1c3c98" />
<rect x="338" y="421" width="1" height="1" fill="#e0e8ff" />
<rect x="339" y="422" width="1" height="1" fill="#1c3c98" />
<rect x="341" y="421" width="1" height="1" fill="#e0e8ff" />
<rect x="342" y="422" width="1" height="1" fill="#1c3c98" />
<rect x="344" y="421" width="1" height="1" fill="#e0e8ff" />
<rect x="345" y="422" width="1" height="1" fill="#1c3c98" />
<rect x="347" y="421" width="1" height="1" fill="#e0e8ff" />
<rect x="348" y="422" width="1" height="1" fill="#1c3c98" />
<rect x="350" y="421" width="1" height="1" fill="#e0e8ff" />
<rect x="351" y="422" width="1" height="1" fill="#1c3c98" />
<rect x="353" y="421" width="1" height="1" fill="#e0e8ff" />
<rect x="354" y="422" width="1" height="1" fill="#1c3c98" />
<rect x="356" y="421" width="1" height="1" fill="#e0e8ff" />
<rect x="357" y="422" width="1" height="1" fill="#1c3c98" />
<rect x="359" y="421" width="1" height="1" fill="#e0e8ff" />
<rect x="360" y="422" width="1" height="1" fill="#1c3c98" />
<rect x="362" y="421" width="1" height="1" fill="#e0e8ff" />
<rect x="363" y="422" width="1" height="1" fill="#1c3c98" />
<rect x="365" y="421" width="1" height="1" fill="#e0e8ff" />
<rect x="366" y="422" width="1" height="1" fill="#1c3c98" />
<rect x="368" y="421" width="1" height="1" fill="#e0e8ff" />
<rect x="369" y="422" width="1" height="1" fill="#1c3c98" />
<rect x="371" y="421" width="1" height="1" fill="#e0e8ff" />
<rect x="372" y="422" width="1" height="1" fill="#1c3c98" />
<rect x="374" y="421" width="1" height="1" fill="#e0e8ff" />
<rect x="375" y="422" width="1" height="1" fill="#1c3c98" />
<rect x="377" y="421" width="1" height="1" fill="#e0e8ff" />
<rect x="378" y="422" width="1" height="1" fill="#1c3c98" />
<rect x="149" y="425" width="1" height="1" fill="#e0e8ff" />
<rect x="150" y="426" width="1" height="1" fill="#1c3c98" />
<rect x="152" y="425" width="1" height="1" fill="#e0e8ff" />
<rect x="153" y="426" width="1" height="1" fill="#1c3c98" />
<rect x="155" y="425" width="1" height="1" fill="#e0e8ff" />
<rect x="156" y="426" width="1" height="1" fill="#1c3c98" />
<rect x="158" y="425" width="1" height="1" fill="#e0e8ff" />
<rect x="159" y="426" width="1" height="1" fill="#1c3c98" />
<rect x="161" y="425" width="1" height="1" fill="#e0e8ff" />
<rect x="162" y="426" width="1" height="1" fill="#1c3c98" />
<rect x="164" y="425" width="1" height="1" fill="#e0e8ff" />
<rect x="165" y="426" width="1" height="1" fill="#1c3c98" />
<rect x="167" y="425" width="1" height="1" fill="#e0e8ff" />
<rect x="168" y="426" width="1" height="1" fill="#1c3c98" />
<rect x="170" y="425" width="1" height="1" fill="#e0e8ff" />
<rect x="171" y="426" width="1" height="1" fill="#1c3c98" />
<rect x="173" y="425" width="1" height="1" fill="#e0e8ff" />
<rect x="174" y="426" width="1" height="1" fill="#1c3c98" />
<rect x="176" y="425" width="1" height="1" fill="#e0e8ff" />
<rect x="177" y="426" width="1" height="1" fill="#1c3c98" />
<rect x="179" y="425" width="1" height="1" fill="#e0e8ff" />
<rect x="180" y="426" width="1" height="1" fill="#1c3c98" />
<rect x="182" y="425" width="1" height="1" fill="#e0e8ff" />
<rect x="183" y="426" width="1" height="1" fill="#1c3c98" />
<rect x="185" y="425" width="1" height="1" fill="#e0e8ff" />
<rect x="186" y="426" width="1" height="1" fill="#1c3c98" />
<rect x="188" y="425" width="1" height="1" fill="#e0e8ff" />
<rect x="189" y="426" width="1" height="1" fill="#1c3c98" />
<rect x="191" y="425" width="1" height="1" fill="#e0e8ff" />
<rect x="192" y="426" width="1" height="1" fill="#1c3c98" />
<rect x="194" y="425" width="1" height="1" fill="#e0e8ff" />
<rect x="195" y="426" width="1" height="1" fill="#1c3c98" />
<rect x="197" y="425" width="1" height="1" fill="#e0e8ff" />
<rect x="198" y="426" width="1" height="1" fill="#1c3c98" />
<rect x="200" y="425" width="1" height="1" fill="#e0e8ff" />
<rect x="201" y="426" width="1" height="1" fill="#1c3c98" />
<rect x="203" y="425" width="1" height="1" fill="#e0e8ff" />
<rect x="204" y="426" width="1" height="1" fill="#1c3c98" />
<rect x="206" y="425" width="1" height="1" fill="#e0e8ff" />
<rect x="207" y="426" width="1" height="1" fill="#1c3c98" />
<rect x="209" y="425" width="1" height="1" fill="#e0e8ff" />
<rect x="210" y="426" width="1" height="1" fill="#1c3c98" />
<rect x="212" y="425" width="1" height="1" fill="#e0e8ff" />
<rect x="213" y="426" width="1" height="1" fill="#1c3c98" />
<rect x="215" y="425" width="1" height="1" fill="#e0e8ff" />
<rect x="216" y="426" width="1" height="1" fill="#1c3c98" />
<rect x="218" y="425" width="1" height="1" fill="#e0e8ff" />
<rect x="219" y="426" width="1" height="1" fill="#1c3c98" />
<rect x="221" y="425" width="1" height="1" fill="#e0e8ff" />
<rect x="222" y="426" width="1" height="1" fill="#1c3c98" />
<rect x="224" y="425" width="1" height="1" fill="#e0e8ff" />
<rect x="225" y="426" width="1" height="1" fill="#1c3c98" />
<rect x="227" y="425" width="1" height="1" fill="#e0e8ff" />
<rect x="228" y="426" width="1" height="1" fill="#1c3c98" />
<rect x="230" y="425" width="1" height="1" fill="#e0e8ff" />
<rect x="231" y="426" width="1" height="1" fill="#1c3c98" />
<rect x="233" y="425" width="1" height="1" fill="#e0e8ff" />
<rect x="234" y="426" width="1" height="1" fill="#1c3c98" />
<rect x="236" y="425" width="1" height="1" fill="#e0e8ff" />
<rect x="237" y="426" width="1" height="1" fill="#1c3c98" />
<rect x="239" y="425" width="1" height="1" fill="#e0e8ff" />
<rect x="240" y="426" width="1" height="1" fill="#1c3c98" />
<rect x="242" y="425" width="1" height="1" fill="#e0e8ff" />
<rect x="243" y="426" width="1" height="1" fill="#1c3c98" />
<rect x="245" y="425" width="1" height="1" fill="#e0e8ff" />
<rect x="246" y="426" width="1" height="1" fill="#1c3c98" />
<rect x="248" y="425" width="1" height="1" fill="#e0e8ff" />
<rect x="249" y="426" width="1" height="1" fill="#1c3c98" />
<rect x="251" y="425" width="1" height="1" fill="#e0e8ff" />
<rect x="252" y="426" width="1" height="1" fill="#1c3c98" />
<rect x="254" y="425" width="1" height="1" fill="#e0e8ff" />
<rect x="255" y="426" width="1" height="1" fill="#1c3c98" />
<rect x="257" y="425" width="1" height="1" fill="#e0e8ff" />
<rect x="258" y="426" width="1" height="1" fill="#1c3c98" />
<rect x="260" y="425" width="1" height="1" fill="#e0e8ff" />
<rect x="261" y="426" width="1" height="1" fill="#1c3c98" />
<rect x="263" y="425" width="1" height="1" fill="#e0e8ff" />
<rect x="264" y="426" width="1" height="1" fill="#1c3c98" />
<rect x="266" y="425" width="1" height="1" fill="#e0e8ff" />
<rect x="267" y="426" width="1" height="1" fill="#1c3c98" />
<rect x="269" y="425" width="1" height="1" fill="#e0e8ff" />
<rect x="270" y="426" width="1" height="1" fill="#1c3c98" />
<rect x="272" y="425" width="1" height="1" fill="#e0e8ff" />
<rect x="273" y="426" width="1" height="1" fill="#1c3c98" />
<rect x="275" y="425" width="1" height="1" fill="#e0e8ff" />
<rect x="276" y="426" width="1" height="1" fill="#1c3c98" />
<rect x="278" y="425" width="1" height="1" fill="#e0e8ff" />
<rect x="279" y="426" width="1" height="1" fill="#1c3c98" />
<rect x="281" y="425" width="1" height="1" fill="#e0e8ff" />
<rect x="282" y="426" width="1" height="1" fill="#1c3c98" />
<rect x="284" y="425" width="1" height="1" fill="#e0e8ff" />
<rect x="285" y="426" width="1" height="1" fill="#1c3c98" />
<rect x="287" y="425" width="1" height="1" fill="#e0e8ff" />
<rect x="288" y="426" width="1" height="1" fill="#1c3c98" />
<rect x="290" y="425" width="1" height="1" fill="#e0e8ff" />
<rect x="291" y="426" width="1" height="1" fill="#1c3c98" />
<rect x="293" y="425" width="1" height="1" fill="#e0e8ff" />
<rect x="294" y="426" width="1" height="1" fill="#1c3c98" />
<rect x="296" y="425" width="1" height="1" fill="#e0e8ff" />
<rect x="297" y="426" width="1" height="1" fill="#1c3c98" />
<rect x="299" y="425" width="1" height="1" fill="#e0e8ff" />
<rect x="300" y="426" width="1" height="1" fill="#1c3c98" />
<rect x="302" y="425" width="1" height="1" fill="#e0e8ff" />
<rect x="303" y="426" width="1" height="1" fill="#1c3c98" />
<rect x="305" y="425" width="1" height="1" fill="#e0e8ff" />
<rect x="306" y="426" width="1" height="1" fill="#1c3c98" />
<rect x="308" y="425" width="1" height="1" fill="#e0e8ff" />
<rect x="309" y="426" width="1" height="1" fill="#1c3c98" />
<rect x="311" y="425" width="1" height="1" fill="#e0e8ff" />
<rect x="312" y="426" width="1" height="1" fill="#1c3c98" />
<rect x="314" y="425" width="1" height="1" fill="#e0e8ff" />
<rect x="315" y="426" width="1" height="1" fill="#1c3c98" />
<rect x="317" y="425" width="1" height="1" fill="#e0e8ff" />
<rect x="318" y="426" width="1" height="1" fill="#1c3c98" />
<rect x="320" y="425" width="1" height="1" fill="#e0e8ff" />
<rect x="321" y="426" width="1" height="1" fill="#1c3c98" />
<rect x="323" y="425" width="1" height="1" fill="#e0e8ff" />
<rect x="324" y="426" width="1" height="1" fill="#1c3c98" />
<rect x="326" y="425" width="1" height="1" fill="#e0e8ff" />
<rect x="327" y="426" width="1" height="1" fill="#1c3c98" />
<rect x="329" y="425" width="1" height="1" fill="#e0e8ff" />
<rect x="330" y="426" width="1" height="1" fill="#1c3c98" />
<rect x="332" y="425" width="1" height="1" fill="#e0e8ff" />
<rect x="333" y="426" width="1" height="1" fill="#1c3c98" />
<rect x="335" y="425" width="1" height="1" fill="#e0e8ff" />
<rect x="336" y="426" width="1" height="1" fill="#1c3c98" />
<rect x="338" y="425" width="1" height="1" fill="#e0e8ff" />
<rect x="339" y="426" width="1" height="1" fill="#1c3c98" />
<rect x="341" y="425" width="1" height="1" fill="#e0e8ff" />
<rect x="342" y="426" width="1" height="1" fill="#1c3c98" />
<rect x="344" y="425" width="1" height="1" fill="#e0e8ff" />
<rect x="345" y="426" width="1" height="1" fill="#1c3c98" />
<rect x="347" y="425" width="1" height="1" fill="#e0e8ff" />
<rect x="348" y="426" width="1" height="1" fill="#1c3c98" />
<rect x="350" y="425" width="1" height="1" fill="#e0e8ff" />
<rect x="351" y="426" width="1" height="1" fill="#1c3c98" />
<rect x="353" y="425" width="1" height="1" fill="#e0e8ff" />
<rect x="354" y="426" width="1" height="1" fill="#1c3c98" />
<rect x="356" y="425" width="1" height="1" fill="#e0e8ff" />
<rect x="357" y="426" width="1" height="1" fill="#1c3c98" />
<rect x="359" y="425" width="1" height="1" fill="#e0e8ff" />
<rect x="360" y="426" width="1" height="1" fill="#1c3c98" />
<rect x="362" y="425" width="1" height="1" fill="#e0e8ff" />
<rect x="363" y="426" width="1" height="1" fill="#1c3c98" />
<rect x="365" y="425" width="1" height="1" fill="#e0e8ff" />
<rect x="366" y="426" width="1" height="1" fill="#1c3c98" />
<rect x="368" y="425" width="1" height="1" fill="#e0e8ff" />
<rect x="369" y="426" width="1" height="1" fill="#1c3c98" />
<rect x="371" y="425" width="1" height="1" fill="#e0e8ff" />
<rect x="372" y="426" width="1" height="1" fill="#1c3c98" />
<rect x="374" y="425" width="1" height="1" fill="#e0e8ff" />
<rect x="375" y="426" width="1" height="1" fill="#1c3c98" />
<rect x="377" y="425" width="1" height="1" fill="#e0e8ff" />
<rect x="378" y="426" width="1" height="1" fill="#1c3c98" />
<rect x="149" y="429" width="1" height="1" fill="#e0e8ff" />
<rect x="150" y="430" width="1" height="1" fill="#1c3c98" />
<rect x="152" y="429" width="1" height="1" fill="#e0e8ff" />
<rect x="153" y="430" width="1" height="1" fill="#1c3c98" />
<rect x="155" y="429" width="1" height="1" fill="#e0e8ff" />
<rect x="156" y="430" width="1" height="1" fill="#1c3c98" />
<rect x="158" y="429" width="1" height="1" fill="#e0e8ff" />
<rect x="159" y="430" width="1" height="1" fill="#1c3c98" />
<rect x="161" y="429" width="1" height="1" fill="#e0e8ff" />
<rect x="162" y="430" width="1" height="1" fill="#1c3c98" />
<rect x="164" y="429" width="1" height="1" fill="#e0e8ff" />
<rect x="165" y="430" width="1" height="1" fill="#1c3c98" />
<rect x="167" y="429" width="1" height="1" fill="#e0e8ff" />
<rect x="168" y="430" width="1" height="1" fill="#1c3c98" />
<rect x="170" y="429" width="1" height="1" fill="#e0e8ff" />
<rect x="171" y="430" width="1" height="1" fill="#1c3c98" />
<rect x="173" y="429" width="1" height="1" fill="#e0e8ff" />
<rect x="174" y="430" width="1" height="1" fill="#1c3c98" />
<rect x="176" y="429" width="1" height="1" fill="#e0e8ff" />
<rect x="177" y="430" width="1" height="1" fill="#1c3c98" />
<rect x="179" y="429" width="1" height="1" fill="#e0e8ff" />
<rect x="180" y="430" width="1" height="1" fill="#1c3c98" />
<rect x="182" y="429" width="1" height="1" fill="#e0e8ff" />
<rect x="183" y="430" width="1" height="1" fill="#1c3c98" />
<rect x="185" y="429" width="1" height="1" fill="#e0e8ff" />
<rect x="186" y="430" width="1" height="1" fill="#1c3c98" />
<rect x="188" y="429" width="1" height="1" fill="#e0e8ff" />
<rect x="189" y="430" width="1" height="1" fill="#1c3c98" />
<rect x="191" y="429" width="1" height="1" fill="#e0e8ff" />
<rect x="192" y="430" width="1" height="1" fill="#1c3c98" />
<rect x="194" y="429" width="1" height="1" fill="#e0e8ff" />
<rect x="195" y="430" width="1" height="1" fill="#1c3c98" />
<rect x="197" y="429" width="1" height="1" fill="#e0e8ff" />
<rect x="198" y="430" width="1" height="1" fill="#1c3c98" />
<rect x="200" y="429" width="1" height="1" fill="#e0e8ff" />
<rect x="201" y="430" width="1" height="1" fill="#1c3c98" />
<rect x="203" y="429" width="1" height="1" fill="#e0e8ff" />
<rect x="204" y="430" width="1" height="1" fill="#1c3c98" />
<rect x="206" y="429" width="1" height="1" fill="#e0e8ff" />
<rect x="207" y="430" width="1" height="1" fill="#1c3c98" />
<rect x="209" y="429" width="1" height="1" fill="#e0e8ff" />
<rect x="210" y="430" width="1" height="1" fill="#1c3c98" />
<rect x="212" y="429" width="1" height="1" fill="#e0e8ff" />
<rect x="213" y="430" width="1" height="1" fill="#1c3c98" />
<rect x="215" y="429" width="1" height="1" fill="#e0e8ff" />
<rect x="216" y="430" width="1" height="1" fill="#1c3c98" />
<rect x="218" y="429" width="1" height="1" fill="#e0e8ff" />
<rect x="219" y="430" width="1" height="1" fill="#1c3c98" />
<rect x="221" y="429" width="1" height="1" fill="#e0e8ff" />
<rect x="222" y="430" width="1" height="1" fill="#1c3c98" />
<rect x="224" y="429" width="1" height="1" fill="#e0e8ff" />
<rect x="225" y="430" width="1" height="1" fill="#1c3c98" />
<rect x="227" y="429" width="1" height="1" fill="#e0e8ff" />
<rect x="228" y="430" width="1" height="1" fill="#1c3c98" />
<rect x="230" y="429" width="1" height="1" fill="#e0e8ff" />
<rect x="231" y="430" width="1" height="1" fill="#1c3c98" />
<rect x="233" y="429" width="1" height="1" fill="#e0e8ff" />
<rect x="234" y="430" width="1" height="1" fill="#1c3c98" />
<rect x="236" y="429" width="1" height="1" fill="#e0e8ff" />
<rect x="237" y="430" width="1" height="1" fill="#1c3c98" />
<rect x="239" y="429" width="1" height="1" fill="#e0e8ff" />
<rect x="240" y="430" width="1" height="1" fill="#1c3c98" />
<rect x="242" y="429" width="1" height="1" fill="#e0e8ff" />
<rect x="243" y="430" width="1" height="1" fill="#1c3c98" />
<rect x="245" y="429" width="1" height="1" fill="#e0e8ff" />
<rect x="246" y="430" width="1" height="1" fill="#1c3c98" />
<rect x="248" y="429" width="1" height="1" fill="#e0e8ff" />
<rect x="249" y="430" width="1" height="1" fill="#1c3c98" />
<rect x="251" y="429" width="1" height="1" fill="#e0e8ff" />
<rect x="252" y="430" width="1" height="1" fill="#1c3c98" />
<rect x="254" y="429" width="1" height="1" fill="#e0e8ff" />
<rect x="255" y="430" width="1" height="1" fill="#1c3c98" />
<rect x="257" y="429" width="1" height="1" fill="#e0e8ff" />
<rect x="258" y="430" width="1" height="1" fill="#1c3c98" />
<rect x="260" y="429" width="1" height="1" fill="#e0e8ff" />
<rect x="261" y="430" width="1" height="1" fill="#1c3c98" />
<rect x="263" y="429" width="1" height="1" fill="#e0e8ff" />
<rect x="264" y="430" width="1" height="1" fill="#1c3c98" />
<rect x="266" y="429" width="1" height="1" fill="#e0e8ff" />
<rect x="267" y="430" width="1" height="1" fill="#1c3c98" />
<rect x="269" y="429" width="1" height="1" fill="#e0e8ff" />
<rect x="270" y="430" width="1" height="1" fill="#1c3c98" />
<rect x="272" y="429" width="1" height="1" fill="#e0e8ff" />
<rect x="273" y="430" width="1" height="1" fill="#1c3c98" />
<rect x="275" y="429" width="1" height="1" fill="#e0e8ff" />
<rect x="276" y="430" width="1" height="1" fill="#1c3c98" />
<rect x="278" y="429" width="1" height="1" fill="#e0e8ff" />
<rect x="279" y="430" width="1" height="1" fill="#1c3c98" />
<rect x="281" y="429" width="1" height="1" fill="#e0e8ff" />
<rect x="282" y="430" width="1" height="1" fill="#1c3c98" />
<rect x="284" y="429" width="1" height="1" fill="#e0e8ff" />
<rect x="285" y="430" width="1" height="1" fill="#1c3c98" />
<rect x="287" y="429" width="1" height="1" fill="#e0e8ff" />
<rect x="288" y="430" width="1" height="1" fill="#1c3c98" />
<rect x="290" y="429" width="1" height="1" fill="#e0e8ff" />
<rect x="291" y="430" width="1" height="1" fill="#1c3c98" />
<rect x="293" y="429" width="1" height="1" fill="#e0e8ff" />
<rect x="294" y="430" width="1" height="1" fill="#1c3c98" />
<rect x="296" y="429" width="1" height="1" fill="#e0e8ff" />
<rect x="297" y="430" width="1" height="1" fill="#1c3c98" />
<rect x="299" y="429" width="1" height="1" fill="#e0e8ff" />
<rect x="300" y="430" width="1" height="1" fill="#1c3c98" />
<rect x="302" y="429" width="1" height="1" fill="#e0e8ff" />
<rect x="303" y="430" width="1" height="1" fill="#1c3c98" />
<rect x="305" y="429" width="1" height="1" fill="#e0e8ff" />
<rect x="306" y="430" width="1" height="1" fill="#1c3c98" />
<rect x="308" y="429" width="1" height="1" fill="#e0e8ff" />
<rect x="309" y="430" width="1" height="1" fill="#1c3c98" />
<rect x="311" y="429" width="1" height="1" fill="#e0e8ff" />
<rect x="312" y="430" width="1" height="1" fill="#1c3c98" />
<rect x="314" y="429" width="1" height="1" fill="#e0e8ff" />
<rect x="315" y="430" width="1" height="1" fill="#1c3c98" />
<rect x="317" y="429" width="1" height="1" fill="#e0e8ff" />
<rect x="318" y="430" width="1" height="1" fill="#1c3c98" />
<rect x="320" y="429" width="1" height="1" fill="#e0e8ff" />
<rect x="321" y="430" width="1" height="1" fill="#1c3c98" />
<rect x="323" y="429" width="1" height="1" fill="#e0e8ff" />
<rect x="324" y="430" width="1" height="1" fill="#1c3c98" />
<rect x="326" y="429" width="1" height="1" fill="#e0e8ff" />
<rect x="327" y="430" width="1" height="1" fill="#1c3c98" />
<rect x="329" y="429" width="1" height="1" fill="#e0e8ff" />
<rect x="330" y="430" width="1" height="1" fill="#1c3c98" />
<rect x="332" y="429" width="1" height="1" fill="#e0e8ff" />
<rect x="333" y="430" width="1" height="1" fill="#1c3c98" />
<rect x="335" y="429" width="1" height="1" fill="#e0e8ff" />
<rect x="336" y="430" width="1" height="1" fill="#1c3c98" />
<rect x="338" y="429" width="1" height="1" fill="#e0e8ff" />
<rect x="339" y="430" width="1" height="1" fill="#1c3c98" />
<rect x="341" y="429" width="1" height="1" fill="#e0e8ff" />
<rect x="342" y="430" width="1" height="1" fill="#1c3c98" />
<rect x="344" y="429" width="1" height="1" fill="#e0e8ff" />
<rect x="345" y="430" width="1" height="1" fill="#1c3c98" />
<rect x="347" y="429" width="1" height="1" fill="#e0e8ff" />
<rect x="348" y="430" width="1" height="1" fill="#1c3c98" />
<rect x="350" y="429" width="1" height="1" fill="#e0e8ff" />
<rect x="351" y="430" width="1" height="1" fill="#1c3c98" />
<rect x="353" y="429" width="1" height="1" fill="#e0e8ff" />
<rect x="354" y="430" width="1" height="1" fill="#1c3c98" />
<rect x="356" y="429" width="1" height="1" fill="#e0e8ff" />
<rect x="357" y="430" width="1" height="1" fill="#1c3c98" />
<rect x="359" y="429" width="1" height="1" fill="#e0e8ff" />
<rect x="360" y="430" width="1" height="1" fill="#1c3c98" />
<rect x="362" y="429" width="1" height="1" fill="#e0e8ff" />
<rect x="363" y="430" width="1" height="1" fill="#1c3c98" />
<rect x="365" y="429" width="1" height="1" fill="#e0e8ff" />
<rect x="366" y="430" width="1" height="1" fill="#1c3c98" />
<rect x="368" y="429" width="1" height="1" fill="#e0e8ff" />
<rect x="369" y="430" width="1" height="1" fill="#1c3c98" />
<rect x="371" y="429" width="1" height="1" fill="#e0e8ff" />
<rect x="372" y="430" width="1" height="1" fill="#1c3c98" />
<rect x="374" y="429" width="1" height="1" fill="#e0e8ff" />
<rect x="375" y="430" width="1" height="1" fill="#1c3c98" />
<rect x="377" y="429" width="1" height="1" fill="#e0e8ff" />
<rect x="378" y="430" width="1" height="1" fill="#1c3c98" />
<rect x="149" y="433" width="1" height="1" fill="#e0e8ff" />
<rect x="150" y="434" width="1" height="1" fill="#1c3c98" />
<rect x="152" y="433" width="1" height="1" fill="#e0e8ff" />
<rect x="153" y="434" width="1" height="1" fill="#1c3c98" />
<rect x="155" y="433" width="1" height="1" fill="#e0e8ff" />
<rect x="156" y="434" width="1" height="1" fill="#1c3c98" />
<rect x="158" y="433" width="1" height="1" fill="#e0e8ff" />
<rect x="159" y="434" width="1" height="1" fill="#1c3c98" />
<rect x="161" y="433" width="1" height="1" fill="#e0e8ff" />
<rect x="162" y="434" width="1" height="1" fill="#1c3c98" />
<rect x="164" y="433" width="1" height="1" fill="#e0e8ff" />
<rect x="165" y="434" width="1" height="1" fill="#1c3c98" />
<rect x="167" y="433" width="1" height="1" fill="#e0e8ff" />
<rect x="168" y="434" width="1" height="1" fill="#1c3c98" />
<rect x="170" y="433" width="1" height="1" fill="#e0e8ff" />
<rect x="171" y="434" width="1" height="1" fill="#1c3c98" />
<rect x="173" y="433" width="1" height="1" fill="#e0e8ff" />
<rect x="174" y="434" width="1" height="1" fill="#1c3c98" />
<rect x="176" y="433" width="1" height="1" fill="#e0e8ff" />
<rect x="177" y="434" width="1" height="1" fill="#1c3c98" />
<rect x="179" y="433" width="1" height="1" fill="#e0e8ff" />
<rect x="180" y="434" width="1" height="1" fill="#1c3c98" />
<rect x="182" y="433" width="1" height="1" fill="#e0e8ff" />
<rect x="183" y="434" width="1" height="1" fill="#1c3c98" />
<rect x="185" y="433" width="1" height="1" fill="#e0e8ff" />
<rect x="186" y="434" width="1" height="1" fill="#1c3c98" />
<rect x="188" y="433" width="1" height="1" fill="#e0e8ff" />
<rect x="189" y="434" width="1" height="1" fill="#1c3c98" />
<rect x="191" y="433" width="1" height="1" fill="#e0e8ff" />
<rect x="192" y="434" width="1" height="1" fill="#1c3c98" />
<rect x="194" y="433" width="1" height="1" fill="#e0e8ff" />
<rect x="195" y="434" width="1" height="1" fill="#1c3c98" />
<rect x="197" y="433" width="1" height="1" fill="#e0e8ff" />
<rect x="198" y="434" width="1" height="1" fill="#1c3c98" />
<rect x="200" y="433" width="1" height="1" fill="#e0e8ff" />
<rect x="201" y="434" width="1" height="1" fill="#1c3c98" />
<rect x="203" y="433" width="1" height="1" fill="#e0e8ff" />
<rect x="204" y="434" width="1" height="1" fill="#1c3c98" />
<rect x="206" y="433" width="1" height="1" fill="#e0e8ff" />
<rect x="207" y="434" width="1" height="1" fill="#1c3c98" />
<rect x="209" y="433" width="1" height="1" fill="#e0e8ff" />
<rect x="210" y="434" width="1" height="1" fill="#1c3c98" />
<rect x="212" y="433" width="1" height="1" fill="#e0e8ff" />
<rect x="213" y="434" width="1" height="1" fill="#1c3c98" />
<rect x="215" y="433" width="1" height="1" fill="#e0e8ff" />
<rect x="216" y="434" width="1" height="1" fill="#1c3c98" />
<rect x="218" y="433" width="1" height="1" fill="#e0e8ff" />
<rect x="219" y="434" width="1" height="1" fill="#1c3c98" />
<rect x="221" y="433" width="1" height="1" fill="#e0e8ff" />
<rect x="222" y="434" width="1" height="1" fill="#1c3c98" />
<rect x="224" y="433" width="1" height="1" fill="#e0e8ff" />
<rect x="225" y="434" width="1" height="1" fill="#1c3c98" />
<rect x="227" y="433" width="1" height="1" fill="#e0e8ff" />
<rect x="228" y="434" width="1" height="1" fill="#1c3c98" />
<rect x="230" y="433" width="1" height="1" fill="#e0e8ff" />
<rect x="231" y="434" width="1" height="1" fill="#1c3c98" />
<rect x="233" y="433" width="1" height="1" fill="#e0e8ff" />
<rect x="234" y="434" width="1" height="1" fill="#1c3c98" />
<rect x="236" y="433" width="1" height="1" fill="#e0e8ff" />
<rect x="237" y="434" width="1" height="1" fill="#1c3c98" />
<rect x="239" y="433" width="1" height="1" fill="#e0e8ff" />
<rect x="240" y="434" width="1" height="1" fill="#1c3c98" />
<rect x="242" y="433" width="1" height="1" fill="#e0e8ff" />
<rect x="243" y="434" width="1" height="1" fill="#1c3c98" />
<rect x="245" y="433" width="1" height="1" fill="#e0e8ff" />
<rect x="246" y="434" width="1" height="1" fill="#1c3c98" />
<rect x="248" y="433" width="1" height="1" fill="#e0e8ff" />
<rect x="249" y="434" width="1" height="1" fill="#1c3c98" />
<rect x="251" y="433" width="1" height="1" fill="#e0e8ff" />
<rect x="252" y="434" width="1" height="1" fill="#1c3c98" />
<rect x="254" y="433" width="1" height="1" fill="#e0e8ff" />
<rect x="255" y="434" width="1" height="1" fill="#1c3c98" />
<rect x="257" y="433" width="1" height="1" fill="#e0e8ff" />
<rect x="258" y="434" width="1" height="1" fill="#1c3c98" />
<rect x="260" y="433" width="1" height="1" fill="#e0e8ff" />
<rect x="261" y="434" width="1" height="1" fill="#1c3c98" />
<rect x="263" y="433" width="1" height="1" fill="#e0e8ff" />
<rect x="264" y="434" width="1" height="1" fill="#1c3c98" />
<rect x="266" y="433" width="1" height="1" fill="#e0e8ff" />
<rect x="267" y="434" width="1" height="1" fill="#1c3c98" />
<rect x="269" y="433" width="1" height="1" fill="#e0e8ff" />
<rect x="270" y="434" width="1" height="1" fill="#1c3c98" />
<rect x="272" y="433" width="1" height="1" fill="#e0e8ff" />
<rect x="273" y="434" width="1" height="1" fill="#1c3c98" />
<rect x="275" y="433" width="1" height="1" fill="#e0e8ff" />
<rect x="276" y="434" width="1" height="1" fill="#1c3c98" />
<rect x="278" y="433" width="1" height="1" fill="#e0e8ff" />
<rect x="279" y="434" width="1" height="1" fill="#1c3c98" />
<rect x="281" y="433" width="1" height="1" fill="#e0e8ff" />
<rect x="282" y="434" width="1" height="1" fill="#1c3c98" />
<rect x="284" y="433" width="1" height="1" fill="#e0e8ff" />
<rect x="285" y="434" width="1" height="1" fill="#1c3c98" />
<rect x="287" y="433" width="1" height="1" fill="#e0e8ff" />
<rect x="288" y="434" width="1" height="1" fill="#1c3c98" />
<rect x="290" y="433" width="1" height="1" fill="#e0e8ff" />
<rect x="291" y="434" width="1" height="1" fill="#1c3c98" />
<rect x="293" y="433" width="1" height="1" fill="#e0e8ff" />
<rect x="294" y="434" width="1" height="1" fill="#1c3c98" />
<rect x="296" y="433" width="1" height="1" fill="#e0e8ff" />
<rect x="297" y="434" width="1" height="1" fill="#1c3c98" />
<rect x="299" y="433" width="1" height="1" fill="#e0e8ff" />
<rect x="300" y="434" width="1" height="1" fill="#1c3c98" />
<rect x="302" y="433" width="1" height="1" fill="#e0e8ff" />
<rect x="303" y="434" width="1" height="1" fill="#1c3c98" />
<rect x="305" y="433" width="1" height="1" fill="#e0e8ff" />
<rect x="306" y="434" width="1" height="1" fill="#1c3c98" />
<rect x="308" y="433" width="1" height="1" fill="#e0e8ff" />
<rect x="309" y="434" width="1" height="1" fill="#1c3c98" />
<rect x="311" y="433" width="1" height="1" fill="#e0e8ff" />
<rect x="312" y="434" width="1" height="1" fill="#1c3c98" />
<rect x="314" y="433" width="1" height="1" fill="#e0e8ff" />
<rect x="315" y="434" width="1" height="1" fill="#1c3c98" />
<rect x="317" y="433" width="1" height="1" fill="#e0e8ff" />
<rect x="318" y="434" width="1" height="1" fill="#1c3c98" />
<rect x="320" y="433" width="1" height="1" fill="#e0e8ff" />
<rect x="321" y="434" width="1" height="1" fill="#1c3c98" />
<rect x="323" y="433" width="1" height="1" fill="#e0e8ff" />
<rect x="324" y="434" width="1" height="1" fill="#1c3c98" />
<rect x="326" y="433" width="1" height="1" fill="#e0e8ff" />
<rect x="327" y="434" width="1" height="1" fill="#1c3c98" />
<rect x="329" y="433" width="1" height="1" fill="#e0e8ff" />
<rect x="330" y="434" width="1" height="1" fill="#1c3c98" />
<rect x="332" y="433" width="1" height="1" fill="#e0e8ff" />
<rect x="333" y="434" width="1" height="1" fill="#1c3c98" />
<rect x="335" y="433" width="1" height="1" fill="#e0e8ff" />
<rect x="336" y="434" width="1" height="1" fill="#1c3c98" />
<rect x="338" y="433" width="1" height="1" fill="#e0e8ff" />
<rect x="339" y="434" width="1" height="1" fill="#1c3c98" />
<rect x="341" y="433" width="1" height="1" fill="#e0e8ff" />
<rect x="342" y="434" width="1" height="1" fill="#1c3c98" />
<rect x="344" y="433" width="1" height="1" fill="#e0e8ff" />
<rect x="345" y="434" width="1" height="1" fill="#1c3c98" />
<rect x="347" y="433" width="1" height="1" fill="#e0e8ff" />
<rect x="348" y="434" width="1" height="1" fill="#1c3c98" />
<rect x="350" y="433" width="1" height="1" fill="#e0e8ff" />
<rect x="351" y="434" width="1" height="1" fill="#1c3c98" />
<rect x="353" y="433" width="1" height="1" fill="#e0e8ff" />
<rect x="354" y="434" width="1" height="1" fill="#1c3c98" />
<rect x="356" y="433" width="1" height="1" fill="#e0e8ff" />
<rect x="357" y="434" width="1" height="1" fill="#1c3c98" />
<rect x="359" y="433" width="1" height="1" fill="#e0e8ff" />
<rect x="360" y="434" width="1" height="1" fill="#1c3c98" />
<rect x="362" y="433" width="1" height="1" fill="#e0e8ff" />
<rect x="363" y="434" width="1" height="1" fill="#1c3c98" />
<rect x="365" y="433" width="1" height="1" fill="#e0e8ff" />
<rect x="366" y="434" width="1" height="1" fill="#1c3c98" />
<rect x="368" y="433" width="1" height="1" fill="#e0e8ff" />
<rect x="369" y="434" width="1" height="1" fill="#1c3c98" />
<rect x="371" y="433" width="1" height="1" fill="#e0e8ff" />
<rect x="372" y="434" width="1" height="1" fill="#1c3c98" />
<rect x="374" y="433" width="1" height="1" fill="#e0e8ff" />
<rect x="375" y="434" width="1" height="1" fill="#1c3c98" />
<rect x="377" y="433" width="1" height="1" fill="#e0e8ff" />
<rect x="378" y="434" width="1" height="1" fill="#1c3c98" />
<rect x="149" y="437" width="1" height="1" fill="#e0e8ff" />
<rect x="150" y="438" width="1" height="1" fill="#1c3c98" />
<rect x="152" y="437" width="1" height="1" fill="#e0e8ff" />
<rect x="153" y="438" width="1" height="1" fill="#1c3c98" />
<rect x="155" y="437" width="1" height="1" fill="#e0e8ff" />
<rect x="156" y="438" width="1" height="1" fill="#1c3c98" />
<rect x="158" y="437" width="1" height="1" fill="#e0e8ff" />
<rect x="159" y="438" width="1" height="1" fill="#1c3c98" />
<rect x="161" y="437" width="1" height="1" fill="#e0e8ff" />
<rect x="162" y="438" width="1" height="1" fill="#1c3c98" />
<rect x="164" y="437" width="1" height="1" fill="#e0e8ff" />
<rect x="165" y="438" width="1" height="1" fill="#1c3c98" />
<rect x="167" y="437" width="1" height="1" fill="#e0e8ff" />
<rect x="168" y="438" width="1" height="1" fill="#1c3c98" />
<rect x="170" y="437" width="1" height="1" fill="#e0e8ff" />
<rect x="171" y="438" width="1" height="1" fill="#1c3c98" />
<rect x="173" y="437" width="1" height="1" fill="#e0e8ff" />
<rect x="174" y="438" width="1" height="1" fill="#1c3c98" />
<rect x="176" y="437" width="1" height="1" fill="#e0e8ff" />
<rect x="177" y="438" width="1" height="1" fill="#1c3c98" />
<rect x="179" y="437" width="1" height="1" fill="#e0e8ff" />
<rect x="180" y="438" width="1" height="1" fill="#1c3c98" />
<rect x="182" y="437" width="1" height="1" fill="#e0e8ff" />
<rect x="183" y="438" width="1" height="1" fill="#1c3c98" />
<rect x="185" y="437" width="1" height="1" fill="#e0e8ff" />
<rect x="186" y="438" width="1" height="1" fill="#1c3c98" />
<rect x="188" y="437" width="1" height="1" fill="#e0e8ff" />
<rect x="189" y="438" width="1" height="1" fill="#1c3c98" />
<rect x="191" y="437" width="1" height="1" fill="#e0e8ff" />
<rect x="192" y="438" width="1" height="1" fill="#1c3c98" />
<rect x="194" y="437" width="1" height="1" fill="#e0e8ff" />
<rect x="195" y="438" width="1" height="1" fill="#1c3c98" />
<rect x="197" y="437" width="1" height="1" fill="#e0e8ff" />
<rect x="198" y="438" width="1" height="1" fill="#1c3c98" />
<rect x="200" y="437" width="1" height="1" fill="#e0e8ff" />
<rect x="201" y="438" width="1" height="1" fill="#1c3c98" />
<rect x="203" y="437" width="1" height="1" fill="#e0e8ff" />
<rect x="204" y="438" width="1" height="1" fill="#1c3c98" />
<rect x="206" y="437" width="1" height="1" fill="#e0e8ff" />
<rect x="207" y="438" width="1" height="1" fill="#1c3c98" />
<rect x="209" y="437" width="1" height="1" fill="#e0e8ff" />
<rect x="210" y="438" width="1" height="1" fill="#1c3c98" />
<rect x="212" y="437" width="1" height="1" fill="#e0e8ff" />
<rect x="213" y="438" width="1" height="1" fill="#1c3c98" />
<rect x="215" y="437" width="1" height="1" fill="#e0e8ff" />
<rect x="216" y="438" width="1" height="1" fill="#1c3c98" />
<rect x="218" y="437" width="1" height="1" fill="#e0e8ff" />
<rect x="219" y="438" width="1" height="1" fill="#1c3c98" />
<rect x="221" y="437" width="1" height="1" fill="#e0e8ff" />
<rect x="222" y="438" width="1" height="1" fill="#1c3c98" />
<rect x="224" y="437" width="1" height="1" fill="#e0e8ff" />
<rect x="225" y="438" width="1" height="1" fill="#1c3c98" />
<rect x="227" y="437" width="1" height="1" fill="#e0e8ff" />
<rect x="228" y="438" width="1" height="1" fill="#1c3c98" />
<rect x="230" y="437" width="1" height="1" fill="#e0e8ff" />
<rect x="231" y="438" width="1" height="1" fill="#1c3c98" />
<rect x="233" y="437" width="1" height="1" fill="#e0e8ff" />
<rect x="234" y="438" width="1" height="1" fill="#1c3c98" />
<rect x="236" y="437" width="1" height="1" fill="#e0e8ff" />
<rect x="237" y="438" width="1" height="1" fill="#1c3c98" />
<rect x="239" y="437" width="1" height="1" fill="#e0e8ff" />
<rect x="240" y="438" width="1" height="1" fill="#1c3c98" />
<rect x="242" y="437" width="1" height="1" fill="#e0e8ff" />
<rect x="243" y="438" width="1" height="1" fill="#1c3c98" />
<rect x="245" y="437" width="1" height="1" fill="#e0e8ff" />
<rect x="246" y="438" width="1" height="1" fill="#1c3c98" />
<rect x="248" y="437" width="1" height="1" fill="#e0e8ff" />
<rect x="249" y="438" width="1" height="1" fill="#1c3c98" />
<rect x="251" y="437" width="1" height="1" fill="#e0e8ff" />
<rect x="252" y="438" width="1" height="1" fill="#1c3c98" />
<rect x="254" y="437" width="1" height="1" fill="#e0e8ff" />
<rect x="255" y="438" width="1" height="1" fill="#1c3c98" />
<rect x="257" y="437" width="1" height="1" fill="#e0e8ff" />
<rect x="258" y="438" width="1" height="1" fill="#1c3c98" />
<rect x="260" y="437" width="1" height="1" fill="#e0e8ff" />
<rect x="261" y="438" width="1" height="1" fill="#1c3c98" />
<rect x="263" y="437" width="1" height="1" fill="#e0e8ff" />
<rect x="264" y="438" width="1" height="1" fill="#1c3c98" />
<rect x="266" y="437" width="1" height="1" fill="#e0e8ff" />
<rect x="267" y="438" width="1" height="1" fill="#1c3c98" />
<rect x="269" y="437" width="1" height="1" fill="#e0e8ff" />
<rect x="270" y="438" width="1" height="1" fill="#1c3c98" />
<rect x="272" y="437" width="1" height="1" fill="#e0e8ff" />
<rect x="273" y="438" width="1" height="1" fill="#1c3c98" />
<rect x="275" y="437" width="1" height="1" fill="#e0e8ff" />
<rect x="276" y="438" width="1" height="1" fill="#1c3c98" />
<rect x="278" y="437" width="1" height="1" fill="#e0e8ff" />
<rect x="279" y="438" width="1" height="1" fill="#1c3c98" />
<rect x="281" y="437" width="1" height="1" fill="#e0e8ff" />
<rect x="282" y="438" width="1" height="1" fill="#1c3c98" />
<rect x="284" y="437" width="1" height="1" fill="#e0e8ff" />
<rect x="285" y="438" width="1" height="1" fill="#1c3c98" />
<rect x="287" y="437" width="1" height="1" fill="#e0e8ff" />
<rect x="288" y="438" width="1" height="1" fill="#1c3c98" />
<rect x="290" y="437" width="1" height="1" fill="#e0e8ff" />
<rect x="291" y="438" width="1" height="1" fill="#1c3c98" />
<rect x="293" y="437" width="1" height="1" fill="#e0e8ff" />
<rect x="294" y="438" width="1" height="1" fill="#1c3c98" />
<rect x="296" y="437" width="1" height="1" fill="#e0e8ff" />
<rect x="297" y="438" width="1" height="1" fill="#1c3c98" />
<rect x="299" y="437" width="1" height="1" fill="#e0e8ff" />
<rect x="300" y="438" width="1" height="1" fill="#1c3c98" />
<rect x="302" y="437" width="1" height="1" fill="#e0e8ff" />
<rect x="303" y="438" width="1" height="1" fill="#1c3c98" />
<rect x="305" y="437" width="1" height="1" fill="#e0e8ff" />
<rect x="306" y="438" width="1" height="1" fill="#1c3c98" />
<rect x="308" y="437" width="1" height="1" fill="#e0e8ff" />
<rect x="309" y="438" width="1" height="1" fill="#1c3c98" />
<rect x="311" y="437" width="1" height="1" fill="#e0e8ff" />
<rect x="312" y="438" width="1" height="1" fill="#1c3c98" />
<rect x="314" y="437" width="1" height="1" fill="#e0e8ff" />
<rect x="315" y="438" width="1" height="1" fill="#1c3c98" />
<rect x="317" y="437" width="1" height="1" fill="#e0e8ff" />
<rect x="318" y="438" width="1" height="1" fill="#1c3c98" />
<rect x="320" y="437" width="1" height="1" fill="#e0e8ff" />
<rect x="321" y="438" width="1" height="1" fill="#1c3c98" />
<rect x="323" y="437" width="1" height="1" fill="#e0e8ff" />
<rect x="324" y="438" width="1" height="1" fill="#1c3c98" />
<rect x="326" y="437" width="1" height="1" fill="#e0e8ff" />
<rect x="327" y="438" width="1" height="1" fill="#1c3c98" />
<rect x="329" y="437" width="1" height="1" fill="#e0e8ff" />
<rect x="330" y="438" width="1" height="1" fill="#1c3c98" />
<rect x="332" y="437" width="1" height="1" fill="#e0e8ff" />
<rect x="333" y="438" width="1" height="1" fill="#1c3c98" />
<rect x="335" y="437" width="1" height="1" fill="#e0e8ff" />
<rect x="336" y="438" width="1" height="1" fill="#1c3c98" />
<rect x="338" y="437" width="1" height="1" fill="#e0e8ff" />
<rect x="339" y="438" width="1" height="1" fill="#1c3c98" />
<rect x="341" y="437" width="1" height="1" fill="#e0e8ff" />
<rect x="342" y="438" width="1" height="1" fill="#1c3c98" />
<rect x="344" y="437" width="1" height="1" fill="#e0e8ff" />
<rect x="345" y="438" width="1" height="1" fill="#1c3c98" />
<rect x="347" y="437" width="1" height="1" fill="#e0e8ff" />
<rect x="348" y="438" width="1" height="1" fill="#1c3c98" />
<rect x="350" y="437" width="1" height="1" fill="#e0e8ff" />
<rect x="351" y="438" width="1" height="1" fill="#1c3c98" />
<rect x="353" y="437" width="1" height="1" fill="#e0e8ff" />
<rect x="354" y="438" width="1" height="1" fill="#1c3c98" />
<rect x="356" y="437" width="1" height="1" fill="#e0e8ff" />
<rect x="357" y="438" width="1" height="1" fill="#1c3c98" />
<rect x="359" y="437" width="1" height="1" fill="#e0e8ff" />
<rect x="360" y="438" width="1" height="1" fill="#1c3c98" />
<rect x="362" y="437" width="1" height="1" fill="#e0e8ff" />
<rect x="363" y="438" width="1" height="1" fill="#1c3c98" />
<rect x="365" y="437" width="1" height="1" fill="#e0e8ff" />
<rect x="366" y="438" width="1" height="1" fill="#1c3c98" />
<rect x="368" y="437" width="1" height="1" fill="#e0e8ff" />
<rect x="369" y="438" width="1" height="1" fill="#1c3c98" />
<rect x="371" y="437" width="1" height="1" fill="#e0e8ff" />
<rect x="372" y="438" width="1" height="1" fill="#1c3c98" />
<rect x="374" y="437" width="1" height="1" fill="#e0e8ff" />
<rect x="375" y="438" width="1" height="1" fill="#1c3c98" />
<rect x="377" y="437" width="1" height="1" fill="#e0e8ff" />
<rect x="378" y="438" width="1" height="1" fill="#1c3c98" />
<rect x="5" y="421" width="15" height="12" fill="#f0e8ec" />
<rect x="7" y="423" width="11" height="8" fill="#101010" />
<rect x="8" y="424" width="3" height="1" fill="#c0c0c0" />
<rect x="8" y="433" width="9" height="1" fill="#d8d0d4" />
<rect x="7" y="434" width="11" height="2" fill="#f0e8ec" />
<rect x="23" y="428" width="6" height="1" fill="#fff" />
<path d="M29 423H31L33 425.5H34.5L36 423H37.5V432H36L34.5 429.5H33L31 432H29Z" stroke="#000" fill="#fff" stroke-width="1.2" shape-rendering="auto"/>
<rect x="69" y="441" width="8" height="16" fill="#b834cc" />
<text x="53" y="453" font-family="Liberation Mono" font-size="13.6" fill="#cc7e24" stroke="#cc7e24" stroke-width="0.4" textLength="8" lengthAdjust="spacingAndGlyphs">1</text>
<text x="69" y="453" font-family="Liberation Mono" font-size="13.6" fill="#000" stroke="#000" stroke-width="0.4">%</text>
<text x="77" y="453" font-family="Liberation Mono" font-size="13.6" fill="#b834cc" stroke="#b834cc" stroke-width="0.4" textLength="8" lengthAdjust="spacingAndGlyphs">i</text>
<text x="93" y="453" font-family="Liberation Mono" font-size="13.6" fill="#d42a2a" stroke="#d42a2a" stroke-width="0.4" textLength="56" lengthAdjust="spacingAndGlyphs">&quot;mem.h&quot;</text>
<text x="53" y="469" font-family="Liberation Mono" font-size="13.6" fill="#cc7e24" stroke="#cc7e24" stroke-width="0.4" textLength="8" lengthAdjust="spacingAndGlyphs">2</text>
<text x="53" y="485" font-family="Liberation Mono" font-size="13.6" fill="#cc7e24" stroke="#cc7e24" stroke-width="0.4" textLength="8" lengthAdjust="spacingAndGlyphs">3</text>
<text x="69" y="485" font-family="Liberation Mono" font-size="13.6" fill="#cc7e24" stroke="#cc7e24" stroke-width="0.4" textLength="48" lengthAdjust="spacingAndGlyphs">module</text>
<text x="117" y="485" font-family="Liberation Mono" font-size="13.6" fill="#d6d6d6" stroke="#d6d6d6" stroke-width="0.4" textLength="40" lengthAdjust="spacingAndGlyphs"> cpu </text>
<text x="157" y="485" font-family="Liberation Mono" font-size="13.6" fill="#b834cc" stroke="#b834cc" stroke-width="0.4" textLength="8" lengthAdjust="spacingAndGlyphs">{</text>
<text x="53" y="501" font-family="Liberation Mono" font-size="13.6" fill="#cc7e24" stroke="#cc7e24" stroke-width="0.4" textLength="8" lengthAdjust="spacingAndGlyphs">4</text>
<text x="101" y="501" font-family="Liberation Mono" font-size="13.6" fill="#cc7e24" stroke="#cc7e24" stroke-width="0.4" textLength="40" lengthAdjust="spacingAndGlyphs">input</text>
<text x="141" y="501" font-family="Liberation Mono" font-size="13.6" fill="#d6d6d6" stroke="#d6d6d6" stroke-width="0.4" textLength="32" lengthAdjust="spacingAndGlyphs"> sw1</text>
<text x="173" y="501" font-family="Liberation Mono" font-size="13.6" fill="#b834cc" stroke="#b834cc" stroke-width="0.4" textLength="8" lengthAdjust="spacingAndGlyphs">&lt;</text>
<text x="181" y="501" font-family="Liberation Mono" font-size="13.6" fill="#d42a2a" stroke="#d42a2a" stroke-width="0.4" textLength="8" lengthAdjust="spacingAndGlyphs">8</text>
<text x="189" y="501" font-family="Liberation Mono" font-size="13.6" fill="#b834cc" stroke="#b834cc" stroke-width="0.4" textLength="8" lengthAdjust="spacingAndGlyphs">&gt;</text>
<text x="197" y="501" font-family="Liberation Mono" font-size="13.6" fill="#b834cc" stroke="#b834cc" stroke-width="0.4" textLength="8" lengthAdjust="spacingAndGlyphs">,</text>
<text x="205" y="501" font-family="Liberation Mono" font-size="13.6" fill="#d6d6d6" stroke="#d6d6d6" stroke-width="0.4" textLength="24" lengthAdjust="spacingAndGlyphs">sw2</text>
<text x="229" y="501" font-family="Liberation Mono" font-size="13.6" fill="#b834cc" stroke="#b834cc" stroke-width="0.4" textLength="8" lengthAdjust="spacingAndGlyphs">&lt;</text>
<text x="237" y="501" font-family="Liberation Mono" font-size="13.6" fill="#d42a2a" stroke="#d42a2a" stroke-width="0.4" textLength="8" lengthAdjust="spacingAndGlyphs">8</text>
<text x="245" y="501" font-family="Liberation Mono" font-size="13.6" fill="#b834cc" stroke="#b834cc" stroke-width="0.4" textLength="8" lengthAdjust="spacingAndGlyphs">&gt;</text>
<text x="253" y="501" font-family="Liberation Mono" font-size="13.6" fill="#b834cc" stroke="#b834cc" stroke-width="0.4" textLength="8" lengthAdjust="spacingAndGlyphs">;</text>
<text x="53" y="517" font-family="Liberation Mono" font-size="13.6" fill="#cc7e24" stroke="#cc7e24" stroke-width="0.4" textLength="8" lengthAdjust="spacingAndGlyphs">5</text>
<text x="101" y="517" font-family="Liberation Mono" font-size="13.6" fill="#cc7e24" stroke="#cc7e24" stroke-width="0.4" textLength="48" lengthAdjust="spacingAndGlyphs">output</text>
<text x="149" y="517" font-family="Liberation Mono" font-size="13.6" fill="#d6d6d6" stroke="#d6d6d6" stroke-width="0.4" textLength="32" lengthAdjust="spacingAndGlyphs"> adh</text>
<text x="181" y="517" font-family="Liberation Mono" font-size="13.6" fill="#b834cc" stroke="#b834cc" stroke-width="0.4" textLength="8" lengthAdjust="spacingAndGlyphs">&lt;</text>
<text x="189" y="517" font-family="Liberation Mono" font-size="13.6" fill="#d42a2a" stroke="#d42a2a" stroke-width="0.4" textLength="16" lengthAdjust="spacingAndGlyphs">16</text>
<text x="205" y="517" font-family="Liberation Mono" font-size="13.6" fill="#b834cc" stroke="#b834cc" stroke-width="0.4" textLength="8" lengthAdjust="spacingAndGlyphs">&gt;</text>
<text x="213" y="517" font-family="Liberation Mono" font-size="13.6" fill="#b834cc" stroke="#b834cc" stroke-width="0.4" textLength="8" lengthAdjust="spacingAndGlyphs">,</text>
<text x="221" y="517" font-family="Liberation Mono" font-size="13.6" fill="#d6d6d6" stroke="#d6d6d6" stroke-width="0.4" textLength="24" lengthAdjust="spacingAndGlyphs">adl</text>
<text x="245" y="517" font-family="Liberation Mono" font-size="13.6" fill="#b834cc" stroke="#b834cc" stroke-width="0.4" textLength="8" lengthAdjust="spacingAndGlyphs">&lt;</text>
<text x="253" y="517" font-family="Liberation Mono" font-size="13.6" fill="#d42a2a" stroke="#d42a2a" stroke-width="0.4" textLength="16" lengthAdjust="spacingAndGlyphs">16</text>
<text x="269" y="517" font-family="Liberation Mono" font-size="13.6" fill="#b834cc" stroke="#b834cc" stroke-width="0.4" textLength="8" lengthAdjust="spacingAndGlyphs">&gt;</text>
<text x="277" y="517" font-family="Liberation Mono" font-size="13.6" fill="#b834cc" stroke="#b834cc" stroke-width="0.4" textLength="8" lengthAdjust="spacingAndGlyphs">;</text>
<text x="53" y="533" font-family="Liberation Mono" font-size="13.6" fill="#cc7e24" stroke="#cc7e24" stroke-width="0.4" textLength="8" lengthAdjust="spacingAndGlyphs">6</text>
<text x="101" y="533" font-family="Liberation Mono" font-size="13.6" fill="#cc7e24" stroke="#cc7e24" stroke-width="0.4" textLength="48" lengthAdjust="spacingAndGlyphs">output</text>
<text x="149" y="533" font-family="Liberation Mono" font-size="13.6" fill="#d6d6d6" stroke="#d6d6d6" stroke-width="0.4" textLength="32" lengthAdjust="spacingAndGlyphs"> dbh</text>
<text x="181" y="533" font-family="Liberation Mono" font-size="13.6" fill="#b834cc" stroke="#b834cc" stroke-width="0.4" textLength="8" lengthAdjust="spacingAndGlyphs">&lt;</text>
<text x="189" y="533" font-family="Liberation Mono" font-size="13.6" fill="#d42a2a" stroke="#d42a2a" stroke-width="0.4" textLength="16" lengthAdjust="spacingAndGlyphs">16</text>
<text x="205" y="533" font-family="Liberation Mono" font-size="13.6" fill="#b834cc" stroke="#b834cc" stroke-width="0.4" textLength="8" lengthAdjust="spacingAndGlyphs">&gt;</text>
<text x="213" y="533" font-family="Liberation Mono" font-size="13.6" fill="#b834cc" stroke="#b834cc" stroke-width="0.4" textLength="8" lengthAdjust="spacingAndGlyphs">,</text>
<text x="221" y="533" font-family="Liberation Mono" font-size="13.6" fill="#d6d6d6" stroke="#d6d6d6" stroke-width="0.4" textLength="24" lengthAdjust="spacingAndGlyphs">dbl</text>
<text x="245" y="533" font-family="Liberation Mono" font-size="13.6" fill="#b834cc" stroke="#b834cc" stroke-width="0.4" textLength="8" lengthAdjust="spacingAndGlyphs">&lt;</text>
<text x="253" y="533" font-family="Liberation Mono" font-size="13.6" fill="#d42a2a" stroke="#d42a2a" stroke-width="0.4" textLength="16" lengthAdjust="spacingAndGlyphs">16</text>
<text x="269" y="533" font-family="Liberation Mono" font-size="13.6" fill="#b834cc" stroke="#b834cc" stroke-width="0.4" textLength="8" lengthAdjust="spacingAndGlyphs">&gt;</text>
<text x="277" y="533" font-family="Liberation Mono" font-size="13.6" fill="#b834cc" stroke="#b834cc" stroke-width="0.4" textLength="8" lengthAdjust="spacingAndGlyphs">;</text>
<text x="53" y="549" font-family="Liberation Mono" font-size="13.6" fill="#cc7e24" stroke="#cc7e24" stroke-width="0.4" textLength="8" lengthAdjust="spacingAndGlyphs">7</text>
<text x="101" y="549" font-family="Liberation Mono" font-size="13.6" fill="#cc7e24" stroke="#cc7e24" stroke-width="0.4" textLength="48" lengthAdjust="spacingAndGlyphs">output</text>
<text x="149" y="549" font-family="Liberation Mono" font-size="13.6" fill="#d6d6d6" stroke="#d6d6d6" stroke-width="0.4" textLength="32" lengthAdjust="spacingAndGlyphs"> gio</text>
<text x="181" y="549" font-family="Liberation Mono" font-size="13.6" fill="#b834cc" stroke="#b834cc" stroke-width="0.4" textLength="8" lengthAdjust="spacingAndGlyphs">&lt;</text>
<text x="189" y="549" font-family="Liberation Mono" font-size="13.6" fill="#d42a2a" stroke="#d42a2a" stroke-width="0.4" textLength="8" lengthAdjust="spacingAndGlyphs">8</text>
<text x="197" y="549" font-family="Liberation Mono" font-size="13.6" fill="#b834cc" stroke="#b834cc" stroke-width="0.4" textLength="8" lengthAdjust="spacingAndGlyphs">&gt;</text>
<text x="205" y="549" font-family="Liberation Mono" font-size="13.6" fill="#b834cc" stroke="#b834cc" stroke-width="0.4" textLength="8" lengthAdjust="spacingAndGlyphs">;</text>
<text x="53" y="565" font-family="Liberation Mono" font-size="13.6" fill="#cc7e24" stroke="#cc7e24" stroke-width="0.4" textLength="8" lengthAdjust="spacingAndGlyphs">8</text>
<text x="101" y="565" font-family="Liberation Mono" font-size="13.6" fill="#cc7e24" stroke="#cc7e24" stroke-width="0.4" textLength="48" lengthAdjust="spacingAndGlyphs">output</text>
<text x="149" y="565" font-family="Liberation Mono" font-size="13.6" fill="#d6d6d6" stroke="#d6d6d6" stroke-width="0.4" textLength="48" lengthAdjust="spacingAndGlyphs"> ramce</text>
<text x="197" y="565" font-family="Liberation Mono" font-size="13.6" fill="#b834cc" stroke="#b834cc" stroke-width="0.4" textLength="8" lengthAdjust="spacingAndGlyphs">&lt;</text>
<text x="205" y="565" font-family="Liberation Mono" font-size="13.6" fill="#d42a2a" stroke="#d42a2a" stroke-width="0.4" textLength="8" lengthAdjust="spacingAndGlyphs">4</text>
<text x="213" y="565" font-family="Liberation Mono" font-size="13.6" fill="#b834cc" stroke="#b834cc" stroke-width="0.4" textLength="8" lengthAdjust="spacingAndGlyphs">&gt;</text>
<text x="221" y="565" font-family="Liberation Mono" font-size="13.6" fill="#b834cc" stroke="#b834cc" stroke-width="0.4" textLength="8" lengthAdjust="spacingAndGlyphs">,</text>
<text x="229" y="565" font-family="Liberation Mono" font-size="13.6" fill="#d6d6d6" stroke="#d6d6d6" stroke-width="0.4" textLength="40" lengthAdjust="spacingAndGlyphs">romce</text>
<text x="269" y="565" font-family="Liberation Mono" font-size="13.6" fill="#b834cc" stroke="#b834cc" stroke-width="0.4" textLength="8" lengthAdjust="spacingAndGlyphs">&lt;</text>
<text x="277" y="565" font-family="Liberation Mono" font-size="13.6" fill="#d42a2a" stroke="#d42a2a" stroke-width="0.4" textLength="8" lengthAdjust="spacingAndGlyphs">4</text>
<text x="285" y="565" font-family="Liberation Mono" font-size="13.6" fill="#b834cc" stroke="#b834cc" stroke-width="0.4" textLength="8" lengthAdjust="spacingAndGlyphs">&gt;</text>
<text x="293" y="565" font-family="Liberation Mono" font-size="13.6" fill="#b834cc" stroke="#b834cc" stroke-width="0.4" textLength="8" lengthAdjust="spacingAndGlyphs">;</text>
<text x="53" y="581" font-family="Liberation Mono" font-size="13.6" fill="#cc7e24" stroke="#cc7e24" stroke-width="0.4" textLength="8" lengthAdjust="spacingAndGlyphs">9</text>
<text x="45" y="597" font-family="Liberation Mono" font-size="13.6" fill="#cc7e24" stroke="#cc7e24" stroke-width="0.4" textLength="16" lengthAdjust="spacingAndGlyphs">10</text>
<text x="101" y="597" font-family="Liberation Mono" font-size="13.6" fill="#d6d6d6" stroke="#d6d6d6" stroke-width="0.4" textLength="56" lengthAdjust="spacingAndGlyphs">snx Snx</text>
<text x="157" y="597" font-family="Liberation Mono" font-size="13.6" fill="#b834cc" stroke="#b834cc" stroke-width="0.4" textLength="8" lengthAdjust="spacingAndGlyphs">;</text>
<text x="45" y="613" font-family="Liberation Mono" font-size="13.6" fill="#cc7e24" stroke="#cc7e24" stroke-width="0.4" textLength="16" lengthAdjust="spacingAndGlyphs">11</text>
<text x="101" y="613" font-family="Liberation Mono" font-size="13.6" fill="#d42a2a" stroke="#d42a2a" stroke-width="0.4" textLength="24" lengthAdjust="spacingAndGlyphs">ROM</text>
<text x="125" y="613" font-family="Liberation Mono" font-size="13.6" fill="#d6d6d6" stroke="#d6d6d6" stroke-width="0.4" textLength="40" lengthAdjust="spacingAndGlyphs"> Imem</text>
<text x="165" y="613" font-family="Liberation Mono" font-size="13.6" fill="#b834cc" stroke="#b834cc" stroke-width="0.4" textLength="8" lengthAdjust="spacingAndGlyphs">;</text>
<text x="45" y="629" font-family="Liberation Mono" font-size="13.6" fill="#cc7e24" stroke="#cc7e24" stroke-width="0.4" textLength="16" lengthAdjust="spacingAndGlyphs">12</text>
<text x="101" y="629" font-family="Liberation Mono" font-size="13.6" fill="#d42a2a" stroke="#d42a2a" stroke-width="0.4" textLength="24" lengthAdjust="spacingAndGlyphs">RAM</text>
<text x="125" y="629" font-family="Liberation Mono" font-size="13.6" fill="#d6d6d6" stroke="#d6d6d6" stroke-width="0.4" textLength="40" lengthAdjust="spacingAndGlyphs"> Dmem</text>
<text x="165" y="629" font-family="Liberation Mono" font-size="13.6" fill="#b834cc" stroke="#b834cc" stroke-width="0.4" textLength="8" lengthAdjust="spacingAndGlyphs">;</text>
<text x="45" y="645" font-family="Liberation Mono" font-size="13.6" fill="#cc7e24" stroke="#cc7e24" stroke-width="0.4" textLength="16" lengthAdjust="spacingAndGlyphs">13</text>
<text x="101" y="645" font-family="Liberation Mono" font-size="13.6" fill="#cc7e24" stroke="#cc7e24" stroke-width="0.4" textLength="24" lengthAdjust="spacingAndGlyphs">mem</text>
<text x="125" y="645" font-family="Liberation Mono" font-size="13.6" fill="#d6d6d6" stroke="#d6d6d6" stroke-width="0.4" textLength="64" lengthAdjust="spacingAndGlyphs"> Lowmem[</text>
<text x="189" y="645" font-family="Liberation Mono" font-size="13.6" fill="#d42a2a" stroke="#d42a2a" stroke-width="0.4" textLength="8" lengthAdjust="spacingAndGlyphs">4</text>
<text x="197" y="645" font-family="Liberation Mono" font-size="13.6" fill="#d6d6d6" stroke="#d6d6d6" stroke-width="0.4" textLength="8" lengthAdjust="spacingAndGlyphs">]</text>
<text x="205" y="645" font-family="Liberation Mono" font-size="13.6" fill="#b834cc" stroke="#b834cc" stroke-width="0.4" textLength="8" lengthAdjust="spacingAndGlyphs">&lt;</text>
<text x="213" y="645" font-family="Liberation Mono" font-size="13.6" fill="#d42a2a" stroke="#d42a2a" stroke-width="0.4" textLength="16" lengthAdjust="spacingAndGlyphs">16</text>
<text x="229" y="645" font-family="Liberation Mono" font-size="13.6" fill="#b834cc" stroke="#b834cc" stroke-width="0.4" textLength="8" lengthAdjust="spacingAndGlyphs">&gt;</text>
<text x="237" y="645" font-family="Liberation Mono" font-size="13.6" fill="#b834cc" stroke="#b834cc" stroke-width="0.4" textLength="8" lengthAdjust="spacingAndGlyphs">;</text>
<text x="45" y="661" font-family="Liberation Mono" font-size="13.6" fill="#cc7e24" stroke="#cc7e24" stroke-width="0.4" textLength="16" lengthAdjust="spacingAndGlyphs">14</text>
<text x="45" y="677" font-family="Liberation Mono" font-size="13.6" fill="#cc7e24" stroke="#cc7e24" stroke-width="0.4" textLength="16" lengthAdjust="spacingAndGlyphs">15</text>
<text x="101" y="677" font-family="Liberation Mono" font-size="13.6" fill="#cc7e24" stroke="#cc7e24" stroke-width="0.4" textLength="24" lengthAdjust="spacingAndGlyphs">par</text>
<text x="133" y="677" font-family="Liberation Mono" font-size="13.6" fill="#b834cc" stroke="#b834cc" stroke-width="0.4" textLength="8" lengthAdjust="spacingAndGlyphs">{</text>
<text x="45" y="693" font-family="Liberation Mono" font-size="13.6" fill="#cc7e24" stroke="#cc7e24" stroke-width="0.4" textLength="16" lengthAdjust="spacingAndGlyphs">16</text>
<text x="125" y="693" font-family="Liberation Mono" font-size="13.6" fill="#d6d6d6" stroke="#d6d6d6" stroke-width="0.4" textLength="40" lengthAdjust="spacingAndGlyphs">ramce</text>
<text x="165" y="693" font-family="Liberation Mono" font-size="13.6" fill="#30c030" stroke="#30c030" stroke-width="0.4" textLength="8" lengthAdjust="spacingAndGlyphs">=</text>
<text x="173" y="693" font-family="Liberation Mono" font-size="13.6" fill="#d42a2a" stroke="#d42a2a" stroke-width="0.4" textLength="24" lengthAdjust="spacingAndGlyphs">0xf</text>
<text x="197" y="693" font-family="Liberation Mono" font-size="13.6" fill="#b834cc" stroke="#b834cc" stroke-width="0.4" textLength="8" lengthAdjust="spacingAndGlyphs">;</text>
<text x="205" y="693" font-family="Liberation Mono" font-size="13.6" fill="#d6d6d6" stroke="#d6d6d6" stroke-width="0.4" textLength="48" lengthAdjust="spacingAndGlyphs"> romce</text>
<text x="253" y="693" font-family="Liberation Mono" font-size="13.6" fill="#30c030" stroke="#30c030" stroke-width="0.4" textLength="8" lengthAdjust="spacingAndGlyphs">=</text>
<text x="261" y="693" font-family="Liberation Mono" font-size="13.6" fill="#d42a2a" stroke="#d42a2a" stroke-width="0.4" textLength="24" lengthAdjust="spacingAndGlyphs">0xf</text>
<text x="285" y="693" font-family="Liberation Mono" font-size="13.6" fill="#b834cc" stroke="#b834cc" stroke-width="0.4" textLength="8" lengthAdjust="spacingAndGlyphs">;</text>
<text x="45" y="709" font-family="Liberation Mono" font-size="13.6" fill="#cc7e24" stroke="#cc7e24" stroke-width="0.4" textLength="16" lengthAdjust="spacingAndGlyphs">17</text>
<text x="125" y="709" font-family="Liberation Mono" font-size="13.6" fill="#d6d6d6" stroke="#d6d6d6" stroke-width="0.4" textLength="32" lengthAdjust="spacingAndGlyphs">gio </text>
<text x="157" y="709" font-family="Liberation Mono" font-size="13.6" fill="#30c030" stroke="#30c030" stroke-width="0.4" textLength="8" lengthAdjust="spacingAndGlyphs">=</text>
<text x="173" y="709" font-family="Liberation Mono" font-size="13.6" fill="#d42a2a" stroke="#d42a2a" stroke-width="0.4" textLength="64" lengthAdjust="spacingAndGlyphs">0b000000</text>
<text x="237" y="709" font-family="Liberation Mono" font-size="13.6" fill="#30c030" stroke="#30c030" stroke-width="0.4" textLength="16" lengthAdjust="spacingAndGlyphs">||</text>
<text x="253" y="709" font-family="Liberation Mono" font-size="13.6" fill="#d6d6d6" stroke="#d6d6d6" stroke-width="0.4" textLength="24" lengthAdjust="spacingAndGlyphs">Snx</text>
<text x="277" y="709" font-family="Liberation Mono" font-size="13.6" fill="#b834cc" stroke="#b834cc" stroke-width="0.4" textLength="8" lengthAdjust="spacingAndGlyphs">.</text>
<text x="285" y="709" font-family="Liberation Mono" font-size="13.6" fill="#d6d6d6" stroke="#d6d6d6" stroke-width="0.4" textLength="16" lengthAdjust="spacingAndGlyphs">wb</text>
<text x="301" y="709" font-family="Liberation Mono" font-size="13.6" fill="#30c030" stroke="#30c030" stroke-width="0.4" textLength="16" lengthAdjust="spacingAndGlyphs">||</text>
<text x="317" y="709" font-family="Liberation Mono" font-size="13.6" fill="#d6d6d6" stroke="#d6d6d6" stroke-width="0.4" textLength="24" lengthAdjust="spacingAndGlyphs">Snx</text>
<text x="341" y="709" font-family="Liberation Mono" font-size="13.6" fill="#b834cc" stroke="#b834cc" stroke-width="0.4" textLength="8" lengthAdjust="spacingAndGlyphs">.</text>
<text x="349" y="709" font-family="Liberation Mono" font-size="13.6" fill="#d6d6d6" stroke="#d6d6d6" stroke-width="0.4" textLength="24" lengthAdjust="spacingAndGlyphs">hlt</text>
<text x="373" y="709" font-family="Liberation Mono" font-size="13.6" fill="#b834cc" stroke="#b834cc" stroke-width="0.4" textLength="8" lengthAdjust="spacingAndGlyphs">;</text>
<text x="45" y="725" font-family="Liberation Mono" font-size="13.6" fill="#cc7e24" stroke="#cc7e24" stroke-width="0.4" textLength="16" lengthAdjust="spacingAndGlyphs">18</text>
<text x="125" y="725" font-family="Liberation Mono" font-size="13.6" fill="#cc7e24" stroke="#cc7e24" stroke-width="0.4" textLength="24" lengthAdjust="spacingAndGlyphs">any</text>
<text x="157" y="725" font-family="Liberation Mono" font-size="13.6" fill="#b834cc" stroke="#b834cc" stroke-width="0.4" textLength="8" lengthAdjust="spacingAndGlyphs">{</text>
</svg>
</body></html>
